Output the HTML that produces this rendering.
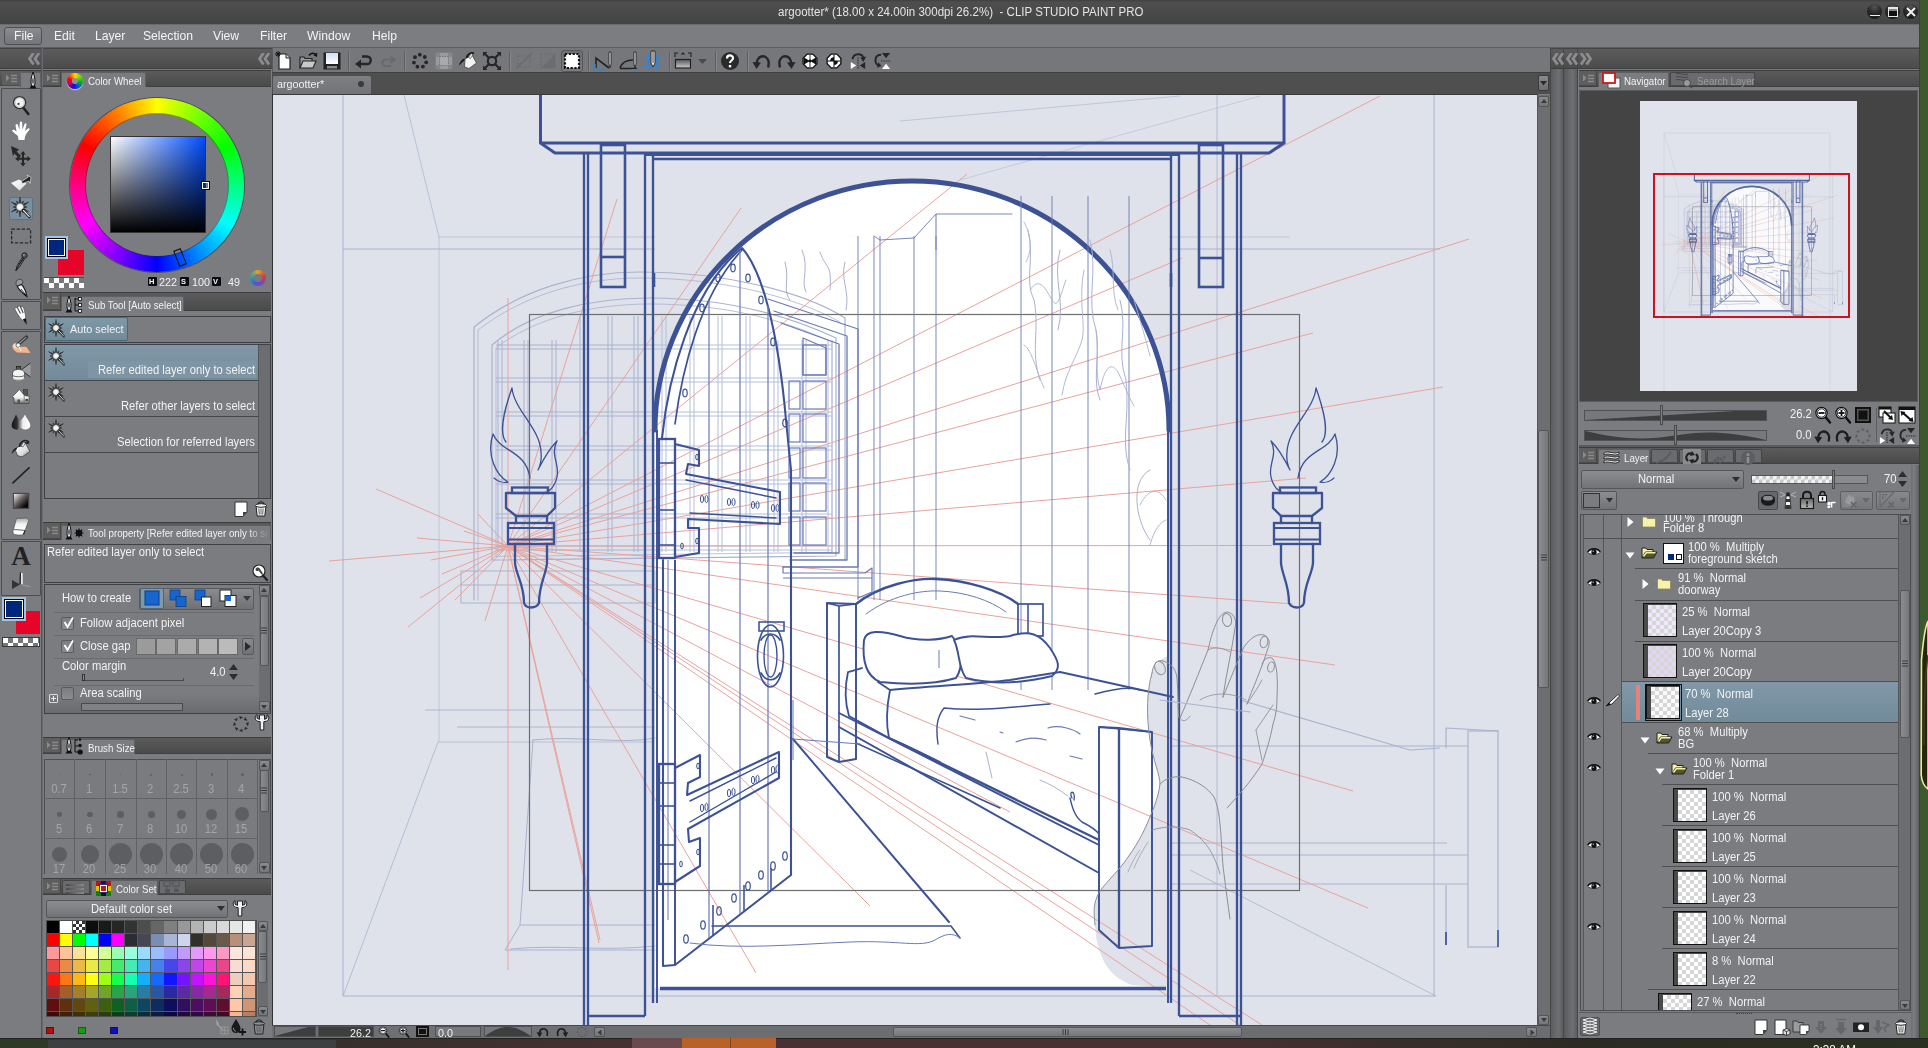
<!DOCTYPE html><html><head><meta charset="utf-8"><title>CLIP STUDIO PAINT PRO</title><style>*{box-sizing:border-box;margin:0;padding:0}
html,body{width:1928px;height:1048px;overflow:hidden;background:#7b7c80;font-family:"Liberation Sans",sans-serif;font-size:12px;color:#f2f2f2}
.a{position:absolute}
.t{position:absolute;white-space:nowrap;line-height:1;transform:scaleX(.935);transform-origin:0 50%}
.menu{position:absolute;top:29px;font-size:13px;color:#f4f4f4}
.chk{background-image:linear-gradient(45deg,#ccc 25%,transparent 25%,transparent 75%,#ccc 75%),linear-gradient(45deg,#ccc 25%,#fff 25%,#fff 75%,#ccc 75%);background-size:10px 10px;background-position:0 0,5px 5px}
.chk2{background-color:#fff;background-image:linear-gradient(45deg,#d6d6d6 25%,transparent 25%,transparent 75%,#d6d6d6 75%),linear-gradient(45deg,#d6d6d6 25%,transparent 25%,transparent 75%,#d6d6d6 75%);background-size:8px 8px;background-position:0 0,4px 4px}
.chk3{background-color:#f4f4f4;background-image:linear-gradient(45deg,#c4c4c4 25%,transparent 25%,transparent 75%,#c4c4c4 75%),linear-gradient(45deg,#c4c4c4 25%,transparent 25%,transparent 75%,#c4c4c4 75%);background-size:7px 7px;background-position:0 0,3.5px 3.5px}
.chkd{background-color:#fff;background-image:linear-gradient(45deg,#777 25%,transparent 25%,transparent 75%,#777 75%),linear-gradient(45deg,#777 25%,transparent 25%,transparent 75%,#777 75%);background-size:10px 10px;background-position:0 0,5px 5px}
</style></head><body>
<!-- frame -->
<div class="a" style="left:0px;top:0px;width:1920px;height:24px;background:linear-gradient(#3f3f3f 0,#4e4e4e 2px,#494949 60%,#434343 100%)"></div>
<div class="t" style="left:778px;top:6px;font-size:12.3px;color:#e4e4e4;letter-spacing:0.04px">argootter* (18.00 x 24.00in 300dpi 26.2%)&nbsp; - CLIP STUDIO PAINT PRO</div>
<div class="a" style="left:0px;top:24px;width:1920px;height:24px;background:#7c7d81;border-top:1px solid #6a6b6f;border-bottom:1px solid #5c5d60"></div>
<div class="a" style="left:4px;top:27px;width:38px;height:18px;border:1px solid #4e4f52;border-radius:3px;background:linear-gradient(#8b8c90,#74757a)"></div>
<div class="menu t" style="left:14px">File</div>
<div class="menu t" style="left:54px">Edit</div>
<div class="menu t" style="left:95px">Layer</div>
<div class="menu t" style="left:143px">Selection</div>
<div class="menu t" style="left:213px">View</div>
<div class="menu t" style="left:260px">Filter</div>
<div class="menu t" style="left:307px">Window</div>
<div class="menu t" style="left:372px">Help</div>
<div class="a" style="left:1920px;top:0px;width:8px;height:1048px;background:#3c5a2d"></div>
<svg class="a" style="left:1920px;top:615px;" width="8" height="180" viewBox="0 0 8 180"><path d="M8,6 C4,14 3,30 1.5,45 L1.2,160 C2,168 5,172 8,174 Z" fill="#24260f" stroke="#f3e3a0" stroke-width="1.6"/><path d="M8,40 C5,60 4,90 4,130" stroke="#3d3f1c" stroke-width="1.5" fill="none"/></svg>
<div class="a" style="left:0px;top:1038px;width:1928px;height:10px;background:linear-gradient(90deg,#2e3a26 0,#33302a 15%,#4a3033 35%,#4a2f33 62%,#352d28 76%,#2c2b21 82%,#2a3121 100%);border-top:1px solid #222"></div>
<div class="a" style="left:48px;top:1040px;width:288px;height:8px;background:#3e3f41"></div>
<div class="a" style="left:632px;top:1038px;width:50px;height:10px;background:#6a4a4e"></div>
<div class="a" style="left:682px;top:1038px;width:48px;height:10px;background:#b8622a"></div>
<div class="a" style="left:730px;top:1038px;width:46px;height:10px;background:#b8622a;border-left:1px solid #7a4522"></div>
<div class="t" style="left:1813px;top:1043.5px;font-size:12.5px;color:#ffffff;">3:38 AM</div>
<div class="a" style="left:0px;top:48px;width:272px;height:21px;background:linear-gradient(#5c5c5c,#4c4c4c);border-top:1px solid #444;border-bottom:1px solid #3e3e3e"></div>
<div class="a" style="left:41px;top:48px;width:2px;height:990px;background:#6a6b6f;border-left:1px solid #55565a"></div>
<div class="a" style="left:272px;top:48px;width:1278px;height:24px;background:#76777b;border-left:1px solid #5a5b5e"></div>
<div class="a" style="left:272px;top:72px;width:1278px;height:22px;background:#4f4f4f;border-top:1px solid #404040"></div>
<div class="a" style="left:273px;top:76px;width:98px;height:18px;background:linear-gradient(#7e7f83,#727377);border-radius:2px 2px 0 0"></div>
<div class="t" style="left:277px;top:79px;font-size:11.5px;color:#f0f0f0;">argootter*</div>
<div class="a" style="left:358px;top:81px;width:6px;height:6px;background:#3a3a3a;border-radius:50%"></div>
<div class="a" style="left:272px;top:94px;width:1266px;height:1px;background:#3a3a3a"></div>
<div class="a" style="left:272px;top:94px;width:1px;height:932px;background:#2e3034"></div>
<!-- canvas -->
<div class="a" style="left:273px;top:95px;width:1264px;height:930px;background:#dfe2ea;overflow:hidden"><svg class="a" style="left:0;top:0" width="1264" height="930" viewBox="273 95 1264 930"><path d="M655,988 L655,430 A257,249 0 0 1 1169,430 L1169,656 C1162,657 1155,664 1152,673 C1147,690 1146,715 1150,740 C1153,760 1160,775 1160,784 C1158,800 1152,812 1147,824 C1140,840 1132,852 1123,864 C1112,878 1100,888 1097,897 C1093,906 1094,915 1095,925 C1096,945 1102,975 1132,985 L1166,988 Z" fill="#ffffff" stroke="none"/>
<line x1="343" y1="95" x2="343" y2="996" stroke="#aab2cf" stroke-width="1" opacity="1"/>
<line x1="1434" y1="95" x2="1434" y2="996" stroke="#aab2cf" stroke-width="1" opacity="1"/>
<line x1="1217" y1="95" x2="1217" y2="996" stroke="#aab2cf" stroke-width="1" opacity="0.8"/>
<line x1="900" y1="121" x2="1180" y2="96" stroke="#aab2cf" stroke-width="1" opacity="0.6"/>
<line x1="960" y1="180" x2="1260" y2="96" stroke="#aab2cf" stroke-width="1" opacity="0.5"/>
<line x1="343" y1="249" x2="655" y2="249" stroke="#aab2cf" stroke-width="1" opacity="1"/>
<line x1="1169" y1="249" x2="1440" y2="249" stroke="#aab2cf" stroke-width="1" opacity="1"/>
<line x1="438" y1="237" x2="655" y2="237" stroke="#aab2cf" stroke-width="1" opacity="0.6"/>
<line x1="1169" y1="237" x2="1290" y2="237" stroke="#aab2cf" stroke-width="1" opacity="0.6"/>
<line x1="404" y1="95" x2="439" y2="237" stroke="#aab2cf" stroke-width="1" opacity="0.7"/>
<line x1="439" y1="237" x2="439" y2="742" stroke="#aab2cf" stroke-width="1" opacity="0.6"/>
<line x1="343" y1="996" x2="1436" y2="996" stroke="#aab2cf" stroke-width="1" opacity="1"/>
<line x1="343" y1="996" x2="438" y2="742" stroke="#aab2cf" stroke-width="1" opacity="0.8"/>
<line x1="1436" y1="996" x2="1190" y2="870" stroke="#aab2cf" stroke-width="1" opacity="0.8"/>
<line x1="438" y1="742" x2="655" y2="742" stroke="#aab2cf" stroke-width="1" opacity="0.7"/>
<line x1="425" y1="710" x2="655" y2="710" stroke="#aab2cf" stroke-width="1" opacity="0.9"/>
<line x1="457" y1="727" x2="655" y2="727" stroke="#aab2cf" stroke-width="1" opacity="0.9"/>
<rect x="461" y="571" width="194" height="32" stroke="#aab2cf" stroke-width="1" fill="none" opacity="1"/>
<line x1="461" y1="585" x2="655" y2="585" stroke="#aab2cf" stroke-width="1" opacity="1"/>
<path d="M533,740 L520,925 L505,950 L655,950" stroke="#aab2cf" stroke-width="1" fill="none" opacity="1" stroke-linejoin="round" stroke-linecap="round" />
<path d="M511,949 C560,944 600,952 655,946" stroke="#aab2cf" stroke-width="1" fill="none" opacity="1" stroke-linejoin="round" stroke-linecap="round" />
<line x1="520" y1="925" x2="655" y2="925" stroke="#aab2cf" stroke-width="1" opacity="1"/>
<path d="M533,740 C580,735 620,745 655,738" stroke="#aab2cf" stroke-width="1" fill="none" opacity="1" stroke-linejoin="round" stroke-linecap="round" />
<rect x="1468" y="731" width="30" height="216" stroke="#aab2cf" stroke-width="1.2" fill="none" opacity="1"/>
<path d="M1446,748 L1446,728 L1498,731" stroke="#aab2cf" stroke-width="1.2" fill="none" opacity="1" stroke-linejoin="round" stroke-linecap="round" />
<line x1="1446" y1="885" x2="1446" y2="932" stroke="#aab2cf" stroke-width="1.2" opacity="1"/>
<line x1="1446" y1="932" x2="1446" y2="945" stroke="#3c5294" stroke-width="1.95" opacity="0.9"/>
<line x1="1498" y1="930" x2="1498" y2="947" stroke="#3c5294" stroke-width="1.95" opacity="0.8"/>
<line x1="1170" y1="746" x2="1468" y2="746" stroke="#aab2cf" stroke-width="1" opacity="1"/>
<line x1="1170" y1="843" x2="1447" y2="843" stroke="#aab2cf" stroke-width="1" opacity="1"/>
<line x1="1170" y1="855" x2="1468" y2="855" stroke="#aab2cf" stroke-width="1" opacity="1"/>
<line x1="1170" y1="884" x2="1468" y2="884" stroke="#aab2cf" stroke-width="1" opacity="1"/>
<line x1="1240" y1="700" x2="1410" y2="750" stroke="#aab2cf" stroke-width="1.2" opacity="1"/>
<line x1="1410" y1="750" x2="1440" y2="748" stroke="#aab2cf" stroke-width="1" opacity="1"/>
<path d="M474,600 L474,327 C520,290 580,272 640,272 C720,272 800,290 845,318 L845,560" stroke="#aab2cf" stroke-width="1.2" fill="none" opacity="1" stroke-linejoin="round" stroke-linecap="round" />
<path d="M478,600 L478,330 C522,296 580,278 640,278 C715,278 790,294 840,322" stroke="#aab2cf" stroke-width="1" fill="none" opacity="0.8" stroke-linejoin="round" stroke-linecap="round" />
<path d="M492,560 L492,345 C530,312 590,298 650,298 C720,298 780,312 836,338 L836,556 Z" stroke="#aab2cf" stroke-width="1.2" fill="none" opacity="1" stroke-linejoin="round" stroke-linecap="round" />
<path d="M496,556 L496,348 C534,318 592,304 650,304 C715,304 776,316 832,342 L832,552 Z" stroke="#aab2cf" stroke-width="1" fill="none" opacity="0.8" stroke-linejoin="round" stroke-linecap="round" />
<line x1="498" y1="340" x2="498" y2="552" stroke="#aab2cf" stroke-width="1" opacity="1"/>
<line x1="502" y1="340" x2="502" y2="552" stroke="#aab2cf" stroke-width="1" opacity="1"/>
<line x1="524" y1="340" x2="524" y2="552" stroke="#aab2cf" stroke-width="1" opacity="1"/>
<line x1="528" y1="340" x2="528" y2="552" stroke="#aab2cf" stroke-width="1" opacity="1"/>
<line x1="552" y1="340" x2="552" y2="552" stroke="#aab2cf" stroke-width="1" opacity="1"/>
<line x1="556" y1="340" x2="556" y2="552" stroke="#aab2cf" stroke-width="1" opacity="1"/>
<line x1="580" y1="316" x2="580" y2="552" stroke="#aab2cf" stroke-width="1" opacity="1"/>
<line x1="584" y1="316" x2="584" y2="552" stroke="#aab2cf" stroke-width="1" opacity="1"/>
<line x1="608" y1="316" x2="608" y2="552" stroke="#aab2cf" stroke-width="1" opacity="1"/>
<line x1="612" y1="316" x2="612" y2="552" stroke="#aab2cf" stroke-width="1" opacity="1"/>
<line x1="634" y1="316" x2="634" y2="552" stroke="#aab2cf" stroke-width="1" opacity="1"/>
<line x1="638" y1="316" x2="638" y2="552" stroke="#aab2cf" stroke-width="1" opacity="1"/>
<line x1="662" y1="316" x2="662" y2="552" stroke="#b4bedc" stroke-width="1" opacity="1"/>
<line x1="666" y1="316" x2="666" y2="552" stroke="#b4bedc" stroke-width="1" opacity="1"/>
<line x1="690" y1="316" x2="690" y2="552" stroke="#b4bedc" stroke-width="1" opacity="1"/>
<line x1="694" y1="316" x2="694" y2="552" stroke="#b4bedc" stroke-width="1" opacity="1"/>
<line x1="718" y1="316" x2="718" y2="552" stroke="#b4bedc" stroke-width="1" opacity="1"/>
<line x1="722" y1="316" x2="722" y2="552" stroke="#b4bedc" stroke-width="1" opacity="1"/>
<line x1="746" y1="316" x2="746" y2="552" stroke="#b4bedc" stroke-width="1" opacity="1"/>
<line x1="750" y1="316" x2="750" y2="552" stroke="#b4bedc" stroke-width="1" opacity="1"/>
<line x1="774" y1="340" x2="774" y2="552" stroke="#b4bedc" stroke-width="1" opacity="1"/>
<line x1="778" y1="340" x2="778" y2="552" stroke="#b4bedc" stroke-width="1" opacity="1"/>
<line x1="802" y1="340" x2="802" y2="552" stroke="#b4bedc" stroke-width="1" opacity="1"/>
<line x1="806" y1="340" x2="806" y2="552" stroke="#b4bedc" stroke-width="1" opacity="1"/>
<line x1="828" y1="340" x2="828" y2="552" stroke="#b4bedc" stroke-width="1" opacity="1"/>
<line x1="832" y1="340" x2="832" y2="552" stroke="#b4bedc" stroke-width="1" opacity="1"/>
<line x1="496" y1="345" x2="655" y2="345" stroke="#aab2cf" stroke-width="1" opacity="1"/>
<line x1="496" y1="349" x2="655" y2="349" stroke="#aab2cf" stroke-width="1" opacity="1"/>
<line x1="655" y1="345" x2="832" y2="345" stroke="#b4bedc" stroke-width="1" opacity="1"/>
<line x1="655" y1="349" x2="832" y2="349" stroke="#b4bedc" stroke-width="1" opacity="1"/>
<line x1="496" y1="378" x2="655" y2="378" stroke="#aab2cf" stroke-width="1" opacity="1"/>
<line x1="496" y1="382" x2="655" y2="382" stroke="#aab2cf" stroke-width="1" opacity="1"/>
<line x1="655" y1="378" x2="832" y2="378" stroke="#b4bedc" stroke-width="1" opacity="1"/>
<line x1="655" y1="382" x2="832" y2="382" stroke="#b4bedc" stroke-width="1" opacity="1"/>
<line x1="496" y1="412" x2="655" y2="412" stroke="#aab2cf" stroke-width="1" opacity="1"/>
<line x1="496" y1="416" x2="655" y2="416" stroke="#aab2cf" stroke-width="1" opacity="1"/>
<line x1="655" y1="412" x2="832" y2="412" stroke="#b4bedc" stroke-width="1" opacity="1"/>
<line x1="655" y1="416" x2="832" y2="416" stroke="#b4bedc" stroke-width="1" opacity="1"/>
<line x1="496" y1="446" x2="655" y2="446" stroke="#aab2cf" stroke-width="1" opacity="1"/>
<line x1="496" y1="450" x2="655" y2="450" stroke="#aab2cf" stroke-width="1" opacity="1"/>
<line x1="655" y1="446" x2="832" y2="446" stroke="#b4bedc" stroke-width="1" opacity="1"/>
<line x1="655" y1="450" x2="832" y2="450" stroke="#b4bedc" stroke-width="1" opacity="1"/>
<line x1="496" y1="480" x2="655" y2="480" stroke="#aab2cf" stroke-width="1" opacity="1"/>
<line x1="496" y1="484" x2="655" y2="484" stroke="#aab2cf" stroke-width="1" opacity="1"/>
<line x1="655" y1="480" x2="832" y2="480" stroke="#b4bedc" stroke-width="1" opacity="1"/>
<line x1="655" y1="484" x2="832" y2="484" stroke="#b4bedc" stroke-width="1" opacity="1"/>
<line x1="496" y1="514" x2="655" y2="514" stroke="#aab2cf" stroke-width="1" opacity="1"/>
<line x1="496" y1="518" x2="655" y2="518" stroke="#aab2cf" stroke-width="1" opacity="1"/>
<line x1="655" y1="514" x2="832" y2="514" stroke="#b4bedc" stroke-width="1" opacity="1"/>
<line x1="655" y1="518" x2="832" y2="518" stroke="#b4bedc" stroke-width="1" opacity="1"/>
<line x1="496" y1="546" x2="655" y2="546" stroke="#aab2cf" stroke-width="1" opacity="1"/>
<line x1="496" y1="550" x2="655" y2="550" stroke="#aab2cf" stroke-width="1" opacity="1"/>
<line x1="655" y1="546" x2="832" y2="546" stroke="#b4bedc" stroke-width="1" opacity="1"/>
<line x1="655" y1="550" x2="832" y2="550" stroke="#b4bedc" stroke-width="1" opacity="1"/>
<line x1="508.0" y1="546.0" x2="329" y2="561" stroke="#e9a29c" stroke-width="1" opacity="1"/>
<line x1="508.0" y1="546.0" x2="376" y2="489" stroke="#e9a29c" stroke-width="1" opacity="1"/>
<line x1="508.0" y1="546.0" x2="417" y2="538" stroke="#e9a29c" stroke-width="1" opacity="1"/>
<line x1="508.0" y1="546.0" x2="431" y2="560" stroke="#e9a29c" stroke-width="1" opacity="1"/>
<line x1="508.0" y1="546.0" x2="442" y2="574" stroke="#e9a29c" stroke-width="1" opacity="1"/>
<line x1="508.0" y1="546.0" x2="408" y2="627" stroke="#e9a29c" stroke-width="1" opacity="1"/>
<line x1="508.0" y1="546.0" x2="464" y2="531" stroke="#e9a29c" stroke-width="1" opacity="1"/>
<line x1="508.0" y1="546.0" x2="478" y2="514" stroke="#e9a29c" stroke-width="1" opacity="1"/>
<line x1="508.0" y1="546.0" x2="485" y2="621" stroke="#e9a29c" stroke-width="1" opacity="1"/>
<line x1="508.0" y1="546.0" x2="599" y2="943" stroke="#e9a29c" stroke-width="1" opacity="1"/>
<line x1="508.0" y1="546.0" x2="756" y2="973" stroke="#e9a29c" stroke-width="1" opacity="1"/>
<line x1="508.0" y1="546.0" x2="870" y2="906" stroke="#e9a29c" stroke-width="1" opacity="1"/>
<line x1="508.0" y1="546.0" x2="617" y2="199" stroke="#e9a29c" stroke-width="1" opacity="1"/>
<line x1="508.0" y1="546.0" x2="741" y2="208" stroke="#e9a29c" stroke-width="1" opacity="1"/>
<line x1="508.0" y1="546.0" x2="1469" y2="239" stroke="#e9a29c" stroke-width="1" opacity="1"/>
<line x1="508.0" y1="546.0" x2="1443" y2="387" stroke="#e9a29c" stroke-width="1" opacity="1"/>
<line x1="508.0" y1="546.0" x2="1313" y2="333" stroke="#e9a29c" stroke-width="1" opacity="1"/>
<line x1="508.0" y1="546.0" x2="1380" y2="96" stroke="#e9a29c" stroke-width="1" opacity="1"/>
<line x1="508.0" y1="546.0" x2="1335" y2="665" stroke="#e9a29c" stroke-width="1" opacity="1"/>
<line x1="508.0" y1="546.0" x2="1353" y2="791" stroke="#e9a29c" stroke-width="1" opacity="1"/>
<line x1="508.0" y1="546.0" x2="1368" y2="908" stroke="#e9a29c" stroke-width="1" opacity="1"/>
<line x1="508.0" y1="546.0" x2="1240" y2="1025" stroke="#e9a29c" stroke-width="1" opacity="1"/>
<line x1="508.0" y1="546.0" x2="1262" y2="1025" stroke="#e9a29c" stroke-width="1" opacity="1"/>
<line x1="508.0" y1="546.0" x2="1210" y2="1025" stroke="#e9a29c" stroke-width="1" opacity="1"/>
<line x1="508.0" y1="546.0" x2="1010" y2="812" stroke="#e9a29c" stroke-width="1" opacity="1"/>
<line x1="508.0" y1="546.0" x2="967" y2="174" stroke="#e9a29c" stroke-width="1" opacity="1"/>
<line x1="508.0" y1="546.0" x2="1182" y2="258" stroke="#e9a29c" stroke-width="1" opacity="1"/>
<line x1="508.0" y1="546.0" x2="1306" y2="478" stroke="#e9a29c" stroke-width="1" opacity="1"/>
<line x1="508.0" y1="546.0" x2="1293" y2="604" stroke="#e9a29c" stroke-width="1" opacity="1"/>
<line x1="508.0" y1="546.0" x2="1272" y2="545.5" stroke="#e9a29c" stroke-width="1" opacity="1"/>
<line x1="508.0" y1="546.0" x2="600" y2="940" stroke="#e9a29c" stroke-width="1" opacity="1"/>
<line x1="508.0" y1="546.0" x2="420" y2="598" stroke="#e9a29c" stroke-width="1" opacity="1"/>
<line x1="508.0" y1="546.0" x2="455" y2="600" stroke="#e9a29c" stroke-width="1" opacity="1"/>
<line x1="508" y1="298" x2="508" y2="970" stroke="#e9a29c" stroke-width="1" opacity="1"/>
<rect x="529.5" y="314.5" width="770" height="576" stroke="#6e6e72" stroke-width="1.2" fill="none" opacity="1"/>
<path d="M540.5,95 L540.5,143 L1284,143 L1284,95" stroke="#3c5294" stroke-width="2.99" fill="none" opacity="1" stroke-linejoin="round" stroke-linecap="round" />
<path d="M540.5,143 L555,153 L1269,153 L1284,143" stroke="#3c5294" stroke-width="2.99" fill="none" opacity="1" stroke-linejoin="round" stroke-linecap="round" />
<line x1="584" y1="154" x2="584" y2="1027" stroke="#3c5294" stroke-width="2.34" opacity="1"/>
<line x1="588" y1="154" x2="588" y2="1027" stroke="#3c5294" stroke-width="2.34" opacity="1"/>
<line x1="645" y1="154" x2="645" y2="1016" stroke="#3c5294" stroke-width="2.34" opacity="1"/>
<line x1="653" y1="154" x2="653" y2="1003" stroke="#3c5294" stroke-width="2.34" opacity="1"/>
<line x1="1171" y1="154" x2="1171" y2="1003" stroke="#3c5294" stroke-width="2.34" opacity="1"/>
<line x1="1179" y1="154" x2="1179" y2="1016" stroke="#3c5294" stroke-width="2.34" opacity="1"/>
<line x1="1237" y1="154" x2="1237" y2="1027" stroke="#3c5294" stroke-width="2.34" opacity="1"/>
<line x1="1241" y1="154" x2="1241" y2="1027" stroke="#3c5294" stroke-width="2.34" opacity="1"/>
<line x1="588" y1="1016" x2="645" y2="1016" stroke="#3c5294" stroke-width="2.6" opacity="1"/>
<line x1="1179" y1="1016" x2="1241" y2="1016" stroke="#3c5294" stroke-width="2.6" opacity="1"/>
<line x1="653" y1="159" x2="1171" y2="159" stroke="#3c5294" stroke-width="2.34" opacity="1"/>
<line x1="645" y1="155" x2="1179" y2="155" stroke="#3c5294" stroke-width="1.95" opacity="1"/>
<rect x="601" y="145" width="24" height="142" stroke="#3c5294" stroke-width="2.6" fill="none" opacity="1"/>
<line x1="601" y1="257" x2="625" y2="257" stroke="#3c5294" stroke-width="2.6" opacity="1"/>
<rect x="1199" y="145" width="24" height="142" stroke="#3c5294" stroke-width="2.6" fill="none" opacity="1"/>
<line x1="1199" y1="258" x2="1223" y2="258" stroke="#3c5294" stroke-width="2.6" opacity="1"/>
<line x1="1171" y1="273" x2="1171" y2="287" stroke="#3c5294" stroke-width="2.6" opacity="1"/>
<line x1="654" y1="273" x2="654" y2="287" stroke="#3c5294" stroke-width="2.6" opacity="1"/>
<path d="M655,430 A257,249 0 0 1 1169,430" fill="none" stroke="#3c5294" stroke-width="5" stroke-linecap="round"/>
<line x1="657" y1="430" x2="657" y2="1003" stroke="#3c5294" stroke-width="1.95" opacity="1"/>
<line x1="1168" y1="430" x2="1168" y2="1003" stroke="#3c5294" stroke-width="1.95" opacity="1"/>
<line x1="660" y1="988.5" x2="1166" y2="988.5" stroke="#3c5294" stroke-width="3.64" opacity="1"/>
<path d="M512,388 C505,408 498,432 506,442 M512,388 C514,410 540,428 541,452 C542,462 538,470 538,470 M493,434 C486,455 496,475 508,482 C500,484 497,480 494,478 M493,434 C500,452 526,450 530,478 M557,441 C548,450 542,462 538,470 M557,441 C548,458 566,468 552,488 C550,490 547,492 547,492" stroke="#3c5294" stroke-width="1.3" fill="none" opacity="1" stroke-linejoin="round" stroke-linecap="round" />
<rect x="512" y="487.5" width="36" height="5.5" stroke="#3c5294" stroke-width="2.34" fill="none" opacity="1"/>
<path d="M506,493 L555,493 L555,508 L547,516 L516,516 L506,508 Z" stroke="#3c5294" stroke-width="2.34" fill="none" opacity="1" stroke-linejoin="round" stroke-linecap="round" />
<path d="M516,516 L516,523 M547,516 L547,523" stroke="#3c5294" stroke-width="2.34" fill="none" opacity="1" stroke-linejoin="round" stroke-linecap="round" />
<rect x="508" y="523" width="46" height="21" stroke="#3c5294" stroke-width="2.34" fill="none" opacity="1"/>
<line x1="508" y1="528" x2="554" y2="528" stroke="#3c5294" stroke-width="1.95" opacity="1"/>
<line x1="508" y1="539.5" x2="554" y2="539.5" stroke="#3c5294" stroke-width="1.95" opacity="1"/>
<path d="M515,544 L515,563 C516,575 524,584 524,603 C526,609 536,609 539,603 C539,584 546,575 547,563 L547,544" stroke="#3c5294" stroke-width="2.34" fill="none" opacity="1" stroke-linejoin="round" stroke-linecap="round" />
<path d="M1316,388 C1323,408 1330,432 1322,442 M1316,388 C1314,410 1288,428 1287,452 C1286,462 1290,470 1290,470 M1335,434 C1342,455 1332,475 1320,482 C1328,484 1331,480 1334,478 M1335,434 C1328,452 1302,450 1298,478 M1271,441 C1280,450 1286,462 1290,470 M1271,441 C1280,458 1262,468 1276,488 C1278,490 1281,492 1281,492" stroke="#3c5294" stroke-width="1.3" fill="none" opacity="1" stroke-linejoin="round" stroke-linecap="round" />
<rect x="1280" y="487.5" width="36" height="5.5" stroke="#3c5294" stroke-width="2.34" fill="none" opacity="1"/>
<path d="M1322,493 L1273,493 L1273,508 L1281,516 L1312,516 L1322,508 Z" stroke="#3c5294" stroke-width="2.34" fill="none" opacity="1" stroke-linejoin="round" stroke-linecap="round" />
<path d="M1312,516 L1312,523 M1281,516 L1281,523" stroke="#3c5294" stroke-width="2.34" fill="none" opacity="1" stroke-linejoin="round" stroke-linecap="round" />
<rect x="1274" y="523" width="46" height="21" stroke="#3c5294" stroke-width="2.34" fill="none" opacity="1"/>
<line x1="1320" y1="528" x2="1274" y2="528" stroke="#3c5294" stroke-width="1.95" opacity="1"/>
<line x1="1320" y1="539.5" x2="1274" y2="539.5" stroke="#3c5294" stroke-width="1.95" opacity="1"/>
<path d="M1313,544 L1313,563 C1312,575 1304,584 1304,603 C1302,609 1292,609 1289,603 C1289,584 1282,575 1281,563 L1281,544" stroke="#3c5294" stroke-width="2.34" fill="none" opacity="1" stroke-linejoin="round" stroke-linecap="round" />
<line x1="858" y1="236" x2="858" y2="600" stroke="#6b7ab6" stroke-width="1" opacity="0.9"/>
<line x1="874" y1="236" x2="874" y2="600" stroke="#6b7ab6" stroke-width="1" opacity="0.9"/>
<line x1="880" y1="236" x2="880" y2="600" stroke="#6b7ab6" stroke-width="1" opacity="0.9"/>
<line x1="914" y1="236" x2="914" y2="600" stroke="#6b7ab6" stroke-width="1" opacity="0.9"/>
<line x1="936" y1="236" x2="936" y2="600" stroke="#6b7ab6" stroke-width="1" opacity="0.9"/>
<line x1="1021" y1="196" x2="1021" y2="690" stroke="#6b7ab6" stroke-width="1" opacity="0.9"/>
<line x1="1052" y1="196" x2="1052" y2="690" stroke="#6b7ab6" stroke-width="1" opacity="0.9"/>
<line x1="1088" y1="196" x2="1088" y2="690" stroke="#6b7ab6" stroke-width="1" opacity="0.9"/>
<line x1="1129" y1="196" x2="1129" y2="690" stroke="#6b7ab6" stroke-width="1" opacity="0.9"/>
<path d="M874,236 L880,240 M880,240 L914,238 L936,214 L1012,214" stroke="#6b7ab6" stroke-width="1" fill="none" opacity="0.9" stroke-linejoin="round" stroke-linecap="round" />
<line x1="936" y1="214" x2="936" y2="250" stroke="#6b7ab6" stroke-width="1" opacity="1"/>
<path d="M785,262 C790,280 782,290 790,300 M802,250 C810,270 800,280 806,292 M820,252 C826,270 832,262 830,290 M845,262 C840,280 850,290 846,310" stroke="#aab2cf" stroke-width="1" fill="none" opacity="1" stroke-linejoin="round" stroke-linecap="round" />
<path d="M1028,230 C1035,260 1024,280 1034,300 C1040,330 1030,350 1040,380 M1060,250 C1052,280 1066,300 1058,330 M1090,240 C1098,270 1086,300 1096,330 C1100,360 1092,380 1100,400 M1120,300 C1128,330 1116,350 1126,380 C1130,420 1120,440 1130,470" stroke="#aab2cf" stroke-width="1" fill="none" opacity="1" stroke-linejoin="round" stroke-linecap="round" />
<path d="M1150,470 C1130,480 1135,520 1150,540" stroke="#aab2cf" stroke-width="1" fill="none" opacity="1" stroke-linejoin="round" stroke-linecap="round" />
<path d="M1024,222 C1034,240 1030,255 1026,262 M1030,290 C1040,275 1046,290 1052,300 C1058,310 1060,296 1066,280 M1024,345 C1032,350 1036,370 1044,388 M1062,395 C1066,370 1076,360 1082,340 C1086,325 1078,300 1084,270 M1096,330 C1100,350 1094,370 1100,390 C1104,370 1110,360 1118,372 C1124,384 1128,396 1134,406 M1110,250 C1116,270 1110,290 1118,310 M1134,300 C1140,320 1146,340 1150,356" stroke="#aab2cf" stroke-width="1" fill="none" opacity="0.9" stroke-linejoin="round" stroke-linecap="round" />
<path d="M1140,505 C1150,485 1160,490 1166,500 M1150,545 C1154,530 1160,522 1166,520" stroke="#aab2cf" stroke-width="1" fill="none" opacity="0.9" stroke-linejoin="round" stroke-linecap="round" />
<path d="M768,299 L858,329 L858,567 L783,567" stroke="#6b7ab6" stroke-width="1.3" fill="none" opacity="1" stroke-linejoin="round" stroke-linecap="round" />
<path d="M774,311 L847,336 L847,560 L790,560" stroke="#6b7ab6" stroke-width="1.3" fill="none" opacity="1" stroke-linejoin="round" stroke-linecap="round" />
<path d="M781,323 L839,344 L839,553 L794,553" stroke="#6b7ab6" stroke-width="1.3" fill="none" opacity="1" stroke-linejoin="round" stroke-linecap="round" />
<rect x="789" y="381" width="11" height="28" stroke="#6b7ab6" stroke-width="1.2" fill="none" opacity="1"/>
<rect x="789" y="414" width="11" height="28" stroke="#6b7ab6" stroke-width="1.2" fill="none" opacity="1"/>
<rect x="789" y="448" width="11" height="30" stroke="#6b7ab6" stroke-width="1.2" fill="none" opacity="1"/>
<rect x="789" y="483" width="11" height="28" stroke="#6b7ab6" stroke-width="1.2" fill="none" opacity="1"/>
<rect x="789" y="517" width="11" height="28" stroke="#6b7ab6" stroke-width="1.2" fill="none" opacity="1"/>
<rect x="803" y="345" width="23" height="30" stroke="#6b7ab6" stroke-width="1.2" fill="none" opacity="1"/>
<rect x="803" y="381" width="23" height="28" stroke="#6b7ab6" stroke-width="1.2" fill="none" opacity="1"/>
<rect x="803" y="414" width="23" height="28" stroke="#6b7ab6" stroke-width="1.2" fill="none" opacity="1"/>
<rect x="803" y="448" width="23" height="30" stroke="#6b7ab6" stroke-width="1.2" fill="none" opacity="1"/>
<rect x="803" y="483" width="23" height="28" stroke="#6b7ab6" stroke-width="1.2" fill="none" opacity="1"/>
<rect x="803" y="517" width="23" height="28" stroke="#6b7ab6" stroke-width="1.2" fill="none" opacity="1"/>
<path d="M803,375 L803,338 L826,348 L826,375 Z" stroke="#6b7ab6" stroke-width="1.2" fill="none" opacity="1" stroke-linejoin="round" stroke-linecap="round" />
<path d="M783,567 L783,573 L865,573 L872,568 L872,592 L858,598" stroke="#6b7ab6" stroke-width="1.2" fill="none" opacity="1" stroke-linejoin="round" stroke-linecap="round" />
<line x1="783" y1="578" x2="872" y2="578" stroke="#6b7ab6" stroke-width="1" opacity="1"/>
<path d="M662,438 C668,380 690,290 742,248 C762,270 778,330 786,420 L791,470 L791,875 L675,965 L663,966 L663,560" stroke="#3c5294" stroke-width="2.08" fill="none" opacity="1" stroke-linejoin="round" stroke-linecap="round" />
<path d="M675,424 C682,370 700,295 742,250" stroke="#3c5294" stroke-width="1.69" fill="none" opacity="1" stroke-linejoin="round" stroke-linecap="round" />
<line x1="675" y1="560" x2="675" y2="965" stroke="#3c5294" stroke-width="1.95" opacity="1"/>
<line x1="668" y1="560" x2="668" y2="920" stroke="#6b7ab6" stroke-width="1" opacity="1"/>
<line x1="709" y1="300" x2="709" y2="938" stroke="#6b7ab6" stroke-width="1.2" opacity="1"/>
<line x1="740" y1="250" x2="740" y2="914" stroke="#6b7ab6" stroke-width="1.2" opacity="1"/>
<line x1="768" y1="305" x2="768" y2="893" stroke="#6b7ab6" stroke-width="1.2" opacity="1"/>
<line x1="713" y1="905" x2="713" y2="935" stroke="#3c5294" stroke-width="1.56" opacity="1"/>
<line x1="744" y1="885" x2="744" y2="912" stroke="#3c5294" stroke-width="1.56" opacity="1"/>
<line x1="771" y1="868" x2="771" y2="890" stroke="#3c5294" stroke-width="1.56" opacity="1"/>
<ellipse cx="702" cy="308" rx="2.2" ry="3.8" stroke="#3c5294" stroke-width="1.2" fill="none"/>
<ellipse cx="718" cy="278" rx="2.2" ry="3.8" stroke="#3c5294" stroke-width="1.2" fill="none"/>
<ellipse cx="733" cy="268" rx="2.2" ry="3.8" stroke="#3c5294" stroke-width="1.2" fill="none"/>
<ellipse cx="748" cy="278" rx="2.2" ry="3.8" stroke="#3c5294" stroke-width="1.2" fill="none"/>
<ellipse cx="761" cy="300" rx="2.2" ry="3.8" stroke="#3c5294" stroke-width="1.2" fill="none"/>
<ellipse cx="773" cy="342" rx="2.2" ry="3.8" stroke="#3c5294" stroke-width="1.2" fill="none"/>
<ellipse cx="685" cy="393" rx="2.2" ry="3.8" stroke="#3c5294" stroke-width="1.2" fill="none"/>
<ellipse cx="785" cy="423" rx="2.2" ry="3.8" stroke="#3c5294" stroke-width="1.2" fill="none"/>
<ellipse cx="686" cy="939" rx="2.3" ry="4.2" stroke="#3c5294" stroke-width="1.2" fill="none"/>
<ellipse cx="703" cy="925" rx="2.3" ry="4.2" stroke="#3c5294" stroke-width="1.2" fill="none"/>
<ellipse cx="719" cy="911" rx="2.3" ry="4.2" stroke="#3c5294" stroke-width="1.2" fill="none"/>
<ellipse cx="734" cy="898" rx="2.3" ry="4.2" stroke="#3c5294" stroke-width="1.2" fill="none"/>
<ellipse cx="748" cy="886" rx="2.3" ry="4.2" stroke="#3c5294" stroke-width="1.2" fill="none"/>
<ellipse cx="761" cy="875" rx="2.3" ry="4.2" stroke="#3c5294" stroke-width="1.2" fill="none"/>
<ellipse cx="773" cy="866" rx="2.3" ry="4.2" stroke="#3c5294" stroke-width="1.2" fill="none"/>
<ellipse cx="785" cy="856" rx="2.3" ry="4.2" stroke="#3c5294" stroke-width="1.2" fill="none"/>
<rect x="659" y="439" width="16" height="119" stroke="#3c5294" stroke-width="2.34" fill="none" opacity="1"/>
<line x1="659" y1="463" x2="675" y2="463" stroke="#3c5294" stroke-width="1.56" opacity="1"/>
<line x1="659" y1="510" x2="675" y2="510" stroke="#3c5294" stroke-width="1.56" opacity="1"/>
<line x1="659" y1="545" x2="675" y2="545" stroke="#3c5294" stroke-width="1.56" opacity="1"/>
<path d="M675,444 L699,450 L699,466 L688,464 L686,474 L780,492 L780,524 L688,519 L688,528 L699,528 L699,553 L675,557" stroke="#3c5294" stroke-width="2.08" fill="none" opacity="1" stroke-linejoin="round" stroke-linecap="round" />
<path d="M686,480 L776,498 M690,513 L776,518" stroke="#3c5294" stroke-width="1.43" fill="none" opacity="1" stroke-linejoin="round" stroke-linecap="round" />
<ellipse cx="702" cy="499" rx="1.6" ry="3.6" stroke="#3c5294" stroke-width="1" fill="none"/>
<ellipse cx="706.5" cy="499" rx="1.6" ry="3.6" stroke="#3c5294" stroke-width="1" fill="none"/>
<ellipse cx="729" cy="502" rx="1.6" ry="3.6" stroke="#3c5294" stroke-width="1" fill="none"/>
<ellipse cx="733.5" cy="502" rx="1.6" ry="3.6" stroke="#3c5294" stroke-width="1" fill="none"/>
<ellipse cx="753" cy="505" rx="1.6" ry="3.6" stroke="#3c5294" stroke-width="1" fill="none"/>
<ellipse cx="757.5" cy="505" rx="1.6" ry="3.6" stroke="#3c5294" stroke-width="1" fill="none"/>
<ellipse cx="773" cy="508" rx="1.6" ry="3.6" stroke="#3c5294" stroke-width="1" fill="none"/>
<ellipse cx="777.5" cy="508" rx="1.6" ry="3.6" stroke="#3c5294" stroke-width="1" fill="none"/>
<ellipse cx="697" cy="457" rx="1.3" ry="3" stroke="#3c5294" stroke-width="1" fill="none"/>
<ellipse cx="697" cy="541" rx="1.3" ry="3" stroke="#3c5294" stroke-width="1" fill="none"/>
<ellipse cx="682" cy="546" rx="1.3" ry="3" stroke="#3c5294" stroke-width="1" fill="none"/>
<rect x="659" y="764" width="16" height="120" stroke="#3c5294" stroke-width="2.34" fill="none" opacity="1"/>
<line x1="659" y1="783" x2="675" y2="783" stroke="#3c5294" stroke-width="1.56" opacity="1"/>
<line x1="659" y1="806" x2="675" y2="806" stroke="#3c5294" stroke-width="1.56" opacity="1"/>
<line x1="659" y1="845" x2="675" y2="845" stroke="#3c5294" stroke-width="1.56" opacity="1"/>
<line x1="659" y1="864" x2="675" y2="864" stroke="#3c5294" stroke-width="1.56" opacity="1"/>
<path d="M675,768 L700,755 L700,777 L688,783 L687,795 L779,752 L779,778 L688,829 L689,842 L700,838 L700,866 L675,882" stroke="#3c5294" stroke-width="2.08" fill="none" opacity="1" stroke-linejoin="round" stroke-linecap="round" />
<path d="M690,801 L776,758 M690,822 L776,772" stroke="#3c5294" stroke-width="1.43" fill="none" opacity="1" stroke-linejoin="round" stroke-linecap="round" />
<ellipse cx="702" cy="808" rx="1.6" ry="3.8" stroke="#3c5294" stroke-width="1" fill="none"/>
<ellipse cx="706.5" cy="807" rx="1.6" ry="3.8" stroke="#3c5294" stroke-width="1" fill="none"/>
<ellipse cx="729" cy="793" rx="1.6" ry="3.8" stroke="#3c5294" stroke-width="1" fill="none"/>
<ellipse cx="733.5" cy="792" rx="1.6" ry="3.8" stroke="#3c5294" stroke-width="1" fill="none"/>
<ellipse cx="753" cy="780" rx="1.6" ry="3.8" stroke="#3c5294" stroke-width="1" fill="none"/>
<ellipse cx="757.5" cy="779" rx="1.6" ry="3.8" stroke="#3c5294" stroke-width="1" fill="none"/>
<ellipse cx="773" cy="770" rx="1.6" ry="3.8" stroke="#3c5294" stroke-width="1" fill="none"/>
<ellipse cx="777.5" cy="769" rx="1.6" ry="3.8" stroke="#3c5294" stroke-width="1" fill="none"/>
<ellipse cx="698" cy="766" rx="1.3" ry="3" stroke="#3c5294" stroke-width="1" fill="none"/>
<ellipse cx="698" cy="852" rx="1.3" ry="3" stroke="#3c5294" stroke-width="1" fill="none"/>
<ellipse cx="681" cy="864" rx="1.3" ry="3" stroke="#3c5294" stroke-width="1" fill="none"/>
<rect x="759" y="622" width="25" height="9" stroke="#3c5294" stroke-width="1.56" fill="none" opacity="1"/>
<ellipse cx="770.5" cy="656" rx="13" ry="31" stroke="#3c5294" stroke-width="1.6" fill="none"/>
<ellipse cx="770.5" cy="656" rx="6.5" ry="21" stroke="#3c5294" stroke-width="1.4" fill="none"/>
<path d="M761,640 C766,632 775,632 780,640 M761,673 C766,682 775,682 780,673" stroke="#3c5294" stroke-width="1.69" fill="none" opacity="1" stroke-linejoin="round" stroke-linecap="round" />
<path d="M827,603 L827,757 L839,762 L856,759 L856,604 Z" stroke="#3c5294" stroke-width="1.95" fill="none" opacity="1" stroke-linejoin="round" stroke-linecap="round" />
<line x1="839" y1="606" x2="839" y2="762" stroke="#3c5294" stroke-width="1.69" opacity="1"/>
<path d="M827,603 L839,606 L856,604" stroke="#3c5294" stroke-width="1.56" fill="none" opacity="1" stroke-linejoin="round" stroke-linecap="round" />
<rect x="1018" y="604" width="25" height="32" stroke="#3c5294" stroke-width="1.69" fill="none" opacity="1"/>
<line x1="1028" y1="604" x2="1028" y2="636" stroke="#3c5294" stroke-width="1.56" opacity="1"/>
<line x1="1031" y1="636" x2="1031" y2="664" stroke="#6b7ab6" stroke-width="1" opacity="1"/>
<path d="M856,604 C880,585 915,578 936,579 C965,580 1000,590 1018,604" stroke="#3c5294" stroke-width="2.34" fill="none" opacity="1" stroke-linejoin="round" stroke-linecap="round" />
<path d="M866,614 C890,596 920,590 940,591 C965,592 990,600 1006,612" stroke="#6b7ab6" stroke-width="1" fill="none" opacity="1" stroke-linejoin="round" stroke-linecap="round" />
<path d="M864,640 C866,630 880,630 900,636 C920,642 940,640 952,636 C962,648 964,666 956,678 C930,686 900,684 880,682 C866,676 862,660 864,640 Z" stroke="#3c5294" stroke-width="1.95" fill="#fff" opacity="1" stroke-linejoin="round" stroke-linecap="round" />
<path d="M954,640 C970,632 990,640 1010,636 C1030,630 1040,634 1050,648 C1058,660 1062,668 1052,676 C1020,684 990,684 966,678 C958,668 960,652 954,640 Z" stroke="#3c5294" stroke-width="1.95" fill="#fff" opacity="1" stroke-linejoin="round" stroke-linecap="round" />
<line x1="939" y1="650" x2="939" y2="668" stroke="#6b7ab6" stroke-width="1" opacity="1"/>
<path d="M862,668 L848,672 C844,690 846,706 849,716 L889,738" stroke="#3c5294" stroke-width="1.82" fill="none" opacity="1" stroke-linejoin="round" stroke-linecap="round" />
<path d="M878,682 L890,690 C886,710 886,724 889,738" stroke="#3c5294" stroke-width="1.82" fill="none" opacity="1" stroke-linejoin="round" stroke-linecap="round" />
<path d="M890,690 C930,686 980,684 1010,680 L1060,672 L1173,697" stroke="#3c5294" stroke-width="1.82" fill="none" opacity="1" stroke-linejoin="round" stroke-linecap="round" />
<path d="M889,738 L1099,840" stroke="#3c5294" stroke-width="2.34" fill="none" opacity="1" stroke-linejoin="round" stroke-linecap="round" />
<path d="M889,738 C900,742 920,752 940,762" stroke="#3c5294" stroke-width="1.56" fill="none" opacity="1" stroke-linejoin="round" stroke-linecap="round" />
<path d="M944,708 C936,718 936,730 938,744 M944,708 C980,712 1020,706 1050,704 M1095,694 C1110,690 1130,686 1140,690" stroke="#3c5294" stroke-width="1.43" fill="none" opacity="1" stroke-linejoin="round" stroke-linecap="round" />
<path d="M960,716 L975,720 M1000,732 L1003,733 M1048,728 C1060,724 1075,730 1080,734 M1070,756 L1082,759 M1016,742 C1030,736 1040,738 1046,740" stroke="#6b7ab6" stroke-width="1.2" fill="none" opacity="1" stroke-linejoin="round" stroke-linecap="round" />
<path d="M1070,798 C1072,806 1074,816 1082,822 C1090,826 1096,830 1099,834" stroke="#3c5294" stroke-width="1.43" fill="none" opacity="1" stroke-linejoin="round" stroke-linecap="round" />
<path d="M1072,798 C1068,790 1076,790 1074,800" stroke="#3c5294" stroke-width="1.3" fill="none" opacity="1" stroke-linejoin="round" stroke-linecap="round" />
<path d="M986,752 L992,778 M1040,780 C1050,784 1060,790 1068,796" stroke="#aab2cf" stroke-width="1" fill="none" opacity="1" stroke-linejoin="round" stroke-linecap="round" />
<path d="M839,713 L1099,845 M839,727 L1099,873" stroke="#3c5294" stroke-width="1.95" fill="none" opacity="1" stroke-linejoin="round" stroke-linecap="round" />
<path d="M856,743 L1000,808" stroke="#3c5294" stroke-width="1.56" fill="none" opacity="1" stroke-linejoin="round" stroke-linecap="round" />
<path d="M1099,727 L1099,930 L1119,948 L1152,946 L1152,732 L1119,728 Z" stroke="#3c5294" stroke-width="1.95" fill="none" opacity="1" stroke-linejoin="round" stroke-linecap="round" />
<line x1="1119" y1="728" x2="1119" y2="948" stroke="#3c5294" stroke-width="2.34" opacity="1"/>
<line x1="1099" y1="727" x2="1152" y2="732" stroke="#3c5294" stroke-width="1.56" opacity="1"/>
<path d="M793,739 L949,922" stroke="#3c5294" stroke-width="1.95" fill="none" opacity="1" stroke-linejoin="round" stroke-linecap="round" />
<path d="M712,926 L951,926 L960,938" stroke="#3c5294" stroke-width="1.56" fill="none" opacity="1" stroke-linejoin="round" stroke-linecap="round" />
<path d="M690,943 C740,950 800,944 850,942 C900,940 920,948 935,940 C945,934 952,932 960,938" stroke="#6b7ab6" stroke-width="1" fill="none" opacity="1" stroke-linejoin="round" stroke-linecap="round" />
<path d="M793,739 L860,744" stroke="#6b7ab6" stroke-width="1" fill="none" opacity="1" stroke-linejoin="round" stroke-linecap="round" />
<line x1="793" y1="700" x2="793" y2="760" stroke="#6b7ab6" stroke-width="1" opacity="1"/>
<path d="M1152,673 C1153,664 1158,659 1163,661 C1170,663 1176,668 1177,678 C1178,692 1178,706 1178.5,717" stroke="#8d8e96" stroke-width="1" fill="none" opacity="1" stroke-linejoin="round" stroke-linecap="round" />
<path d="M1152,673 C1147,690 1146,715 1150,740 C1153,760 1160,775 1160,784" stroke="#8d8e96" stroke-width="1" fill="none" opacity="1" stroke-linejoin="round" stroke-linecap="round" />
<ellipse cx="1160" cy="668" rx="5" ry="7" stroke="#8d8e96" stroke-width="1" fill="none" transform="rotate(-25 1160 668)"/>
<path d="M1180,718 C1188,700 1200,670 1208,650 C1212,632 1218,613 1227,612 C1234,613 1237,620 1235,628 C1232,650 1226,675 1223,697" stroke="#8d8e96" stroke-width="1" fill="none" opacity="1" stroke-linejoin="round" stroke-linecap="round" />
<ellipse cx="1227" cy="620" rx="4.5" ry="6.5" stroke="#8d8e96" stroke-width="1" fill="none" transform="rotate(-10 1227 620)"/>
<path d="M1208,650 C1214,646 1224,648 1230,652" stroke="#8d8e96" stroke-width="1" fill="none" opacity="0.8" stroke-linejoin="round" stroke-linecap="round" />
<path d="M1223,697 C1230,680 1238,660 1244,647 C1250,638 1258,633 1264,635 C1270,638 1270,644 1268,648 C1262,668 1252,690 1247,704" stroke="#8d8e96" stroke-width="1" fill="none" opacity="1" stroke-linejoin="round" stroke-linecap="round" />
<ellipse cx="1264" cy="642" rx="3.8" ry="5.8" stroke="#8d8e96" stroke-width="1" fill="none" transform="rotate(10 1264 642)"/>
<path d="M1262,664 C1264,658 1270,656 1273,659 C1277,664 1278,680 1277,697 C1277,710 1275,718 1273,724 C1270,740 1266,752 1262,764 C1252,780 1238,796 1227,808" stroke="#8d8e96" stroke-width="1" fill="none" opacity="1" stroke-linejoin="round" stroke-linecap="round" />
<ellipse cx="1271" cy="667" rx="3.2" ry="5.2" stroke="#8d8e96" stroke-width="1" fill="none" transform="rotate(15 1271 667)"/>
<path d="M1247,704 C1252,696 1258,688 1262,680 M1256,730 L1273,705 M1256,730 L1262,760" stroke="#8d8e96" stroke-width="1" fill="none" opacity="0.85" stroke-linejoin="round" stroke-linecap="round" />
<path d="M1200,700 C1212,692 1232,692 1246,700 M1180,718 C1182,722 1186,722 1190,716" stroke="#8d8e96" stroke-width="1" fill="none" opacity="0.8" stroke-linejoin="round" stroke-linecap="round" />
<path d="M1160,784 C1166,778 1174,776 1182,777 C1196,780 1208,788 1214,797 C1218,806 1219,815 1220,824 C1222,845 1222,860 1224,874 C1226,890 1228,905 1230,919" stroke="#8d8e96" stroke-width="1" fill="none" opacity="1" stroke-linejoin="round" stroke-linecap="round" />
<path d="M1160,784 C1158,800 1152,812 1147,824 C1140,840 1132,852 1123,864 C1112,878 1100,888 1097,897 C1093,906 1094,915 1095,925" stroke="#8d8e96" stroke-width="1" fill="none" opacity="1" stroke-linejoin="round" stroke-linecap="round" />
<path d="M1152,830 C1165,826 1180,826 1190,830 C1202,838 1210,848 1214,858 C1217,864 1219,869 1220,874" stroke="#8d8e96" stroke-width="1" fill="none" opacity="0.85" stroke-linejoin="round" stroke-linecap="round" />
<path d="M1134,868 C1138,858 1143,850 1148,842 M1128,872 C1132,862 1136,855 1140,850" stroke="#8d8e96" stroke-width="1" fill="none" opacity="0.6" stroke-linejoin="round" stroke-linecap="round" />
<path d="M1160,700 L1250,712" stroke="#aab2cf" stroke-width="1.2" fill="none" opacity="1" stroke-linejoin="round" stroke-linecap="round" /></svg></div>
<!-- left -->
<div class="a" style="left:0px;top:70px;width:41px;height:16px;background:linear-gradient(#5b5b5b,#4a4a4a);border-top:1px solid #3d3d3d"></div>
<div class="a" style="left:2px;top:71px;width:18px;height:14px;background:#5e5e5e"></div>
<svg class="a" style="left:6px;top:74px;" width="11" height="9" viewBox="0 0 11 9"><path d="M0,0.5 L3.5,4 L0,7.5Z" fill="#8a8a8a"/><path d="M5,1.5H11M5,4.5H11M5,7.5H11" stroke="#8a8a8a" stroke-width="1.3"/></svg>
<div class="a" style="left:20px;top:72px;width:21px;height:15px;background:#7b7c80;border:1px solid #5f6063;border-bottom:none"></div>
<div class="a" style="left:1px;top:88px;width:40px;height:212px;border:1px solid #4c4d51;border-radius:1px"></div>
<div class="a" style="left:1px;top:301px;width:40px;height:29px;border:1px solid #4c4d51;border-radius:1px"></div>
<div class="a" style="left:1px;top:331px;width:40px;height:209px;border:1px solid #4c4d51;border-radius:1px"></div>
<div class="a" style="left:1px;top:541px;width:40px;height:55px;border:1px solid #4c4d51;border-radius:1px"></div>
<div class="a" style="left:9px;top:197px;width:24px;height:23px;background:#7990a0;border:1px solid #5b7384;border-radius:2px"></div>
<div class="a" style="left:16px;top:611px;width:24px;height:23px;background:#e60528"></div>
<div class="a" style="left:2px;top:597px;width:24px;height:24px;background:#00267d;border:2.5px solid #9fc4e6;box-shadow:inset 0 0 0 1px #000,inset 0 0 0 2px #fff"></div>
<div class="a chkd" style="left:2px;top:636.5px;width:38px;height:10px;border:1px solid #3a3a3a"></div>
<div class="a" style="left:43px;top:70px;width:228px;height:17px;background:linear-gradient(#5b5b5b,#4a4a4a);border-top:1px solid #3d3d3d;border-bottom:1px solid #404040"></div>
<div class="a" style="left:43px;top:71px;width:18px;height:14px;background:#5e5e5e;border-right:1px solid #474747"></div>
<svg class="a" style="left:47px;top:74px;" width="11" height="9" viewBox="0 0 11 9"><path d="M0,0.5 L3.5,4 L0,7.5Z" fill="#8a8a8a"/><path d="M5,1.5H11M5,4.5H11M5,7.5H11" stroke="#8a8a8a" stroke-width="1.3"/></svg>
<div class="a" style="left:61px;top:72px;width:85px;height:15px;background:#7b7c80;border:1px solid #5f6063;border-bottom:none;border-radius:2px 2px 0 0"></div>
<div class="t" style="left:88px;top:77.3px;font-size:10.4px;color:#f2f2f2;">Color Wheel</div>
<div class="a" style="left:69.5px;top:97.5px;width:174px;height:174px;border-radius:50%;background:conic-gradient(from 0deg,#ffff00,#80ff00 8%,#00ff00 17%,#00ff80 25%,#00ffff 33%,#0080ff 42%,#0000ff 50%,#8000ff 58%,#ff00ff 67%,#ff0080 75%,#ff0000 83%,#ff8000 92%,#ffff00);box-shadow:0 0 0 1px rgba(40,40,40,.55)"></div>
<div class="a" style="left:85.5px;top:113.5px;width:142px;height:142px;border-radius:50%;background:#7b7c80;box-shadow:0 0 0 1px rgba(40,40,40,.45)"></div>
<div class="a" style="left:109.5px;top:136px;width:96.5px;height:96.5px;background:linear-gradient(to top,#000,rgba(0,0,0,0)),linear-gradient(to right,#fff,#004dff);border:1px solid #333"></div>
<div class="a" style="left:202px;top:181.5px;width:7px;height:7px;border:1.5px solid #fff;outline:1px solid #000;background:transparent"></div>
<div class="a" style="left:176px;top:249px;width:8px;height:17px;border:1.2px solid #111;transform:rotate(-22deg)"></div>
<div class="a" style="left:58px;top:249.5px;width:26px;height:25px;background:#e60528"></div>
<div class="a" style="left:44.5px;top:235.5px;width:23px;height:23px;background:#00267d;border:2.5px solid #9fc4e6;box-shadow:inset 0 0 0 1px #000,inset 0 0 0 2px #fff"></div>
<div class="a chkd" style="left:44px;top:277px;width:40px;height:10.5px;border-top:1px solid #4a4a4a"></div>
<div class="a" style="left:148px;top:277px;width:9px;height:9px;background:#0a0a14;border-radius:1px"></div>
<div class="t" style="left:149.2px;top:277.8px;font-size:8px;color:#fff;font-weight:bold">H</div>
<div class="a" style="left:180px;top:277px;width:9px;height:9px;background:#0a0a14;border-radius:1px"></div>
<div class="t" style="left:181.2px;top:277.8px;font-size:8px;color:#fff;font-weight:bold">S</div>
<div class="a" style="left:212px;top:277px;width:9px;height:9px;background:#0a0a14;border-radius:1px"></div>
<div class="t" style="left:213.2px;top:277.8px;font-size:8px;color:#fff;font-weight:bold">V</div>
<div class="t" style="left:159px;top:277px;font-size:11.5px;color:#f2f2f2;">222</div>
<div class="t" style="left:192px;top:277px;font-size:11.5px;color:#f2f2f2;">100</div>
<div class="t" style="left:228px;top:277px;font-size:11.5px;color:#f2f2f2;">49</div>
<div class="a" style="left:250px;top:270px;width:16px;height:16px;border-radius:50%;background:conic-gradient(#e8a020,#d04040,#8040c0,#4060d0,#40a0a0,#e8a020)"></div>
<div class="a" style="left:254px;top:274px;width:8px;height:8px;border-radius:50%;background:#77787c"></div>
<div class="a" style="left:43px;top:292px;width:228px;height:19px;background:linear-gradient(#5b5b5b,#4a4a4a);border-top:1px solid #3d3d3d;border-bottom:1px solid #404040"></div>
<div class="a" style="left:43px;top:293px;width:18px;height:16px;background:#5e5e5e;border-right:1px solid #474747"></div>
<svg class="a" style="left:47px;top:296px;" width="11" height="9" viewBox="0 0 11 9"><path d="M0,0.5 L3.5,4 L0,7.5Z" fill="#8a8a8a"/><path d="M5,1.5H11M5,4.5H11M5,7.5H11" stroke="#8a8a8a" stroke-width="1.3"/></svg>
<div class="a" style="left:61px;top:296px;width:123px;height:15px;background:#7b7c80;border:1px solid #5f6063;border-bottom:none;border-radius:2px 2px 0 0"></div>
<div class="t" style="left:88px;top:301.3px;font-size:10.4px;color:#f2f2f2;">Sub Tool [Auto select]</div>
<div class="a" style="left:43.5px;top:315.5px;width:227px;height:27px;border:1px solid #3f4044"></div>
<div class="a" style="left:44.5px;top:317px;width:83px;height:24px;background:linear-gradient(#7f98a8,#728b9b);border:1px solid #4f6676;border-radius:2px"></div>
<div class="t" style="left:70px;top:323px;font-size:11.6px;color:#f2f2f2;">Auto select</div>
<div class="a" style="left:43.5px;top:343.5px;width:227px;height:155px;border:1px solid #3f4044;background:#7b7c80"></div>
<div class="a" style="left:44.5px;top:344.5px;width:213px;height:35px;background:linear-gradient(#8098a7,#728b9b)"></div>
<div class="a" style="left:88px;top:361px;width:168px;height:17px;background:#7d95a5"></div>
<div class="a" style="left:44.5px;top:379.5px;width:213px;height:1px;background:#45464a"></div>
<div class="a" style="left:44.5px;top:415.5px;width:213px;height:1px;background:#45464a"></div>
<div class="a" style="left:44.5px;top:451.5px;width:213px;height:1px;background:#45464a"></div>
<div class="a" style="left:257.5px;top:344.5px;width:1px;height:153px;background:#55565a"></div>
<div class="a" style="left:258.5px;top:344.5px;width:11px;height:153px;background:#6c6d71"></div>
<div class="t" style="left:98px;top:364px;font-size:12px;color:#f2f2f2;">Refer edited layer only to select</div>
<div class="t" style="left:121px;top:400px;font-size:12px;color:#f2f2f2;">Refer other layers to select</div>
<div class="t" style="left:117px;top:436px;font-size:12px;color:#f2f2f2;">Selection for referred layers</div>
<div class="a" style="left:43px;top:522px;width:228px;height:18px;background:linear-gradient(#5b5b5b,#4a4a4a);border-top:1px solid #3d3d3d;border-bottom:1px solid #404040"></div>
<div class="a" style="left:43px;top:523px;width:18px;height:15px;background:#5e5e5e;border-right:1px solid #474747"></div>
<svg class="a" style="left:47px;top:526px;" width="11" height="9" viewBox="0 0 11 9"><path d="M0,0.5 L3.5,4 L0,7.5Z" fill="#8a8a8a"/><path d="M5,1.5H11M5,4.5H11M5,7.5H11" stroke="#8a8a8a" stroke-width="1.3"/></svg>
<div class="a" style="left:61px;top:525px;width:210px;height:15px;background:#7b7c80;border:1px solid #5f6063;border-bottom:none;border-radius:2px 2px 0 0"></div>
<div class="t" style="left:88px;top:529.3px;font-size:10.4px;width:194px;overflow:hidden;-webkit-mask-image:linear-gradient(90deg,#000 88%,transparent)">Tool property [Refer edited layer only to select]</div>
<div class="a" style="left:43.5px;top:543.5px;width:227px;height:39px;border:1px solid #3f4044"></div>
<div class="t" style="left:47px;top:546px;font-size:12px;color:#f2f2f2;">Refer edited layer only to select</div>
<div class="a" style="left:43.5px;top:583.5px;width:227px;height:130px;border:1px solid #3f4044;background:linear-gradient(#7b7c80 85%,#6a6b6f)"></div>
<div class="a" style="left:258.5px;top:584.5px;width:11px;height:128px;background:#6c6d71"></div>
<div class="a" style="left:259.5px;top:596px;width:9px;height:70px;background:linear-gradient(90deg,#8a8b8f,#77787c);border:1px solid #55565a;border-radius:2px"></div>
<div class="a" style="left:54px;top:612px;width:200px;height:1px;background:#6a6b6f"></div>
<div class="a" style="left:54px;top:635px;width:200px;height:1px;background:#6a6b6f"></div>
<div class="a" style="left:54px;top:658px;width:200px;height:1px;background:#6a6b6f"></div>
<div class="a" style="left:54px;top:685px;width:200px;height:1px;background:#6a6b6f"></div>
<div class="t" style="left:62px;top:592px;font-size:12px;color:#f2f2f2;">How to create</div>
<div class="a" style="left:139px;top:587.5px;width:115px;height:22px;background:linear-gradient(#8a8b8f,#707175);border:1px solid #5a5b5f;border-radius:2px"></div>
<div class="a" style="left:139.5px;top:588px;width:24px;height:21px;background:#8098a7;border:1px solid #4f6676;border-radius:2px"></div>
<div class="t" style="left:80px;top:617px;font-size:12px;color:#f2f2f2;">Follow adjacent pixel</div>
<div class="t" style="left:80px;top:640px;font-size:12px;color:#f2f2f2;">Close gap</div>
<div class="a" style="left:61px;top:617px;width:13px;height:13px;background:linear-gradient(#7c7d81,#8c8d91);border:1px solid #5a5b5f;border-radius:2px"></div>
<div class="a" style="left:61px;top:640px;width:13px;height:13px;background:linear-gradient(#7c7d81,#8c8d91);border:1px solid #5a5b5f;border-radius:2px"></div>
<div class="a" style="left:61px;top:687px;width:13px;height:13px;background:linear-gradient(#7c7d81,#8c8d91);border:1px solid #5a5b5f;border-radius:2px"></div>
<svg class="a" style="left:62px;top:616px;" width="13" height="14" viewBox="0 0 13 14"><path d="M2.5,6 L5.5,11 L11,1.5" fill="none" stroke="#fff" stroke-width="1.8"/></svg>
<svg class="a" style="left:62px;top:639px;" width="13" height="14" viewBox="0 0 13 14"><path d="M2.5,6 L5.5,11 L11,1.5" fill="none" stroke="#fff" stroke-width="1.8"/></svg>
<div class="a" style="left:135.5px;top:638px;width:20px;height:17px;background:#9b9b9b;border:1px solid #6a6a6a"></div>
<div class="a" style="left:156.2px;top:638px;width:20px;height:17px;background:#a3a3a3;border:1px solid #6a6a6a"></div>
<div class="a" style="left:176.9px;top:638px;width:20px;height:17px;background:#ababab;border:1px solid #6a6a6a"></div>
<div class="a" style="left:197.6px;top:638px;width:20px;height:17px;background:#b3b3b3;border:1px solid #6a6a6a"></div>
<div class="a" style="left:218.3px;top:638px;width:20px;height:17px;background:#bbbbbb;border:1px solid #6a6a6a"></div>
<div class="a" style="left:241.5px;top:638px;width:12.5px;height:17px;background:linear-gradient(#8a8b8f,#707175);border:1px solid #5a5b5f;border-radius:2px"></div>
<svg class="a" style="left:245px;top:642px;" width="6" height="9" viewBox="0 0 6 9"><path d="M0,0 L6,4.5 L0,9Z" fill="#2a2a2a"/></svg>
<div class="t" style="left:62px;top:660px;font-size:12px;color:#f2f2f2;">Color margin</div>
<div class="t" style="left:210px;top:666px;font-size:12px;color:#f2f2f2;">4.0</div>
<svg class="a" style="left:229px;top:664px;" width="9" height="16" viewBox="0 0 9 16"><path d="M0,6 L4.5,0 L9,6Z M0,10 L4.5,16 L9,10Z" fill="#2e2e2e"/></svg>
<div class="a" style="left:81.5px;top:679.5px;width:102px;height:1.5px;background:#4a4a4a"></div>
<div class="a" style="left:81.5px;top:673.5px;width:3px;height:7px;border:1px solid #333;background:#8a8b8f"></div>
<div class="a" style="left:183px;top:678px;width:1px;height:3px;background:#4a4a4a"></div>
<div class="t" style="left:80px;top:687px;font-size:12px;color:#f2f2f2;">Area scaling</div>
<div class="a" style="left:49px;top:694px;width:9px;height:9px;border:1px solid #ddd;border-radius:1px"></div>
<div class="a" style="left:51px;top:698px;width:5px;height:1px;background:#eee"></div>
<div class="a" style="left:53px;top:696px;width:1px;height:5px;background:#eee"></div>
<div class="a" style="left:81px;top:702.5px;width:102px;height:8px;border:1px solid #4a4a4a;background:#808185"></div>
<div class="a" style="left:43px;top:737px;width:228px;height:17px;background:linear-gradient(#5b5b5b,#4a4a4a);border-top:1px solid #3d3d3d;border-bottom:1px solid #404040"></div>
<div class="a" style="left:43px;top:738px;width:18px;height:14px;background:#5e5e5e;border-right:1px solid #474747"></div>
<svg class="a" style="left:47px;top:741px;" width="11" height="9" viewBox="0 0 11 9"><path d="M0,0.5 L3.5,4 L0,7.5Z" fill="#8a8a8a"/><path d="M5,1.5H11M5,4.5H11M5,7.5H11" stroke="#8a8a8a" stroke-width="1.3"/></svg>
<div class="a" style="left:61px;top:739px;width:74px;height:15px;background:#7b7c80;border:1px solid #5f6063;border-bottom:none;border-radius:2px 2px 0 0"></div>
<div class="t" style="left:88px;top:744.3px;font-size:10.4px;color:#f2f2f2;">Brush Size</div>
<div class="a" style="left:43.5px;top:758.5px;width:227px;height:116px;border:1px solid #4d4e52;background:#7a7b7f;overflow:hidden"></div>
<div class="a" style="left:74.3px;top:759px;width:1px;height:115px;background:#606165"></div>
<div class="a" style="left:104.6px;top:759px;width:1px;height:115px;background:#606165"></div>
<div class="a" style="left:135.6px;top:759px;width:1px;height:115px;background:#606165"></div>
<div class="a" style="left:166px;top:759px;width:1px;height:115px;background:#606165"></div>
<div class="a" style="left:196px;top:759px;width:1px;height:115px;background:#606165"></div>
<div class="a" style="left:226.6px;top:759px;width:1px;height:115px;background:#606165"></div>
<div class="a" style="left:257px;top:759px;width:1px;height:115px;background:#606165"></div>
<div class="a" style="left:44px;top:798px;width:213px;height:1px;background:#606165"></div>
<div class="a" style="left:44px;top:838px;width:213px;height:1px;background:#606165"></div>
<div class="a" style="left:59.0px;top:773.9px;width:1.3px;height:1.3px;background:#5d5e62;border-radius:50%"></div>
<div class="t" style="left:44.65px;top:783px;width:30px;text-align:center;font-size:12px;color:#a4a5a9">0.7</div>
<div class="a" style="left:89.2px;top:773.9px;width:1.5px;height:1.5px;background:#5d5e62;border-radius:50%"></div>
<div class="t" style="left:74.94999999999999px;top:783px;width:30px;text-align:center;font-size:12px;color:#a4a5a9">1</div>
<div class="a" style="left:119.8px;top:773.8px;width:1.7px;height:1.7px;background:#5d5e62;border-radius:50%"></div>
<div class="t" style="left:105.6px;top:783px;width:30px;text-align:center;font-size:12px;color:#a4a5a9">1.5</div>
<div class="a" style="left:150.4px;top:773.7px;width:1.9px;height:1.9px;background:#5d5e62;border-radius:50%"></div>
<div class="t" style="left:136.3px;top:783px;width:30px;text-align:center;font-size:12px;color:#a4a5a9">2</div>
<div class="a" style="left:180.5px;top:773.6px;width:2.0px;height:2.0px;background:#5d5e62;border-radius:50%"></div>
<div class="t" style="left:166.5px;top:783px;width:30px;text-align:center;font-size:12px;color:#a4a5a9">2.5</div>
<div class="a" style="left:210.6px;top:773.4px;width:2.4px;height:2.4px;background:#5d5e62;border-radius:50%"></div>
<div class="t" style="left:196.8px;top:783px;width:30px;text-align:center;font-size:12px;color:#a4a5a9">3</div>
<div class="a" style="left:240.6px;top:772.9px;width:3.3px;height:3.3px;background:#5d5e62;border-radius:50%"></div>
<div class="t" style="left:227.3px;top:783px;width:30px;text-align:center;font-size:12px;color:#a4a5a9">4</div>
<div class="a" style="left:57.3px;top:812.0px;width:4.7px;height:4.7px;background:#5d5e62;border-radius:50%"></div>
<div class="t" style="left:44.65px;top:823px;width:30px;text-align:center;font-size:12px;color:#a4a5a9">5</div>
<div class="a" style="left:87.2px;top:811.5px;width:5.6px;height:5.6px;background:#5d5e62;border-radius:50%"></div>
<div class="t" style="left:74.94999999999999px;top:823px;width:30px;text-align:center;font-size:12px;color:#a4a5a9">6</div>
<div class="a" style="left:117.3px;top:811.0px;width:6.5px;height:6.5px;background:#5d5e62;border-radius:50%"></div>
<div class="t" style="left:105.6px;top:823px;width:30px;text-align:center;font-size:12px;color:#a4a5a9">7</div>
<div class="a" style="left:147.6px;top:810.6px;width:7.4px;height:7.4px;background:#5d5e62;border-radius:50%"></div>
<div class="t" style="left:136.3px;top:823px;width:30px;text-align:center;font-size:12px;color:#a4a5a9">8</div>
<div class="a" style="left:176.8px;top:809.6px;width:9.3px;height:9.3px;background:#5d5e62;border-radius:50%"></div>
<div class="t" style="left:166.5px;top:823px;width:30px;text-align:center;font-size:12px;color:#a4a5a9">10</div>
<div class="a" style="left:206.2px;top:808.7px;width:11.2px;height:11.2px;background:#5d5e62;border-radius:50%"></div>
<div class="t" style="left:196.8px;top:823px;width:30px;text-align:center;font-size:12px;color:#a4a5a9">12</div>
<div class="a" style="left:235.3px;top:807.3px;width:14.0px;height:14.0px;background:#5d5e62;border-radius:50%"></div>
<div class="t" style="left:227.3px;top:823px;width:30px;text-align:center;font-size:12px;color:#a4a5a9">15</div>
<div class="a" style="left:51.7px;top:846.5px;width:15.8px;height:15.8px;background:#5d5e62;border-radius:50%"></div>
<div class="t" style="left:44.65px;top:863px;width:30px;text-align:center;font-size:12px;color:#a4a5a9">17</div>
<div class="a" style="left:80.6px;top:845.1px;width:18.6px;height:18.6px;background:#5d5e62;border-radius:50%"></div>
<div class="t" style="left:74.94999999999999px;top:863px;width:30px;text-align:center;font-size:12px;color:#a4a5a9">20</div>
<div class="a" style="left:109.0px;top:842.8px;width:23.2px;height:23.2px;background:#5d5e62;border-radius:50%"></div>
<div class="t" style="left:105.6px;top:863px;width:30px;text-align:center;font-size:12px;color:#a4a5a9">25</div>
<div class="a" style="left:139.7px;top:842.8px;width:23.2px;height:23.2px;background:#5d5e62;border-radius:50%"></div>
<div class="t" style="left:136.3px;top:863px;width:30px;text-align:center;font-size:12px;color:#a4a5a9">30</div>
<div class="a" style="left:169.9px;top:842.8px;width:23.2px;height:23.2px;background:#5d5e62;border-radius:50%"></div>
<div class="t" style="left:166.5px;top:863px;width:30px;text-align:center;font-size:12px;color:#a4a5a9">40</div>
<div class="a" style="left:200.2px;top:842.8px;width:23.2px;height:23.2px;background:#5d5e62;border-radius:50%"></div>
<div class="t" style="left:196.8px;top:863px;width:30px;text-align:center;font-size:12px;color:#a4a5a9">50</div>
<div class="a" style="left:230.7px;top:842.8px;width:23.2px;height:23.2px;background:#5d5e62;border-radius:50%"></div>
<div class="t" style="left:227.3px;top:863px;width:30px;text-align:center;font-size:12px;color:#a4a5a9">60</div>
<div class="a" style="left:43.5px;top:874px;width:228px;height:3px;background:#7b7c80"></div>
<div class="a" style="left:258.5px;top:759.5px;width:11px;height:114px;background:#6c6d71"></div>
<div class="a" style="left:259.5px;top:770px;width:9px;height:42px;background:linear-gradient(90deg,#8a8b8f,#77787c);border:1px solid #55565a;border-radius:2px"></div>
<div class="a" style="left:43px;top:878px;width:228px;height:17px;background:linear-gradient(#5b5b5b,#4a4a4a);border-top:1px solid #3d3d3d;border-bottom:1px solid #404040"></div>
<div class="a" style="left:43px;top:879px;width:18px;height:14px;background:#5e5e5e;border-right:1px solid #474747"></div>
<svg class="a" style="left:47px;top:882px;" width="11" height="9" viewBox="0 0 11 9"><path d="M0,0.5 L3.5,4 L0,7.5Z" fill="#8a8a8a"/><path d="M5,1.5H11M5,4.5H11M5,7.5H11" stroke="#8a8a8a" stroke-width="1.3"/></svg>
<div class="a" style="left:62px;top:880px;width:28px;height:13px;background:#6a6b6f;border:1px solid #454545;border-bottom:none;border-radius:2px 2px 0 0"></div>
<div class="a" style="left:91px;top:880px;width:67px;height:15px;background:#7b7c80;border:1px solid #5f6063;border-bottom:none;border-radius:2px 2px 0 0"></div>
<div class="t" style="left:116px;top:885.3px;font-size:10.4px;color:#f2f2f2;">Color Set</div>
<div class="a" style="left:159px;top:880px;width:27px;height:13px;background:#6a6b6f;border:1px solid #454545;border-bottom:none;border-radius:2px 2px 0 0"></div>
<div class="a" style="left:45.5px;top:900px;width:182px;height:18px;background:linear-gradient(#8c8d91,#727377);border:1px solid #55565a;border-radius:2px"></div>
<div class="t" style="left:91px;top:903px;font-size:12px;color:#f2f2f2;">Default color set</div>
<svg class="a" style="left:217px;top:906px;" width="8" height="6" viewBox="0 0 8 6"><path d="M0,0 L8,0 L4,5Z" fill="#2e2e2e"/></svg>
<div class="a" style="left:45.5px;top:920px;width:211px;height:97px;overflow:hidden;background:#55565a;border:1px solid #4d4e52">
<div class="a" style="left:0.0px;top:0.0px;width:12.3px;height:12.2px;background:#000000"></div>
<div class="a" style="left:13.1px;top:0.0px;width:12.3px;height:12.2px;background:#ffffff"></div>
<div class="a" style="left:26.2px;top:0.0px;width:12.3px;height:12.2px;background:#fff;background-image:linear-gradient(45deg,#333 25%,transparent 25%,transparent 75%,#333 75%),linear-gradient(45deg,#333 25%,#fff 25%,#fff 75%,#333 75%);background-size:6px 6px;background-position:0 0,3px 3px"></div>
<div class="a" style="left:39.3px;top:0.0px;width:12.3px;height:12.2px;background:#0d0d0d"></div>
<div class="a" style="left:52.4px;top:0.0px;width:12.3px;height:12.2px;background:#1a1a1a"></div>
<div class="a" style="left:65.5px;top:0.0px;width:12.3px;height:12.2px;background:#262626"></div>
<div class="a" style="left:78.6px;top:0.0px;width:12.3px;height:12.2px;background:#333333"></div>
<div class="a" style="left:91.7px;top:0.0px;width:12.3px;height:12.2px;background:#4d4d4d"></div>
<div class="a" style="left:104.8px;top:0.0px;width:12.3px;height:12.2px;background:#666666"></div>
<div class="a" style="left:117.9px;top:0.0px;width:12.3px;height:12.2px;background:#808080"></div>
<div class="a" style="left:131.0px;top:0.0px;width:12.3px;height:12.2px;background:#999999"></div>
<div class="a" style="left:144.1px;top:0.0px;width:12.3px;height:12.2px;background:#b3b3b3"></div>
<div class="a" style="left:157.2px;top:0.0px;width:12.3px;height:12.2px;background:#cccccc"></div>
<div class="a" style="left:170.3px;top:0.0px;width:12.3px;height:12.2px;background:#d9d9d9"></div>
<div class="a" style="left:183.4px;top:0.0px;width:12.3px;height:12.2px;background:#e6e6e6"></div>
<div class="a" style="left:196.5px;top:0.0px;width:12.3px;height:12.2px;background:#f2f2f2"></div>
<div class="a" style="left:0.0px;top:13.05px;width:12.3px;height:12.2px;background:#ff0000"></div>
<div class="a" style="left:13.1px;top:13.05px;width:12.3px;height:12.2px;background:#ffff00"></div>
<div class="a" style="left:26.2px;top:13.05px;width:12.3px;height:12.2px;background:#00ff00"></div>
<div class="a" style="left:39.3px;top:13.05px;width:12.3px;height:12.2px;background:#00ffff"></div>
<div class="a" style="left:52.4px;top:13.05px;width:12.3px;height:12.2px;background:#0000ff"></div>
<div class="a" style="left:65.5px;top:13.05px;width:12.3px;height:12.2px;background:#ff00ff"></div>
<div class="a" style="left:78.6px;top:13.05px;width:12.3px;height:12.2px;background:#2b2d33"></div>
<div class="a" style="left:91.7px;top:13.05px;width:12.3px;height:12.2px;background:#454854"></div>
<div class="a" style="left:104.8px;top:13.05px;width:12.3px;height:12.2px;background:#7a8eb5"></div>
<div class="a" style="left:117.9px;top:13.05px;width:12.3px;height:12.2px;background:#a9b4d6"></div>
<div class="a" style="left:131.0px;top:13.05px;width:12.3px;height:12.2px;background:#ced6ef"></div>
<div class="a" style="left:144.1px;top:13.05px;width:12.3px;height:12.2px;background:#33302b"></div>
<div class="a" style="left:157.2px;top:13.05px;width:12.3px;height:12.2px;background:#54483b"></div>
<div class="a" style="left:170.3px;top:13.05px;width:12.3px;height:12.2px;background:#6b5a4a"></div>
<div class="a" style="left:183.4px;top:13.05px;width:12.3px;height:12.2px;background:#b8907a"></div>
<div class="a" style="left:196.5px;top:13.05px;width:12.3px;height:12.2px;background:#c9a592"></div>
<div class="a" style="left:0.0px;top:26.1px;width:12.3px;height:12.2px;background:#ff9999"></div>
<div class="a" style="left:13.1px;top:26.1px;width:12.3px;height:12.2px;background:#ffc399"></div>
<div class="a" style="left:26.2px;top:26.1px;width:12.3px;height:12.2px;background:#ffe099"></div>
<div class="a" style="left:39.3px;top:26.1px;width:12.3px;height:12.2px;background:#ffff99"></div>
<div class="a" style="left:52.4px;top:26.1px;width:12.3px;height:12.2px;background:#d4ff99"></div>
<div class="a" style="left:65.5px;top:26.1px;width:12.3px;height:12.2px;background:#99ffb2"></div>
<div class="a" style="left:78.6px;top:26.1px;width:12.3px;height:12.2px;background:#99ffdc"></div>
<div class="a" style="left:91.7px;top:26.1px;width:12.3px;height:12.2px;background:#99dcff"></div>
<div class="a" style="left:104.8px;top:26.1px;width:12.3px;height:12.2px;background:#99beff"></div>
<div class="a" style="left:117.9px;top:26.1px;width:12.3px;height:12.2px;background:#9999ff"></div>
<div class="a" style="left:131.0px;top:26.1px;width:12.3px;height:12.2px;background:#c399ff"></div>
<div class="a" style="left:144.1px;top:26.1px;width:12.3px;height:12.2px;background:#e599ff"></div>
<div class="a" style="left:157.2px;top:26.1px;width:12.3px;height:12.2px;background:#ff99ed"></div>
<div class="a" style="left:170.3px;top:26.1px;width:12.3px;height:12.2px;background:#ff99c3"></div>
<div class="a" style="left:183.4px;top:26.1px;width:12.3px;height:12.2px;background:#fbe5dc"></div>
<div class="a" style="left:196.5px;top:26.1px;width:12.3px;height:12.2px;background:#fde3d3"></div>
<div class="a" style="left:0.0px;top:39.150000000000006px;width:12.3px;height:12.2px;background:#ea4646"></div>
<div class="a" style="left:13.1px;top:39.150000000000006px;width:12.3px;height:12.2px;background:#ea8a46"></div>
<div class="a" style="left:26.2px;top:39.150000000000006px;width:12.3px;height:12.2px;background:#eab946"></div>
<div class="a" style="left:39.3px;top:39.150000000000006px;width:12.3px;height:12.2px;background:#eaea46"></div>
<div class="a" style="left:52.4px;top:39.150000000000006px;width:12.3px;height:12.2px;background:#a6ea46"></div>
<div class="a" style="left:65.5px;top:39.150000000000006px;width:12.3px;height:12.2px;background:#46ea6f"></div>
<div class="a" style="left:78.6px;top:39.150000000000006px;width:12.3px;height:12.2px;background:#46eab3"></div>
<div class="a" style="left:91.7px;top:39.150000000000006px;width:12.3px;height:12.2px;background:#46b3ea"></div>
<div class="a" style="left:104.8px;top:39.150000000000006px;width:12.3px;height:12.2px;background:#4682ea"></div>
<div class="a" style="left:117.9px;top:39.150000000000006px;width:12.3px;height:12.2px;background:#4646ea"></div>
<div class="a" style="left:131.0px;top:39.150000000000006px;width:12.3px;height:12.2px;background:#8a46ea"></div>
<div class="a" style="left:144.1px;top:39.150000000000006px;width:12.3px;height:12.2px;background:#c146ea"></div>
<div class="a" style="left:157.2px;top:39.150000000000006px;width:12.3px;height:12.2px;background:#ea46cf"></div>
<div class="a" style="left:170.3px;top:39.150000000000006px;width:12.3px;height:12.2px;background:#ea468a"></div>
<div class="a" style="left:183.4px;top:39.150000000000006px;width:12.3px;height:12.2px;background:#f8dcd0"></div>
<div class="a" style="left:196.5px;top:39.150000000000006px;width:12.3px;height:12.2px;background:#fcd9c4"></div>
<div class="a" style="left:0.0px;top:52.2px;width:12.3px;height:12.2px;background:#ff1414"></div>
<div class="a" style="left:13.1px;top:52.2px;width:12.3px;height:12.2px;background:#ff7614"></div>
<div class="a" style="left:26.2px;top:52.2px;width:12.3px;height:12.2px;background:#ffb814"></div>
<div class="a" style="left:39.3px;top:52.2px;width:12.3px;height:12.2px;background:#ffff14"></div>
<div class="a" style="left:52.4px;top:52.2px;width:12.3px;height:12.2px;background:#9dff14"></div>
<div class="a" style="left:65.5px;top:52.2px;width:12.3px;height:12.2px;background:#14ff4f"></div>
<div class="a" style="left:78.6px;top:52.2px;width:12.3px;height:12.2px;background:#14ffb0"></div>
<div class="a" style="left:91.7px;top:52.2px;width:12.3px;height:12.2px;background:#14b0ff"></div>
<div class="a" style="left:104.8px;top:52.2px;width:12.3px;height:12.2px;background:#146aff"></div>
<div class="a" style="left:117.9px;top:52.2px;width:12.3px;height:12.2px;background:#1414ff"></div>
<div class="a" style="left:131.0px;top:52.2px;width:12.3px;height:12.2px;background:#7614ff"></div>
<div class="a" style="left:144.1px;top:52.2px;width:12.3px;height:12.2px;background:#c414ff"></div>
<div class="a" style="left:157.2px;top:52.2px;width:12.3px;height:12.2px;background:#ff14d7"></div>
<div class="a" style="left:170.3px;top:52.2px;width:12.3px;height:12.2px;background:#ff1476"></div>
<div class="a" style="left:183.4px;top:52.2px;width:12.3px;height:12.2px;background:#edcdc0"></div>
<div class="a" style="left:196.5px;top:52.2px;width:12.3px;height:12.2px;background:#f2c9b0"></div>
<div class="a" style="left:0.0px;top:65.25px;width:12.3px;height:12.2px;background:#a52929"></div>
<div class="a" style="left:13.1px;top:65.25px;width:12.3px;height:12.2px;background:#a55d29"></div>
<div class="a" style="left:26.2px;top:65.25px;width:12.3px;height:12.2px;background:#a58029"></div>
<div class="a" style="left:39.3px;top:65.25px;width:12.3px;height:12.2px;background:#a5a529"></div>
<div class="a" style="left:52.4px;top:65.25px;width:12.3px;height:12.2px;background:#71a529"></div>
<div class="a" style="left:65.5px;top:65.25px;width:12.3px;height:12.2px;background:#29a548"></div>
<div class="a" style="left:78.6px;top:65.25px;width:12.3px;height:12.2px;background:#29a57c"></div>
<div class="a" style="left:91.7px;top:65.25px;width:12.3px;height:12.2px;background:#297ca5"></div>
<div class="a" style="left:104.8px;top:65.25px;width:12.3px;height:12.2px;background:#2957a5"></div>
<div class="a" style="left:117.9px;top:65.25px;width:12.3px;height:12.2px;background:#2929a5"></div>
<div class="a" style="left:131.0px;top:65.25px;width:12.3px;height:12.2px;background:#5d29a5"></div>
<div class="a" style="left:144.1px;top:65.25px;width:12.3px;height:12.2px;background:#8629a5"></div>
<div class="a" style="left:157.2px;top:65.25px;width:12.3px;height:12.2px;background:#a52991"></div>
<div class="a" style="left:170.3px;top:65.25px;width:12.3px;height:12.2px;background:#a5295d"></div>
<div class="a" style="left:183.4px;top:65.25px;width:12.3px;height:12.2px;background:#ffd2b8"></div>
<div class="a" style="left:196.5px;top:65.25px;width:12.3px;height:12.2px;background:#e3ac8c"></div>
<div class="a" style="left:0.0px;top:78.30000000000001px;width:12.3px;height:12.2px;background:#600e0e"></div>
<div class="a" style="left:13.1px;top:78.30000000000001px;width:12.3px;height:12.2px;background:#60300e"></div>
<div class="a" style="left:26.2px;top:78.30000000000001px;width:12.3px;height:12.2px;background:#60480e"></div>
<div class="a" style="left:39.3px;top:78.30000000000001px;width:12.3px;height:12.2px;background:#60600e"></div>
<div class="a" style="left:52.4px;top:78.30000000000001px;width:12.3px;height:12.2px;background:#3e600e"></div>
<div class="a" style="left:65.5px;top:78.30000000000001px;width:12.3px;height:12.2px;background:#0e6023"></div>
<div class="a" style="left:78.6px;top:78.30000000000001px;width:12.3px;height:12.2px;background:#0e6045"></div>
<div class="a" style="left:91.7px;top:78.30000000000001px;width:12.3px;height:12.2px;background:#0e4560"></div>
<div class="a" style="left:104.8px;top:78.30000000000001px;width:12.3px;height:12.2px;background:#0e2c60"></div>
<div class="a" style="left:117.9px;top:78.30000000000001px;width:12.3px;height:12.2px;background:#0e0e60"></div>
<div class="a" style="left:131.0px;top:78.30000000000001px;width:12.3px;height:12.2px;background:#300e60"></div>
<div class="a" style="left:144.1px;top:78.30000000000001px;width:12.3px;height:12.2px;background:#4c0e60"></div>
<div class="a" style="left:157.2px;top:78.30000000000001px;width:12.3px;height:12.2px;background:#600e53"></div>
<div class="a" style="left:170.3px;top:78.30000000000001px;width:12.3px;height:12.2px;background:#600e30"></div>
<div class="a" style="left:183.4px;top:78.30000000000001px;width:12.3px;height:12.2px;background:#ffc8a6"></div>
<div class="a" style="left:196.5px;top:78.30000000000001px;width:12.3px;height:12.2px;background:#cf9676"></div>
<div class="a" style="left:0.0px;top:91.35000000000001px;width:12.3px;height:12.2px;background:#3f0909"></div>
<div class="a" style="left:13.1px;top:91.35000000000001px;width:12.3px;height:12.2px;background:#3f2009"></div>
<div class="a" style="left:26.2px;top:91.35000000000001px;width:12.3px;height:12.2px;background:#3f2f09"></div>
<div class="a" style="left:39.3px;top:91.35000000000001px;width:12.3px;height:12.2px;background:#3f3f09"></div>
<div class="a" style="left:52.4px;top:91.35000000000001px;width:12.3px;height:12.2px;background:#293f09"></div>
<div class="a" style="left:65.5px;top:91.35000000000001px;width:12.3px;height:12.2px;background:#093f17"></div>
<div class="a" style="left:78.6px;top:91.35000000000001px;width:12.3px;height:12.2px;background:#093f2d"></div>
<div class="a" style="left:91.7px;top:91.35000000000001px;width:12.3px;height:12.2px;background:#092d3f"></div>
<div class="a" style="left:104.8px;top:91.35000000000001px;width:12.3px;height:12.2px;background:#091d3f"></div>
<div class="a" style="left:117.9px;top:91.35000000000001px;width:12.3px;height:12.2px;background:#09093f"></div>
<div class="a" style="left:131.0px;top:91.35000000000001px;width:12.3px;height:12.2px;background:#20093f"></div>
<div class="a" style="left:144.1px;top:91.35000000000001px;width:12.3px;height:12.2px;background:#32093f"></div>
<div class="a" style="left:157.2px;top:91.35000000000001px;width:12.3px;height:12.2px;background:#3f0936"></div>
<div class="a" style="left:170.3px;top:91.35000000000001px;width:12.3px;height:12.2px;background:#3f0920"></div>
<div class="a" style="left:183.4px;top:91.35000000000001px;width:12.3px;height:12.2px;background:#f5b890"></div>
<div class="a" style="left:196.5px;top:91.35000000000001px;width:12.3px;height:12.2px;background:#b88060"></div>
</div>
<div class="a" style="left:257.5px;top:921px;width:10px;height:96px;background:#6c6d71"></div>
<div class="a" style="left:258px;top:931px;width:9px;height:52px;background:linear-gradient(90deg,#8a8b8f,#77787c);border:1px solid #55565a;border-radius:2px"></div>
<div class="a" style="left:46px;top:1027px;width:8px;height:7px;background:#b01010;border:1px solid #601010"></div>
<div class="a" style="left:78px;top:1027px;width:8px;height:7px;background:#10a010;border:1px solid #106010"></div>
<div class="a" style="left:110px;top:1027px;width:8px;height:7px;background:#1010c0;border:1px solid #101060"></div>
<!-- right -->
<div class="a" style="left:1550px;top:48px;width:370px;height:21px;background:linear-gradient(#5c5c5c,#4c4c4c);border-top:1px solid #444;border-bottom:1px solid #3e3e3e"></div>
<div class="a" style="left:1550px;top:69px;width:14px;height:969px;background:linear-gradient(90deg,#5a5a5c,#6e6f72 60%,#58595b)"></div>
<div class="a" style="left:1564px;top:69px;width:14px;height:969px;background:linear-gradient(90deg,#5a5a5c,#6e6f72 60%,#58595b)"></div>
<div class="a" style="left:1563px;top:48px;width:1px;height:990px;background:#464646"></div>
<div class="a" style="left:1577px;top:48px;width:1px;height:990px;background:#464646"></div>
<div class="a" style="left:1550px;top:48px;width:1px;height:990px;background:#464646"></div>
<div class="a" style="left:1537px;top:95px;width:13px;height:931px;background:#6d6e72;border-left:1px solid #55565a"></div>
<div class="a" style="left:1538px;top:96px;width:11px;height:11px;background:linear-gradient(#8a8b8f,#747579);border:1px solid #55565a;border-radius:2px"></div>
<div class="a" style="left:1538px;top:1014.5px;width:11px;height:10.5px;background:linear-gradient(#8a8b8f,#747579);border:1px solid #55565a;border-radius:2px"></div>
<div class="a" style="left:1538px;top:430px;width:11px;height:258px;background:linear-gradient(90deg,#8c8d91,#76777b);border:1px solid #55565a;border-radius:2px"></div>
<div class="a" style="left:1538px;top:75px;width:11px;height:16px;background:linear-gradient(#8a8b8f,#6d6e72);border:1px solid #3c3c3c;border-radius:2px"></div>
<div class="a" style="left:1579px;top:70px;width:340px;height:17px;background:linear-gradient(#5b5b5b,#4a4a4a);border-top:1px solid #3d3d3d;border-bottom:1px solid #404040"></div>
<div class="a" style="left:1579px;top:71px;width:18px;height:14px;background:#5e5e5e;border-right:1px solid #474747"></div>
<svg class="a" style="left:1583px;top:74px;" width="11" height="9" viewBox="0 0 11 9"><path d="M0,0.5 L3.5,4 L0,7.5Z" fill="#8a8a8a"/><path d="M5,1.5H11M5,4.5H11M5,7.5H11" stroke="#8a8a8a" stroke-width="1.3"/></svg>
<div class="a" style="left:1598px;top:72px;width:71px;height:15px;background:#7b7c80;border:1px solid #5f6063;border-bottom:none;border-radius:2px 2px 0 0"></div>
<div class="t" style="left:1624px;top:77.3px;font-size:10.4px;color:#f2f2f2;">Navigator</div>
<div class="a" style="left:1670px;top:72px;width:85px;height:13px;background:#6a6b6f;border:1px solid #454545;border-bottom:none;border-radius:2px 2px 0 0"></div>
<div class="t" style="left:1697px;top:77.3px;font-size:10.4px;color:#9a9a9a;">Search Layer</div>
<div class="a" style="left:1579px;top:90px;width:339px;height:312px;background:#444444;border:1px solid #5a5b5f"></div>
<div class="a" style="left:1640px;top:101px;width:217px;height:289.5px;background:#e0e3eb"></div>
<svg class="a" style="left:1640px;top:101px;" width="217" height="290" viewBox="0 0 217 290"><path d="M24,32 L24,290 M24,32 L190,32 L190,290 M24,32 L36,72" stroke="#c9cede" stroke-width="0.6" fill="none"/><path d="M160,205 L179,216" stroke="#ecb8b4" stroke-width="0.6"/></svg>
<svg class="a" style="left:1653px;top:173px;opacity:.85" width="195.5" height="143.5" viewBox="273 95 1264 930" preserveAspectRatio="none"><path d="M655,988 L655,430 A257,249 0 0 1 1169,430 L1169,656 C1162,657 1155,664 1152,673 C1147,690 1146,715 1150,740 C1153,760 1160,775 1160,784 C1158,800 1152,812 1147,824 C1140,840 1132,852 1123,864 C1112,878 1100,888 1097,897 C1093,906 1094,915 1095,925 C1096,945 1102,975 1132,985 L1166,988 Z" fill="#ffffff" stroke="none"/>
<line x1="343" y1="95" x2="343" y2="996" stroke="#aab2cf" stroke-width="2.3" opacity="1"/>
<line x1="1434" y1="95" x2="1434" y2="996" stroke="#aab2cf" stroke-width="2.3" opacity="1"/>
<line x1="1217" y1="95" x2="1217" y2="996" stroke="#aab2cf" stroke-width="2.3" opacity="0.8"/>
<line x1="900" y1="121" x2="1180" y2="96" stroke="#aab2cf" stroke-width="2.3" opacity="0.6"/>
<line x1="960" y1="180" x2="1260" y2="96" stroke="#aab2cf" stroke-width="2.3" opacity="0.5"/>
<line x1="343" y1="249" x2="655" y2="249" stroke="#aab2cf" stroke-width="2.3" opacity="1"/>
<line x1="1169" y1="249" x2="1440" y2="249" stroke="#aab2cf" stroke-width="2.3" opacity="1"/>
<line x1="438" y1="237" x2="655" y2="237" stroke="#aab2cf" stroke-width="2.3" opacity="0.6"/>
<line x1="1169" y1="237" x2="1290" y2="237" stroke="#aab2cf" stroke-width="2.3" opacity="0.6"/>
<line x1="404" y1="95" x2="439" y2="237" stroke="#aab2cf" stroke-width="2.3" opacity="0.7"/>
<line x1="439" y1="237" x2="439" y2="742" stroke="#aab2cf" stroke-width="2.3" opacity="0.6"/>
<line x1="343" y1="996" x2="1436" y2="996" stroke="#aab2cf" stroke-width="2.3" opacity="1"/>
<line x1="343" y1="996" x2="438" y2="742" stroke="#aab2cf" stroke-width="2.3" opacity="0.8"/>
<line x1="1436" y1="996" x2="1190" y2="870" stroke="#aab2cf" stroke-width="2.3" opacity="0.8"/>
<line x1="438" y1="742" x2="655" y2="742" stroke="#aab2cf" stroke-width="2.3" opacity="0.7"/>
<line x1="425" y1="710" x2="655" y2="710" stroke="#aab2cf" stroke-width="2.3" opacity="0.9"/>
<line x1="457" y1="727" x2="655" y2="727" stroke="#aab2cf" stroke-width="2.3" opacity="0.9"/>
<rect x="461" y="571" width="194" height="32" stroke="#aab2cf" stroke-width="2.3" fill="none" opacity="1"/>
<line x1="461" y1="585" x2="655" y2="585" stroke="#aab2cf" stroke-width="2.3" opacity="1"/>
<path d="M533,740 L520,925 L505,950 L655,950" stroke="#aab2cf" stroke-width="2.3" fill="none" opacity="1" stroke-linejoin="round" stroke-linecap="round" />
<path d="M511,949 C560,944 600,952 655,946" stroke="#aab2cf" stroke-width="2.3" fill="none" opacity="1" stroke-linejoin="round" stroke-linecap="round" />
<line x1="520" y1="925" x2="655" y2="925" stroke="#aab2cf" stroke-width="2.3" opacity="1"/>
<path d="M533,740 C580,735 620,745 655,738" stroke="#aab2cf" stroke-width="2.3" fill="none" opacity="1" stroke-linejoin="round" stroke-linecap="round" />
<rect x="1468" y="731" width="30" height="216" stroke="#aab2cf" stroke-width="2.8" fill="none" opacity="1"/>
<path d="M1446,748 L1446,728 L1498,731" stroke="#aab2cf" stroke-width="2.8" fill="none" opacity="1" stroke-linejoin="round" stroke-linecap="round" />
<line x1="1446" y1="885" x2="1446" y2="932" stroke="#aab2cf" stroke-width="2.8" opacity="1"/>
<line x1="1446" y1="932" x2="1446" y2="945" stroke="#3c5294" stroke-width="4.5" opacity="0.9"/>
<line x1="1498" y1="930" x2="1498" y2="947" stroke="#3c5294" stroke-width="4.5" opacity="0.8"/>
<line x1="1170" y1="746" x2="1468" y2="746" stroke="#aab2cf" stroke-width="2.3" opacity="1"/>
<line x1="1170" y1="843" x2="1447" y2="843" stroke="#aab2cf" stroke-width="2.3" opacity="1"/>
<line x1="1170" y1="855" x2="1468" y2="855" stroke="#aab2cf" stroke-width="2.3" opacity="1"/>
<line x1="1170" y1="884" x2="1468" y2="884" stroke="#aab2cf" stroke-width="2.3" opacity="1"/>
<line x1="1240" y1="700" x2="1410" y2="750" stroke="#aab2cf" stroke-width="2.8" opacity="1"/>
<line x1="1410" y1="750" x2="1440" y2="748" stroke="#aab2cf" stroke-width="2.3" opacity="1"/>
<path d="M474,600 L474,327 C520,290 580,272 640,272 C720,272 800,290 845,318 L845,560" stroke="#aab2cf" stroke-width="2.8" fill="none" opacity="1" stroke-linejoin="round" stroke-linecap="round" />
<path d="M478,600 L478,330 C522,296 580,278 640,278 C715,278 790,294 840,322" stroke="#aab2cf" stroke-width="2.3" fill="none" opacity="0.8" stroke-linejoin="round" stroke-linecap="round" />
<path d="M492,560 L492,345 C530,312 590,298 650,298 C720,298 780,312 836,338 L836,556 Z" stroke="#aab2cf" stroke-width="2.8" fill="none" opacity="1" stroke-linejoin="round" stroke-linecap="round" />
<path d="M496,556 L496,348 C534,318 592,304 650,304 C715,304 776,316 832,342 L832,552 Z" stroke="#aab2cf" stroke-width="2.3" fill="none" opacity="0.8" stroke-linejoin="round" stroke-linecap="round" />
<line x1="498" y1="340" x2="498" y2="552" stroke="#aab2cf" stroke-width="2.3" opacity="1"/>
<line x1="502" y1="340" x2="502" y2="552" stroke="#aab2cf" stroke-width="2.3" opacity="1"/>
<line x1="524" y1="340" x2="524" y2="552" stroke="#aab2cf" stroke-width="2.3" opacity="1"/>
<line x1="528" y1="340" x2="528" y2="552" stroke="#aab2cf" stroke-width="2.3" opacity="1"/>
<line x1="552" y1="340" x2="552" y2="552" stroke="#aab2cf" stroke-width="2.3" opacity="1"/>
<line x1="556" y1="340" x2="556" y2="552" stroke="#aab2cf" stroke-width="2.3" opacity="1"/>
<line x1="580" y1="316" x2="580" y2="552" stroke="#aab2cf" stroke-width="2.3" opacity="1"/>
<line x1="584" y1="316" x2="584" y2="552" stroke="#aab2cf" stroke-width="2.3" opacity="1"/>
<line x1="608" y1="316" x2="608" y2="552" stroke="#aab2cf" stroke-width="2.3" opacity="1"/>
<line x1="612" y1="316" x2="612" y2="552" stroke="#aab2cf" stroke-width="2.3" opacity="1"/>
<line x1="634" y1="316" x2="634" y2="552" stroke="#aab2cf" stroke-width="2.3" opacity="1"/>
<line x1="638" y1="316" x2="638" y2="552" stroke="#aab2cf" stroke-width="2.3" opacity="1"/>
<line x1="662" y1="316" x2="662" y2="552" stroke="#b4bedc" stroke-width="2.3" opacity="1"/>
<line x1="666" y1="316" x2="666" y2="552" stroke="#b4bedc" stroke-width="2.3" opacity="1"/>
<line x1="690" y1="316" x2="690" y2="552" stroke="#b4bedc" stroke-width="2.3" opacity="1"/>
<line x1="694" y1="316" x2="694" y2="552" stroke="#b4bedc" stroke-width="2.3" opacity="1"/>
<line x1="718" y1="316" x2="718" y2="552" stroke="#b4bedc" stroke-width="2.3" opacity="1"/>
<line x1="722" y1="316" x2="722" y2="552" stroke="#b4bedc" stroke-width="2.3" opacity="1"/>
<line x1="746" y1="316" x2="746" y2="552" stroke="#b4bedc" stroke-width="2.3" opacity="1"/>
<line x1="750" y1="316" x2="750" y2="552" stroke="#b4bedc" stroke-width="2.3" opacity="1"/>
<line x1="774" y1="340" x2="774" y2="552" stroke="#b4bedc" stroke-width="2.3" opacity="1"/>
<line x1="778" y1="340" x2="778" y2="552" stroke="#b4bedc" stroke-width="2.3" opacity="1"/>
<line x1="802" y1="340" x2="802" y2="552" stroke="#b4bedc" stroke-width="2.3" opacity="1"/>
<line x1="806" y1="340" x2="806" y2="552" stroke="#b4bedc" stroke-width="2.3" opacity="1"/>
<line x1="828" y1="340" x2="828" y2="552" stroke="#b4bedc" stroke-width="2.3" opacity="1"/>
<line x1="832" y1="340" x2="832" y2="552" stroke="#b4bedc" stroke-width="2.3" opacity="1"/>
<line x1="496" y1="345" x2="655" y2="345" stroke="#aab2cf" stroke-width="2.3" opacity="1"/>
<line x1="496" y1="349" x2="655" y2="349" stroke="#aab2cf" stroke-width="2.3" opacity="1"/>
<line x1="655" y1="345" x2="832" y2="345" stroke="#b4bedc" stroke-width="2.3" opacity="1"/>
<line x1="655" y1="349" x2="832" y2="349" stroke="#b4bedc" stroke-width="2.3" opacity="1"/>
<line x1="496" y1="378" x2="655" y2="378" stroke="#aab2cf" stroke-width="2.3" opacity="1"/>
<line x1="496" y1="382" x2="655" y2="382" stroke="#aab2cf" stroke-width="2.3" opacity="1"/>
<line x1="655" y1="378" x2="832" y2="378" stroke="#b4bedc" stroke-width="2.3" opacity="1"/>
<line x1="655" y1="382" x2="832" y2="382" stroke="#b4bedc" stroke-width="2.3" opacity="1"/>
<line x1="496" y1="412" x2="655" y2="412" stroke="#aab2cf" stroke-width="2.3" opacity="1"/>
<line x1="496" y1="416" x2="655" y2="416" stroke="#aab2cf" stroke-width="2.3" opacity="1"/>
<line x1="655" y1="412" x2="832" y2="412" stroke="#b4bedc" stroke-width="2.3" opacity="1"/>
<line x1="655" y1="416" x2="832" y2="416" stroke="#b4bedc" stroke-width="2.3" opacity="1"/>
<line x1="496" y1="446" x2="655" y2="446" stroke="#aab2cf" stroke-width="2.3" opacity="1"/>
<line x1="496" y1="450" x2="655" y2="450" stroke="#aab2cf" stroke-width="2.3" opacity="1"/>
<line x1="655" y1="446" x2="832" y2="446" stroke="#b4bedc" stroke-width="2.3" opacity="1"/>
<line x1="655" y1="450" x2="832" y2="450" stroke="#b4bedc" stroke-width="2.3" opacity="1"/>
<line x1="496" y1="480" x2="655" y2="480" stroke="#aab2cf" stroke-width="2.3" opacity="1"/>
<line x1="496" y1="484" x2="655" y2="484" stroke="#aab2cf" stroke-width="2.3" opacity="1"/>
<line x1="655" y1="480" x2="832" y2="480" stroke="#b4bedc" stroke-width="2.3" opacity="1"/>
<line x1="655" y1="484" x2="832" y2="484" stroke="#b4bedc" stroke-width="2.3" opacity="1"/>
<line x1="496" y1="514" x2="655" y2="514" stroke="#aab2cf" stroke-width="2.3" opacity="1"/>
<line x1="496" y1="518" x2="655" y2="518" stroke="#aab2cf" stroke-width="2.3" opacity="1"/>
<line x1="655" y1="514" x2="832" y2="514" stroke="#b4bedc" stroke-width="2.3" opacity="1"/>
<line x1="655" y1="518" x2="832" y2="518" stroke="#b4bedc" stroke-width="2.3" opacity="1"/>
<line x1="496" y1="546" x2="655" y2="546" stroke="#aab2cf" stroke-width="2.3" opacity="1"/>
<line x1="496" y1="550" x2="655" y2="550" stroke="#aab2cf" stroke-width="2.3" opacity="1"/>
<line x1="655" y1="546" x2="832" y2="546" stroke="#b4bedc" stroke-width="2.3" opacity="1"/>
<line x1="655" y1="550" x2="832" y2="550" stroke="#b4bedc" stroke-width="2.3" opacity="1"/>
<line x1="508.0" y1="546.0" x2="329" y2="561" stroke="#e9a29c" stroke-width="2.3" opacity="1"/>
<line x1="508.0" y1="546.0" x2="376" y2="489" stroke="#e9a29c" stroke-width="2.3" opacity="1"/>
<line x1="508.0" y1="546.0" x2="417" y2="538" stroke="#e9a29c" stroke-width="2.3" opacity="1"/>
<line x1="508.0" y1="546.0" x2="431" y2="560" stroke="#e9a29c" stroke-width="2.3" opacity="1"/>
<line x1="508.0" y1="546.0" x2="442" y2="574" stroke="#e9a29c" stroke-width="2.3" opacity="1"/>
<line x1="508.0" y1="546.0" x2="408" y2="627" stroke="#e9a29c" stroke-width="2.3" opacity="1"/>
<line x1="508.0" y1="546.0" x2="464" y2="531" stroke="#e9a29c" stroke-width="2.3" opacity="1"/>
<line x1="508.0" y1="546.0" x2="478" y2="514" stroke="#e9a29c" stroke-width="2.3" opacity="1"/>
<line x1="508.0" y1="546.0" x2="485" y2="621" stroke="#e9a29c" stroke-width="2.3" opacity="1"/>
<line x1="508.0" y1="546.0" x2="599" y2="943" stroke="#e9a29c" stroke-width="2.3" opacity="1"/>
<line x1="508.0" y1="546.0" x2="756" y2="973" stroke="#e9a29c" stroke-width="2.3" opacity="1"/>
<line x1="508.0" y1="546.0" x2="870" y2="906" stroke="#e9a29c" stroke-width="2.3" opacity="1"/>
<line x1="508.0" y1="546.0" x2="617" y2="199" stroke="#e9a29c" stroke-width="2.3" opacity="1"/>
<line x1="508.0" y1="546.0" x2="741" y2="208" stroke="#e9a29c" stroke-width="2.3" opacity="1"/>
<line x1="508.0" y1="546.0" x2="1469" y2="239" stroke="#e9a29c" stroke-width="2.3" opacity="1"/>
<line x1="508.0" y1="546.0" x2="1443" y2="387" stroke="#e9a29c" stroke-width="2.3" opacity="1"/>
<line x1="508.0" y1="546.0" x2="1313" y2="333" stroke="#e9a29c" stroke-width="2.3" opacity="1"/>
<line x1="508.0" y1="546.0" x2="1380" y2="96" stroke="#e9a29c" stroke-width="2.3" opacity="1"/>
<line x1="508.0" y1="546.0" x2="1335" y2="665" stroke="#e9a29c" stroke-width="2.3" opacity="1"/>
<line x1="508.0" y1="546.0" x2="1353" y2="791" stroke="#e9a29c" stroke-width="2.3" opacity="1"/>
<line x1="508.0" y1="546.0" x2="1368" y2="908" stroke="#e9a29c" stroke-width="2.3" opacity="1"/>
<line x1="508.0" y1="546.0" x2="1240" y2="1025" stroke="#e9a29c" stroke-width="2.3" opacity="1"/>
<line x1="508.0" y1="546.0" x2="1262" y2="1025" stroke="#e9a29c" stroke-width="2.3" opacity="1"/>
<line x1="508.0" y1="546.0" x2="1210" y2="1025" stroke="#e9a29c" stroke-width="2.3" opacity="1"/>
<line x1="508.0" y1="546.0" x2="1010" y2="812" stroke="#e9a29c" stroke-width="2.3" opacity="1"/>
<line x1="508.0" y1="546.0" x2="967" y2="174" stroke="#e9a29c" stroke-width="2.3" opacity="1"/>
<line x1="508.0" y1="546.0" x2="1182" y2="258" stroke="#e9a29c" stroke-width="2.3" opacity="1"/>
<line x1="508.0" y1="546.0" x2="1306" y2="478" stroke="#e9a29c" stroke-width="2.3" opacity="1"/>
<line x1="508.0" y1="546.0" x2="1293" y2="604" stroke="#e9a29c" stroke-width="2.3" opacity="1"/>
<line x1="508.0" y1="546.0" x2="1272" y2="545.5" stroke="#e9a29c" stroke-width="2.3" opacity="1"/>
<line x1="508.0" y1="546.0" x2="600" y2="940" stroke="#e9a29c" stroke-width="2.3" opacity="1"/>
<line x1="508.0" y1="546.0" x2="420" y2="598" stroke="#e9a29c" stroke-width="2.3" opacity="1"/>
<line x1="508.0" y1="546.0" x2="455" y2="600" stroke="#e9a29c" stroke-width="2.3" opacity="1"/>
<line x1="508" y1="298" x2="508" y2="970" stroke="#e9a29c" stroke-width="2.3" opacity="1"/>
<rect x="529.5" y="314.5" width="770" height="576" stroke="#6e6e72" stroke-width="2.8" fill="none" opacity="1"/>
<path d="M540.5,95 L540.5,143 L1284,143 L1284,95" stroke="#3c5294" stroke-width="6.9" fill="none" opacity="1" stroke-linejoin="round" stroke-linecap="round" />
<path d="M540.5,143 L555,153 L1269,153 L1284,143" stroke="#3c5294" stroke-width="6.9" fill="none" opacity="1" stroke-linejoin="round" stroke-linecap="round" />
<line x1="584" y1="154" x2="584" y2="1027" stroke="#3c5294" stroke-width="5.4" opacity="1"/>
<line x1="588" y1="154" x2="588" y2="1027" stroke="#3c5294" stroke-width="5.4" opacity="1"/>
<line x1="645" y1="154" x2="645" y2="1016" stroke="#3c5294" stroke-width="5.4" opacity="1"/>
<line x1="653" y1="154" x2="653" y2="1003" stroke="#3c5294" stroke-width="5.4" opacity="1"/>
<line x1="1171" y1="154" x2="1171" y2="1003" stroke="#3c5294" stroke-width="5.4" opacity="1"/>
<line x1="1179" y1="154" x2="1179" y2="1016" stroke="#3c5294" stroke-width="5.4" opacity="1"/>
<line x1="1237" y1="154" x2="1237" y2="1027" stroke="#3c5294" stroke-width="5.4" opacity="1"/>
<line x1="1241" y1="154" x2="1241" y2="1027" stroke="#3c5294" stroke-width="5.4" opacity="1"/>
<line x1="588" y1="1016" x2="645" y2="1016" stroke="#3c5294" stroke-width="6.0" opacity="1"/>
<line x1="1179" y1="1016" x2="1241" y2="1016" stroke="#3c5294" stroke-width="6.0" opacity="1"/>
<line x1="653" y1="159" x2="1171" y2="159" stroke="#3c5294" stroke-width="5.4" opacity="1"/>
<line x1="645" y1="155" x2="1179" y2="155" stroke="#3c5294" stroke-width="4.5" opacity="1"/>
<rect x="601" y="145" width="24" height="142" stroke="#3c5294" stroke-width="6.0" fill="none" opacity="1"/>
<line x1="601" y1="257" x2="625" y2="257" stroke="#3c5294" stroke-width="6.0" opacity="1"/>
<rect x="1199" y="145" width="24" height="142" stroke="#3c5294" stroke-width="6.0" fill="none" opacity="1"/>
<line x1="1199" y1="258" x2="1223" y2="258" stroke="#3c5294" stroke-width="6.0" opacity="1"/>
<line x1="1171" y1="273" x2="1171" y2="287" stroke="#3c5294" stroke-width="6.0" opacity="1"/>
<line x1="654" y1="273" x2="654" y2="287" stroke="#3c5294" stroke-width="6.0" opacity="1"/>
<path d="M655,430 A257,249 0 0 1 1169,430" fill="none" stroke="#3c5294" stroke-width="11.5" stroke-linecap="round"/>
<line x1="657" y1="430" x2="657" y2="1003" stroke="#3c5294" stroke-width="4.5" opacity="1"/>
<line x1="1168" y1="430" x2="1168" y2="1003" stroke="#3c5294" stroke-width="4.5" opacity="1"/>
<line x1="660" y1="988.5" x2="1166" y2="988.5" stroke="#3c5294" stroke-width="8.4" opacity="1"/>
<path d="M512,388 C505,408 498,432 506,442 M512,388 C514,410 540,428 541,452 C542,462 538,470 538,470 M493,434 C486,455 496,475 508,482 C500,484 497,480 494,478 M493,434 C500,452 526,450 530,478 M557,441 C548,450 542,462 538,470 M557,441 C548,458 566,468 552,488 C550,490 547,492 547,492" stroke="#3c5294" stroke-width="3.0" fill="none" opacity="1" stroke-linejoin="round" stroke-linecap="round" />
<rect x="512" y="487.5" width="36" height="5.5" stroke="#3c5294" stroke-width="5.4" fill="none" opacity="1"/>
<path d="M506,493 L555,493 L555,508 L547,516 L516,516 L506,508 Z" stroke="#3c5294" stroke-width="5.4" fill="none" opacity="1" stroke-linejoin="round" stroke-linecap="round" />
<path d="M516,516 L516,523 M547,516 L547,523" stroke="#3c5294" stroke-width="5.4" fill="none" opacity="1" stroke-linejoin="round" stroke-linecap="round" />
<rect x="508" y="523" width="46" height="21" stroke="#3c5294" stroke-width="5.4" fill="none" opacity="1"/>
<line x1="508" y1="528" x2="554" y2="528" stroke="#3c5294" stroke-width="4.5" opacity="1"/>
<line x1="508" y1="539.5" x2="554" y2="539.5" stroke="#3c5294" stroke-width="4.5" opacity="1"/>
<path d="M515,544 L515,563 C516,575 524,584 524,603 C526,609 536,609 539,603 C539,584 546,575 547,563 L547,544" stroke="#3c5294" stroke-width="5.4" fill="none" opacity="1" stroke-linejoin="round" stroke-linecap="round" />
<path d="M1316,388 C1323,408 1330,432 1322,442 M1316,388 C1314,410 1288,428 1287,452 C1286,462 1290,470 1290,470 M1335,434 C1342,455 1332,475 1320,482 C1328,484 1331,480 1334,478 M1335,434 C1328,452 1302,450 1298,478 M1271,441 C1280,450 1286,462 1290,470 M1271,441 C1280,458 1262,468 1276,488 C1278,490 1281,492 1281,492" stroke="#3c5294" stroke-width="3.0" fill="none" opacity="1" stroke-linejoin="round" stroke-linecap="round" />
<rect x="1280" y="487.5" width="36" height="5.5" stroke="#3c5294" stroke-width="5.4" fill="none" opacity="1"/>
<path d="M1322,493 L1273,493 L1273,508 L1281,516 L1312,516 L1322,508 Z" stroke="#3c5294" stroke-width="5.4" fill="none" opacity="1" stroke-linejoin="round" stroke-linecap="round" />
<path d="M1312,516 L1312,523 M1281,516 L1281,523" stroke="#3c5294" stroke-width="5.4" fill="none" opacity="1" stroke-linejoin="round" stroke-linecap="round" />
<rect x="1274" y="523" width="46" height="21" stroke="#3c5294" stroke-width="5.4" fill="none" opacity="1"/>
<line x1="1320" y1="528" x2="1274" y2="528" stroke="#3c5294" stroke-width="4.5" opacity="1"/>
<line x1="1320" y1="539.5" x2="1274" y2="539.5" stroke="#3c5294" stroke-width="4.5" opacity="1"/>
<path d="M1313,544 L1313,563 C1312,575 1304,584 1304,603 C1302,609 1292,609 1289,603 C1289,584 1282,575 1281,563 L1281,544" stroke="#3c5294" stroke-width="5.4" fill="none" opacity="1" stroke-linejoin="round" stroke-linecap="round" />
<line x1="858" y1="236" x2="858" y2="600" stroke="#6b7ab6" stroke-width="2.3" opacity="0.9"/>
<line x1="874" y1="236" x2="874" y2="600" stroke="#6b7ab6" stroke-width="2.3" opacity="0.9"/>
<line x1="880" y1="236" x2="880" y2="600" stroke="#6b7ab6" stroke-width="2.3" opacity="0.9"/>
<line x1="914" y1="236" x2="914" y2="600" stroke="#6b7ab6" stroke-width="2.3" opacity="0.9"/>
<line x1="936" y1="236" x2="936" y2="600" stroke="#6b7ab6" stroke-width="2.3" opacity="0.9"/>
<line x1="1021" y1="196" x2="1021" y2="690" stroke="#6b7ab6" stroke-width="2.3" opacity="0.9"/>
<line x1="1052" y1="196" x2="1052" y2="690" stroke="#6b7ab6" stroke-width="2.3" opacity="0.9"/>
<line x1="1088" y1="196" x2="1088" y2="690" stroke="#6b7ab6" stroke-width="2.3" opacity="0.9"/>
<line x1="1129" y1="196" x2="1129" y2="690" stroke="#6b7ab6" stroke-width="2.3" opacity="0.9"/>
<path d="M874,236 L880,240 M880,240 L914,238 L936,214 L1012,214" stroke="#6b7ab6" stroke-width="2.3" fill="none" opacity="0.9" stroke-linejoin="round" stroke-linecap="round" />
<line x1="936" y1="214" x2="936" y2="250" stroke="#6b7ab6" stroke-width="2.3" opacity="1"/>
<path d="M785,262 C790,280 782,290 790,300 M802,250 C810,270 800,280 806,292 M820,252 C826,270 832,262 830,290 M845,262 C840,280 850,290 846,310" stroke="#aab2cf" stroke-width="2.3" fill="none" opacity="1" stroke-linejoin="round" stroke-linecap="round" />
<path d="M1028,230 C1035,260 1024,280 1034,300 C1040,330 1030,350 1040,380 M1060,250 C1052,280 1066,300 1058,330 M1090,240 C1098,270 1086,300 1096,330 C1100,360 1092,380 1100,400 M1120,300 C1128,330 1116,350 1126,380 C1130,420 1120,440 1130,470" stroke="#aab2cf" stroke-width="2.3" fill="none" opacity="1" stroke-linejoin="round" stroke-linecap="round" />
<path d="M1150,470 C1130,480 1135,520 1150,540" stroke="#aab2cf" stroke-width="2.3" fill="none" opacity="1" stroke-linejoin="round" stroke-linecap="round" />
<path d="M1024,222 C1034,240 1030,255 1026,262 M1030,290 C1040,275 1046,290 1052,300 C1058,310 1060,296 1066,280 M1024,345 C1032,350 1036,370 1044,388 M1062,395 C1066,370 1076,360 1082,340 C1086,325 1078,300 1084,270 M1096,330 C1100,350 1094,370 1100,390 C1104,370 1110,360 1118,372 C1124,384 1128,396 1134,406 M1110,250 C1116,270 1110,290 1118,310 M1134,300 C1140,320 1146,340 1150,356" stroke="#aab2cf" stroke-width="2.3" fill="none" opacity="0.9" stroke-linejoin="round" stroke-linecap="round" />
<path d="M1140,505 C1150,485 1160,490 1166,500 M1150,545 C1154,530 1160,522 1166,520" stroke="#aab2cf" stroke-width="2.3" fill="none" opacity="0.9" stroke-linejoin="round" stroke-linecap="round" />
<path d="M768,299 L858,329 L858,567 L783,567" stroke="#6b7ab6" stroke-width="3.0" fill="none" opacity="1" stroke-linejoin="round" stroke-linecap="round" />
<path d="M774,311 L847,336 L847,560 L790,560" stroke="#6b7ab6" stroke-width="3.0" fill="none" opacity="1" stroke-linejoin="round" stroke-linecap="round" />
<path d="M781,323 L839,344 L839,553 L794,553" stroke="#6b7ab6" stroke-width="3.0" fill="none" opacity="1" stroke-linejoin="round" stroke-linecap="round" />
<rect x="789" y="381" width="11" height="28" stroke="#6b7ab6" stroke-width="2.8" fill="none" opacity="1"/>
<rect x="789" y="414" width="11" height="28" stroke="#6b7ab6" stroke-width="2.8" fill="none" opacity="1"/>
<rect x="789" y="448" width="11" height="30" stroke="#6b7ab6" stroke-width="2.8" fill="none" opacity="1"/>
<rect x="789" y="483" width="11" height="28" stroke="#6b7ab6" stroke-width="2.8" fill="none" opacity="1"/>
<rect x="789" y="517" width="11" height="28" stroke="#6b7ab6" stroke-width="2.8" fill="none" opacity="1"/>
<rect x="803" y="345" width="23" height="30" stroke="#6b7ab6" stroke-width="2.8" fill="none" opacity="1"/>
<rect x="803" y="381" width="23" height="28" stroke="#6b7ab6" stroke-width="2.8" fill="none" opacity="1"/>
<rect x="803" y="414" width="23" height="28" stroke="#6b7ab6" stroke-width="2.8" fill="none" opacity="1"/>
<rect x="803" y="448" width="23" height="30" stroke="#6b7ab6" stroke-width="2.8" fill="none" opacity="1"/>
<rect x="803" y="483" width="23" height="28" stroke="#6b7ab6" stroke-width="2.8" fill="none" opacity="1"/>
<rect x="803" y="517" width="23" height="28" stroke="#6b7ab6" stroke-width="2.8" fill="none" opacity="1"/>
<path d="M803,375 L803,338 L826,348 L826,375 Z" stroke="#6b7ab6" stroke-width="2.8" fill="none" opacity="1" stroke-linejoin="round" stroke-linecap="round" />
<path d="M783,567 L783,573 L865,573 L872,568 L872,592 L858,598" stroke="#6b7ab6" stroke-width="2.8" fill="none" opacity="1" stroke-linejoin="round" stroke-linecap="round" />
<line x1="783" y1="578" x2="872" y2="578" stroke="#6b7ab6" stroke-width="2.3" opacity="1"/>
<path d="M662,438 C668,380 690,290 742,248 C762,270 778,330 786,420 L791,470 L791,875 L675,965 L663,966 L663,560" stroke="#3c5294" stroke-width="4.8" fill="none" opacity="1" stroke-linejoin="round" stroke-linecap="round" />
<path d="M675,424 C682,370 700,295 742,250" stroke="#3c5294" stroke-width="3.9" fill="none" opacity="1" stroke-linejoin="round" stroke-linecap="round" />
<line x1="675" y1="560" x2="675" y2="965" stroke="#3c5294" stroke-width="4.5" opacity="1"/>
<line x1="668" y1="560" x2="668" y2="920" stroke="#6b7ab6" stroke-width="2.3" opacity="1"/>
<line x1="709" y1="300" x2="709" y2="938" stroke="#6b7ab6" stroke-width="2.8" opacity="1"/>
<line x1="740" y1="250" x2="740" y2="914" stroke="#6b7ab6" stroke-width="2.8" opacity="1"/>
<line x1="768" y1="305" x2="768" y2="893" stroke="#6b7ab6" stroke-width="2.8" opacity="1"/>
<line x1="713" y1="905" x2="713" y2="935" stroke="#3c5294" stroke-width="3.6" opacity="1"/>
<line x1="744" y1="885" x2="744" y2="912" stroke="#3c5294" stroke-width="3.6" opacity="1"/>
<line x1="771" y1="868" x2="771" y2="890" stroke="#3c5294" stroke-width="3.6" opacity="1"/>
<ellipse cx="702" cy="308" rx="2.2" ry="3.8" stroke="#3c5294" stroke-width="2.8" fill="none"/>
<ellipse cx="718" cy="278" rx="2.2" ry="3.8" stroke="#3c5294" stroke-width="2.8" fill="none"/>
<ellipse cx="733" cy="268" rx="2.2" ry="3.8" stroke="#3c5294" stroke-width="2.8" fill="none"/>
<ellipse cx="748" cy="278" rx="2.2" ry="3.8" stroke="#3c5294" stroke-width="2.8" fill="none"/>
<ellipse cx="761" cy="300" rx="2.2" ry="3.8" stroke="#3c5294" stroke-width="2.8" fill="none"/>
<ellipse cx="773" cy="342" rx="2.2" ry="3.8" stroke="#3c5294" stroke-width="2.8" fill="none"/>
<ellipse cx="685" cy="393" rx="2.2" ry="3.8" stroke="#3c5294" stroke-width="2.8" fill="none"/>
<ellipse cx="785" cy="423" rx="2.2" ry="3.8" stroke="#3c5294" stroke-width="2.8" fill="none"/>
<ellipse cx="686" cy="939" rx="2.3" ry="4.2" stroke="#3c5294" stroke-width="2.8" fill="none"/>
<ellipse cx="703" cy="925" rx="2.3" ry="4.2" stroke="#3c5294" stroke-width="2.8" fill="none"/>
<ellipse cx="719" cy="911" rx="2.3" ry="4.2" stroke="#3c5294" stroke-width="2.8" fill="none"/>
<ellipse cx="734" cy="898" rx="2.3" ry="4.2" stroke="#3c5294" stroke-width="2.8" fill="none"/>
<ellipse cx="748" cy="886" rx="2.3" ry="4.2" stroke="#3c5294" stroke-width="2.8" fill="none"/>
<ellipse cx="761" cy="875" rx="2.3" ry="4.2" stroke="#3c5294" stroke-width="2.8" fill="none"/>
<ellipse cx="773" cy="866" rx="2.3" ry="4.2" stroke="#3c5294" stroke-width="2.8" fill="none"/>
<ellipse cx="785" cy="856" rx="2.3" ry="4.2" stroke="#3c5294" stroke-width="2.8" fill="none"/>
<rect x="659" y="439" width="16" height="119" stroke="#3c5294" stroke-width="5.4" fill="none" opacity="1"/>
<line x1="659" y1="463" x2="675" y2="463" stroke="#3c5294" stroke-width="3.6" opacity="1"/>
<line x1="659" y1="510" x2="675" y2="510" stroke="#3c5294" stroke-width="3.6" opacity="1"/>
<line x1="659" y1="545" x2="675" y2="545" stroke="#3c5294" stroke-width="3.6" opacity="1"/>
<path d="M675,444 L699,450 L699,466 L688,464 L686,474 L780,492 L780,524 L688,519 L688,528 L699,528 L699,553 L675,557" stroke="#3c5294" stroke-width="4.8" fill="none" opacity="1" stroke-linejoin="round" stroke-linecap="round" />
<path d="M686,480 L776,498 M690,513 L776,518" stroke="#3c5294" stroke-width="3.3" fill="none" opacity="1" stroke-linejoin="round" stroke-linecap="round" />
<ellipse cx="702" cy="499" rx="1.6" ry="3.6" stroke="#3c5294" stroke-width="2.3" fill="none"/>
<ellipse cx="706.5" cy="499" rx="1.6" ry="3.6" stroke="#3c5294" stroke-width="2.3" fill="none"/>
<ellipse cx="729" cy="502" rx="1.6" ry="3.6" stroke="#3c5294" stroke-width="2.3" fill="none"/>
<ellipse cx="733.5" cy="502" rx="1.6" ry="3.6" stroke="#3c5294" stroke-width="2.3" fill="none"/>
<ellipse cx="753" cy="505" rx="1.6" ry="3.6" stroke="#3c5294" stroke-width="2.3" fill="none"/>
<ellipse cx="757.5" cy="505" rx="1.6" ry="3.6" stroke="#3c5294" stroke-width="2.3" fill="none"/>
<ellipse cx="773" cy="508" rx="1.6" ry="3.6" stroke="#3c5294" stroke-width="2.3" fill="none"/>
<ellipse cx="777.5" cy="508" rx="1.6" ry="3.6" stroke="#3c5294" stroke-width="2.3" fill="none"/>
<ellipse cx="697" cy="457" rx="1.3" ry="3" stroke="#3c5294" stroke-width="2.3" fill="none"/>
<ellipse cx="697" cy="541" rx="1.3" ry="3" stroke="#3c5294" stroke-width="2.3" fill="none"/>
<ellipse cx="682" cy="546" rx="1.3" ry="3" stroke="#3c5294" stroke-width="2.3" fill="none"/>
<rect x="659" y="764" width="16" height="120" stroke="#3c5294" stroke-width="5.4" fill="none" opacity="1"/>
<line x1="659" y1="783" x2="675" y2="783" stroke="#3c5294" stroke-width="3.6" opacity="1"/>
<line x1="659" y1="806" x2="675" y2="806" stroke="#3c5294" stroke-width="3.6" opacity="1"/>
<line x1="659" y1="845" x2="675" y2="845" stroke="#3c5294" stroke-width="3.6" opacity="1"/>
<line x1="659" y1="864" x2="675" y2="864" stroke="#3c5294" stroke-width="3.6" opacity="1"/>
<path d="M675,768 L700,755 L700,777 L688,783 L687,795 L779,752 L779,778 L688,829 L689,842 L700,838 L700,866 L675,882" stroke="#3c5294" stroke-width="4.8" fill="none" opacity="1" stroke-linejoin="round" stroke-linecap="round" />
<path d="M690,801 L776,758 M690,822 L776,772" stroke="#3c5294" stroke-width="3.3" fill="none" opacity="1" stroke-linejoin="round" stroke-linecap="round" />
<ellipse cx="702" cy="808" rx="1.6" ry="3.8" stroke="#3c5294" stroke-width="2.3" fill="none"/>
<ellipse cx="706.5" cy="807" rx="1.6" ry="3.8" stroke="#3c5294" stroke-width="2.3" fill="none"/>
<ellipse cx="729" cy="793" rx="1.6" ry="3.8" stroke="#3c5294" stroke-width="2.3" fill="none"/>
<ellipse cx="733.5" cy="792" rx="1.6" ry="3.8" stroke="#3c5294" stroke-width="2.3" fill="none"/>
<ellipse cx="753" cy="780" rx="1.6" ry="3.8" stroke="#3c5294" stroke-width="2.3" fill="none"/>
<ellipse cx="757.5" cy="779" rx="1.6" ry="3.8" stroke="#3c5294" stroke-width="2.3" fill="none"/>
<ellipse cx="773" cy="770" rx="1.6" ry="3.8" stroke="#3c5294" stroke-width="2.3" fill="none"/>
<ellipse cx="777.5" cy="769" rx="1.6" ry="3.8" stroke="#3c5294" stroke-width="2.3" fill="none"/>
<ellipse cx="698" cy="766" rx="1.3" ry="3" stroke="#3c5294" stroke-width="2.3" fill="none"/>
<ellipse cx="698" cy="852" rx="1.3" ry="3" stroke="#3c5294" stroke-width="2.3" fill="none"/>
<ellipse cx="681" cy="864" rx="1.3" ry="3" stroke="#3c5294" stroke-width="2.3" fill="none"/>
<rect x="759" y="622" width="25" height="9" stroke="#3c5294" stroke-width="3.6" fill="none" opacity="1"/>
<ellipse cx="770.5" cy="656" rx="13" ry="31" stroke="#3c5294" stroke-width="3.7" fill="none"/>
<ellipse cx="770.5" cy="656" rx="6.5" ry="21" stroke="#3c5294" stroke-width="3.2" fill="none"/>
<path d="M761,640 C766,632 775,632 780,640 M761,673 C766,682 775,682 780,673" stroke="#3c5294" stroke-width="3.9" fill="none" opacity="1" stroke-linejoin="round" stroke-linecap="round" />
<path d="M827,603 L827,757 L839,762 L856,759 L856,604 Z" stroke="#3c5294" stroke-width="4.5" fill="none" opacity="1" stroke-linejoin="round" stroke-linecap="round" />
<line x1="839" y1="606" x2="839" y2="762" stroke="#3c5294" stroke-width="3.9" opacity="1"/>
<path d="M827,603 L839,606 L856,604" stroke="#3c5294" stroke-width="3.6" fill="none" opacity="1" stroke-linejoin="round" stroke-linecap="round" />
<rect x="1018" y="604" width="25" height="32" stroke="#3c5294" stroke-width="3.9" fill="none" opacity="1"/>
<line x1="1028" y1="604" x2="1028" y2="636" stroke="#3c5294" stroke-width="3.6" opacity="1"/>
<line x1="1031" y1="636" x2="1031" y2="664" stroke="#6b7ab6" stroke-width="2.3" opacity="1"/>
<path d="M856,604 C880,585 915,578 936,579 C965,580 1000,590 1018,604" stroke="#3c5294" stroke-width="5.4" fill="none" opacity="1" stroke-linejoin="round" stroke-linecap="round" />
<path d="M866,614 C890,596 920,590 940,591 C965,592 990,600 1006,612" stroke="#6b7ab6" stroke-width="2.3" fill="none" opacity="1" stroke-linejoin="round" stroke-linecap="round" />
<path d="M864,640 C866,630 880,630 900,636 C920,642 940,640 952,636 C962,648 964,666 956,678 C930,686 900,684 880,682 C866,676 862,660 864,640 Z" stroke="#3c5294" stroke-width="4.5" fill="#fff" opacity="1" stroke-linejoin="round" stroke-linecap="round" />
<path d="M954,640 C970,632 990,640 1010,636 C1030,630 1040,634 1050,648 C1058,660 1062,668 1052,676 C1020,684 990,684 966,678 C958,668 960,652 954,640 Z" stroke="#3c5294" stroke-width="4.5" fill="#fff" opacity="1" stroke-linejoin="round" stroke-linecap="round" />
<line x1="939" y1="650" x2="939" y2="668" stroke="#6b7ab6" stroke-width="2.3" opacity="1"/>
<path d="M862,668 L848,672 C844,690 846,706 849,716 L889,738" stroke="#3c5294" stroke-width="4.2" fill="none" opacity="1" stroke-linejoin="round" stroke-linecap="round" />
<path d="M878,682 L890,690 C886,710 886,724 889,738" stroke="#3c5294" stroke-width="4.2" fill="none" opacity="1" stroke-linejoin="round" stroke-linecap="round" />
<path d="M890,690 C930,686 980,684 1010,680 L1060,672 L1173,697" stroke="#3c5294" stroke-width="4.2" fill="none" opacity="1" stroke-linejoin="round" stroke-linecap="round" />
<path d="M889,738 L1099,840" stroke="#3c5294" stroke-width="5.4" fill="none" opacity="1" stroke-linejoin="round" stroke-linecap="round" />
<path d="M889,738 C900,742 920,752 940,762" stroke="#3c5294" stroke-width="3.6" fill="none" opacity="1" stroke-linejoin="round" stroke-linecap="round" />
<path d="M944,708 C936,718 936,730 938,744 M944,708 C980,712 1020,706 1050,704 M1095,694 C1110,690 1130,686 1140,690" stroke="#3c5294" stroke-width="3.3" fill="none" opacity="1" stroke-linejoin="round" stroke-linecap="round" />
<path d="M960,716 L975,720 M1000,732 L1003,733 M1048,728 C1060,724 1075,730 1080,734 M1070,756 L1082,759 M1016,742 C1030,736 1040,738 1046,740" stroke="#6b7ab6" stroke-width="2.8" fill="none" opacity="1" stroke-linejoin="round" stroke-linecap="round" />
<path d="M1070,798 C1072,806 1074,816 1082,822 C1090,826 1096,830 1099,834" stroke="#3c5294" stroke-width="3.3" fill="none" opacity="1" stroke-linejoin="round" stroke-linecap="round" />
<path d="M1072,798 C1068,790 1076,790 1074,800" stroke="#3c5294" stroke-width="3.0" fill="none" opacity="1" stroke-linejoin="round" stroke-linecap="round" />
<path d="M986,752 L992,778 M1040,780 C1050,784 1060,790 1068,796" stroke="#aab2cf" stroke-width="2.3" fill="none" opacity="1" stroke-linejoin="round" stroke-linecap="round" />
<path d="M839,713 L1099,845 M839,727 L1099,873" stroke="#3c5294" stroke-width="4.5" fill="none" opacity="1" stroke-linejoin="round" stroke-linecap="round" />
<path d="M856,743 L1000,808" stroke="#3c5294" stroke-width="3.6" fill="none" opacity="1" stroke-linejoin="round" stroke-linecap="round" />
<path d="M1099,727 L1099,930 L1119,948 L1152,946 L1152,732 L1119,728 Z" stroke="#3c5294" stroke-width="4.5" fill="none" opacity="1" stroke-linejoin="round" stroke-linecap="round" />
<line x1="1119" y1="728" x2="1119" y2="948" stroke="#3c5294" stroke-width="5.4" opacity="1"/>
<line x1="1099" y1="727" x2="1152" y2="732" stroke="#3c5294" stroke-width="3.6" opacity="1"/>
<path d="M793,739 L949,922" stroke="#3c5294" stroke-width="4.5" fill="none" opacity="1" stroke-linejoin="round" stroke-linecap="round" />
<path d="M712,926 L951,926 L960,938" stroke="#3c5294" stroke-width="3.6" fill="none" opacity="1" stroke-linejoin="round" stroke-linecap="round" />
<path d="M690,943 C740,950 800,944 850,942 C900,940 920,948 935,940 C945,934 952,932 960,938" stroke="#6b7ab6" stroke-width="2.3" fill="none" opacity="1" stroke-linejoin="round" stroke-linecap="round" />
<path d="M793,739 L860,744" stroke="#6b7ab6" stroke-width="2.3" fill="none" opacity="1" stroke-linejoin="round" stroke-linecap="round" />
<line x1="793" y1="700" x2="793" y2="760" stroke="#6b7ab6" stroke-width="2.3" opacity="1"/>
<path d="M1152,673 C1153,664 1158,659 1163,661 C1170,663 1176,668 1177,678 C1178,692 1178,706 1178.5,717" stroke="#8d8e96" stroke-width="2.3" fill="none" opacity="1" stroke-linejoin="round" stroke-linecap="round" />
<path d="M1152,673 C1147,690 1146,715 1150,740 C1153,760 1160,775 1160,784" stroke="#8d8e96" stroke-width="2.3" fill="none" opacity="1" stroke-linejoin="round" stroke-linecap="round" />
<ellipse cx="1160" cy="668" rx="5" ry="7" stroke="#8d8e96" stroke-width="2.3" fill="none" transform="rotate(-25 1160 668)"/>
<path d="M1180,718 C1188,700 1200,670 1208,650 C1212,632 1218,613 1227,612 C1234,613 1237,620 1235,628 C1232,650 1226,675 1223,697" stroke="#8d8e96" stroke-width="2.3" fill="none" opacity="1" stroke-linejoin="round" stroke-linecap="round" />
<ellipse cx="1227" cy="620" rx="4.5" ry="6.5" stroke="#8d8e96" stroke-width="2.3" fill="none" transform="rotate(-10 1227 620)"/>
<path d="M1208,650 C1214,646 1224,648 1230,652" stroke="#8d8e96" stroke-width="2.3" fill="none" opacity="0.8" stroke-linejoin="round" stroke-linecap="round" />
<path d="M1223,697 C1230,680 1238,660 1244,647 C1250,638 1258,633 1264,635 C1270,638 1270,644 1268,648 C1262,668 1252,690 1247,704" stroke="#8d8e96" stroke-width="2.3" fill="none" opacity="1" stroke-linejoin="round" stroke-linecap="round" />
<ellipse cx="1264" cy="642" rx="3.8" ry="5.8" stroke="#8d8e96" stroke-width="2.3" fill="none" transform="rotate(10 1264 642)"/>
<path d="M1262,664 C1264,658 1270,656 1273,659 C1277,664 1278,680 1277,697 C1277,710 1275,718 1273,724 C1270,740 1266,752 1262,764 C1252,780 1238,796 1227,808" stroke="#8d8e96" stroke-width="2.3" fill="none" opacity="1" stroke-linejoin="round" stroke-linecap="round" />
<ellipse cx="1271" cy="667" rx="3.2" ry="5.2" stroke="#8d8e96" stroke-width="2.3" fill="none" transform="rotate(15 1271 667)"/>
<path d="M1247,704 C1252,696 1258,688 1262,680 M1256,730 L1273,705 M1256,730 L1262,760" stroke="#8d8e96" stroke-width="2.3" fill="none" opacity="0.85" stroke-linejoin="round" stroke-linecap="round" />
<path d="M1200,700 C1212,692 1232,692 1246,700 M1180,718 C1182,722 1186,722 1190,716" stroke="#8d8e96" stroke-width="2.3" fill="none" opacity="0.8" stroke-linejoin="round" stroke-linecap="round" />
<path d="M1160,784 C1166,778 1174,776 1182,777 C1196,780 1208,788 1214,797 C1218,806 1219,815 1220,824 C1222,845 1222,860 1224,874 C1226,890 1228,905 1230,919" stroke="#8d8e96" stroke-width="2.3" fill="none" opacity="1" stroke-linejoin="round" stroke-linecap="round" />
<path d="M1160,784 C1158,800 1152,812 1147,824 C1140,840 1132,852 1123,864 C1112,878 1100,888 1097,897 C1093,906 1094,915 1095,925" stroke="#8d8e96" stroke-width="2.3" fill="none" opacity="1" stroke-linejoin="round" stroke-linecap="round" />
<path d="M1152,830 C1165,826 1180,826 1190,830 C1202,838 1210,848 1214,858 C1217,864 1219,869 1220,874" stroke="#8d8e96" stroke-width="2.3" fill="none" opacity="0.85" stroke-linejoin="round" stroke-linecap="round" />
<path d="M1134,868 C1138,858 1143,850 1148,842 M1128,872 C1132,862 1136,855 1140,850" stroke="#8d8e96" stroke-width="2.3" fill="none" opacity="0.6" stroke-linejoin="round" stroke-linecap="round" />
<path d="M1160,700 L1250,712" stroke="#aab2cf" stroke-width="2.8" fill="none" opacity="1" stroke-linejoin="round" stroke-linecap="round" /></svg>
<div class="a" style="left:1652.5px;top:172.5px;width:197px;height:145px;border:2px solid #d0101c"></div>
<div class="a" style="left:1584px;top:409.5px;width:183px;height:11px;background:linear-gradient(#77787c,#77787c);border:1px solid #505155"></div>
<svg class="a" style="left:1585px;top:410.5px;" width="181" height="9" viewBox="0 0 181 9"><path d="M0,9 L181,9 L181,0 L150,0 Z" fill="#3e3e3e"/></svg>
<div class="a" style="left:1660px;top:405px;width:3px;height:20px;background:#7e7f83;border:1px solid #4a4a4a"></div>
<div class="a" style="left:1584px;top:429.5px;width:183px;height:11px;background:#77787c;border:1px solid #505155"></div>
<svg class="a" style="left:1585px;top:430.5px;" width="181" height="9" viewBox="0 0 181 9"><path d="M0,0 C40,9 60,9 90,4.5 C120,0 140,0 181,9 L181,9 L0,9 Z" fill="#3e3e3e"/></svg>
<div class="a" style="left:1674px;top:425px;width:3px;height:20px;background:#7e7f83;border:1px solid #4a4a4a"></div>
<div class="t" style="left:1790px;top:408px;font-size:12px;color:#f2f2f2;">26.2</div>
<div class="t" style="left:1796px;top:429px;font-size:12px;color:#f2f2f2;">0.0</div>
<div class="a" style="left:1579px;top:445px;width:340px;height:2px;background:#5a5b5f"></div>
<div class="a" style="left:1579px;top:447px;width:340px;height:17px;background:linear-gradient(#5b5b5b,#4a4a4a);border-top:1px solid #3d3d3d;border-bottom:1px solid #404040"></div>
<div class="a" style="left:1579px;top:448px;width:18px;height:14px;background:#5e5e5e;border-right:1px solid #474747"></div>
<svg class="a" style="left:1583px;top:451px;" width="11" height="9" viewBox="0 0 11 9"><path d="M0,0.5 L3.5,4 L0,7.5Z" fill="#8a8a8a"/><path d="M5,1.5H11M5,4.5H11M5,7.5H11" stroke="#8a8a8a" stroke-width="1.3"/></svg>
<div class="a" style="left:1598px;top:449px;width:52px;height:15px;background:#7b7c80;border:1px solid #5f6063;border-bottom:none;border-radius:2px 2px 0 0"></div>
<div class="t" style="left:1624px;top:454.3px;font-size:10.4px;color:#f2f2f2;">Layer</div>
<div class="a" style="left:1651px;top:449px;width:27px;height:13px;background:#6a6b6f;border:1px solid #454545;border-bottom:none;border-radius:2px 2px 0 0"></div>
<div class="a" style="left:1679px;top:449px;width:27px;height:13px;background:#6a6b6f;border:1px solid #454545;border-bottom:none;border-radius:2px 2px 0 0"></div>
<div class="a" style="left:1707px;top:449px;width:27px;height:13px;background:#6a6b6f;border:1px solid #454545;border-bottom:none;border-radius:2px 2px 0 0"></div>
<div class="a" style="left:1735px;top:449px;width:27px;height:13px;background:#6a6b6f;border:1px solid #454545;border-bottom:none;border-radius:2px 2px 0 0"></div>
<div class="a" style="left:1581px;top:470px;width:163px;height:19px;background:linear-gradient(#8c8d91,#727377);border:1px solid #55565a;border-radius:2px"></div>
<div class="t" style="left:1638px;top:473px;font-size:12px;color:#f2f2f2;">Normal</div>
<svg class="a" style="left:1732px;top:477px;" width="8" height="6" viewBox="0 0 8 6"><path d="M0,0 L8,0 L4,5Z" fill="#2e2e2e"/></svg>
<div class="a" style="left:1751px;top:474.5px;width:117px;height:9px;background:#8a8b8f;border:1px solid #55565a"></div>
<div class="a chk3" style="left:1752px;top:475.5px;width:80px;height:7px;"></div>
<div class="a" style="left:1831.5px;top:469.5px;width:3px;height:19px;background:#7e7f83;border:1px solid #4a4a4a"></div>
<div class="t" style="left:1884px;top:473px;font-size:12px;color:#f2f2f2;">70</div>
<svg class="a" style="left:1898px;top:471px;" width="9" height="16" viewBox="0 0 9 16"><path d="M0,6 L4.5,0 L9,6Z M0,10 L4.5,16 L9,10Z" fill="#2e2e2e"/></svg>
<div class="a" style="left:1581px;top:491px;width:36px;height:19px;background:linear-gradient(#8c8d91,#727377);border:1px solid #55565a;border-radius:2px"></div>
<div class="a" style="left:1583px;top:493px;width:17px;height:15px;background:#7b7c80;border:1px solid #333"></div>
<svg class="a" style="left:1606px;top:498px;" width="7" height="5" viewBox="0 0 7 5"><path d="M0,0 L7,0 L3.5,4.5Z" fill="#2e2e2e"/></svg>
<div class="a" style="left:1758px;top:491px;width:20px;height:19px;background:#66676b;border:1px solid #48494d;border-radius:2px"></div>
<div class="a" style="left:1840px;top:491px;width:33px;height:19px;background:linear-gradient(#88898d,#75767a);border:1px solid #5c5d61;border-radius:2px"></div>
<div class="a" style="left:1876px;top:491px;width:34px;height:19px;background:linear-gradient(#88898d,#75767a);border:1px solid #5c5d61;border-radius:2px"></div>
<div class="a" style="left:1580px;top:514px;width:331px;height:497px;overflow:hidden;background:#7b7c80;border:1px solid #4d4e52">
<div class="a" style="left:-1px;top:-1px;width:4px;height:497px;background:#77787c;border-right:1px solid #55565a"></div>
<div class="a" style="left:22px;top:-1px;width:1px;height:497px;background:#55565a"></div>
<div class="a" style="left:40px;top:-1px;width:1px;height:497px;background:#55565a"></div>
<div class="a" style="left:41px;top:167px;width:276px;height:40px;background:linear-gradient(#8098a7,#728b9b)"></div>
<div class="a" style="left:55px;top:170px;width:4px;height:35px;background:#e88080"></div>
<div class="a" style="left:3px;top:22.5px;width:314px;height:1px;background:#4e4f53"></div>
<div class="a" style="left:54px;top:53px;width:263px;height:1px;background:#4e4f53"></div>
<div class="a" style="left:54px;top:84.5px;width:263px;height:1px;background:#4e4f53"></div>
<div class="a" style="left:54px;top:125.5px;width:263px;height:1px;background:#4e4f53"></div>
<div class="a" style="left:41px;top:166px;width:276px;height:1px;background:#4e4f53"></div>
<div class="a" style="left:41px;top:207px;width:276px;height:1px;background:#4e4f53"></div>
<div class="a" style="left:67px;top:238px;width:250px;height:1px;background:#4e4f53"></div>
<div class="a" style="left:81px;top:269px;width:236px;height:1px;background:#4e4f53"></div>
<div class="a" style="left:81px;top:310px;width:236px;height:1px;background:#4e4f53"></div>
<div class="a" style="left:81px;top:351px;width:236px;height:1px;background:#4e4f53"></div>
<div class="a" style="left:81px;top:392px;width:236px;height:1px;background:#4e4f53"></div>
<div class="a" style="left:81px;top:433px;width:236px;height:1px;background:#4e4f53"></div>
<div class="a" style="left:67px;top:474px;width:250px;height:1px;background:#4e4f53"></div>
<div class="t" style="left:82px;top:-3px;font-size:12px;color:#f2f2f2;">100 %&nbsp; Through</div>
<div class="t" style="left:82px;top:7px;font-size:12px;color:#f2f2f2;">Folder 8</div>
<div class="t" style="left:107px;top:26px;font-size:12px;color:#f2f2f2;">100 %&nbsp; Multiply</div>
<div class="t" style="left:107px;top:38px;font-size:12px;color:#f2f2f2;">foreground sketch</div>
<div class="t" style="left:97px;top:57px;font-size:12px;color:#f2f2f2;">91 %&nbsp; Normal</div>
<div class="t" style="left:97px;top:69px;font-size:12px;color:#f2f2f2;">doorway</div>
<div class="t" style="left:97px;top:211px;font-size:12px;color:#f2f2f2;">68 %&nbsp; Multiply</div>
<div class="t" style="left:97px;top:223px;font-size:12px;color:#f2f2f2;">BG</div>
<div class="t" style="left:112px;top:242px;font-size:12px;color:#f2f2f2;">100 %&nbsp; Normal</div>
<div class="t" style="left:112px;top:254px;font-size:12px;color:#f2f2f2;">Folder 1</div>
<div class="a" style="left:62px;top:88px;width:34px;height:34px;background:#4a4a4a;border:1.5px solid #111"></div>
<div class="a chk2" style="left:67px;top:89.5px;width:27.5px;height:31px;background-color:#efe8fa;"></div>
<div class="t" style="left:101px;top:91px;font-size:12px;color:#f2f2f2;">25 %&nbsp; Normal</div>
<div class="t" style="left:101px;top:110px;font-size:12px;color:#f2f2f2;">Layer 20Copy 3</div>
<div class="a" style="left:62px;top:129px;width:34px;height:34px;background:#4a4a4a;border:1.5px solid #111"></div>
<div class="a chk2" style="left:67px;top:130.5px;width:27.5px;height:31px;background-color:#e2d6f3;"></div>
<div class="t" style="left:101px;top:132px;font-size:12px;color:#f2f2f2;">100 %&nbsp; Normal</div>
<div class="t" style="left:101px;top:151px;font-size:12px;color:#f2f2f2;">Layer 20Copy</div>
<div class="a" style="left:65px;top:170px;width:34px;height:34px;background:#4a4a4a;border:1.5px solid #111"></div>
<div class="a chk2" style="left:70px;top:171.5px;width:27.5px;height:31px;background-color:#fbfbfb;"></div>
<div class="a" style="left:63.5px;top:168.5px;width:37px;height:37px;border:1px solid #111"></div>
<div class="t" style="left:104px;top:173px;font-size:12px;color:#f2f2f2;">70 %&nbsp; Normal</div>
<div class="t" style="left:104px;top:192px;font-size:12px;color:#f2f2f2;">Layer 28</div>
<div class="a" style="left:92px;top:273px;width:34px;height:34px;background:#4a4a4a;border:1.5px solid #111"></div>
<div class="a chk2" style="left:97px;top:274.5px;width:27.5px;height:31px;"></div>
<div class="t" style="left:131px;top:276px;font-size:12px;color:#f2f2f2;">100 %&nbsp; Normal</div>
<div class="t" style="left:131px;top:295px;font-size:12px;color:#f2f2f2;">Layer 26</div>
<div class="a" style="left:92px;top:314px;width:34px;height:34px;background:#4a4a4a;border:1.5px solid #111"></div>
<div class="a chk2" style="left:97px;top:315.5px;width:27.5px;height:31px;"></div>
<div class="t" style="left:131px;top:317px;font-size:12px;color:#f2f2f2;">100 %&nbsp; Normal</div>
<div class="t" style="left:131px;top:336px;font-size:12px;color:#f2f2f2;">Layer 25</div>
<div class="a" style="left:92px;top:355px;width:34px;height:34px;background:#4a4a4a;border:1.5px solid #111"></div>
<div class="a chk2" style="left:97px;top:356.5px;width:27.5px;height:31px;"></div>
<div class="t" style="left:131px;top:358px;font-size:12px;color:#f2f2f2;">100 %&nbsp; Normal</div>
<div class="t" style="left:131px;top:377px;font-size:12px;color:#f2f2f2;">Layer 23</div>
<div class="a" style="left:92px;top:396px;width:34px;height:34px;background:#4a4a4a;border:1.5px solid #111"></div>
<div class="a chk2" style="left:97px;top:397.5px;width:27.5px;height:31px;"></div>
<div class="t" style="left:131px;top:399px;font-size:12px;color:#f2f2f2;">100 %&nbsp; Normal</div>
<div class="t" style="left:131px;top:418px;font-size:12px;color:#f2f2f2;">Layer 24</div>
<div class="a" style="left:92px;top:437px;width:34px;height:34px;background:#4a4a4a;border:1.5px solid #111"></div>
<div class="a chk2" style="left:97px;top:438.5px;width:27.5px;height:31px;"></div>
<div class="t" style="left:131px;top:440px;font-size:12px;color:#f2f2f2;">8 %&nbsp; Normal</div>
<div class="t" style="left:131px;top:459px;font-size:12px;color:#f2f2f2;">Layer 22</div>
<div class="a" style="left:77px;top:478px;width:34px;height:34px;background:#4a4a4a;border:1.5px solid #111"></div>
<div class="a chk2" style="left:82px;top:479.5px;width:27.5px;height:31px;"></div>
<div class="t" style="left:116px;top:481px;font-size:12px;color:#f2f2f2;">27 %&nbsp; Normal</div>
<div class="a" style="left:82px;top:28px;width:21px;height:21px;background:#fff;border:1.5px solid #111"></div>
<div class="a" style="left:87px;top:39px;width:6px;height:6px;background:#00267d"></div>
<div class="a" style="left:95px;top:39px;width:6px;height:6px;background:#fff;border:1px solid #111"></div>
<div class="a" style="left:317px;top:-1px;width:1px;height:497px;background:#55565a"></div>
<div class="a" style="left:318px;top:-1px;width:12px;height:497px;background:#6c6d71"></div>
<div class="a" style="left:319px;top:0px;width:10px;height:10px;background:linear-gradient(#8a8b8f,#747579);border:1px solid #55565a;border-radius:2px"></div>
<div class="a" style="left:319px;top:485px;width:10px;height:10px;background:linear-gradient(#8a8b8f,#747579);border:1px solid #55565a;border-radius:2px"></div>
<div class="a" style="left:319px;top:75px;width:10px;height:148px;background:linear-gradient(90deg,#8c8d91,#76777b);border:1px solid #55565a;border-radius:2px"></div>
</div>
<div class="a" style="left:1579px;top:1012px;width:340px;height:26px;background:#7b7c80;border-top:1px solid #5a5b5f"></div>
<div class="a" style="left:1580px;top:1017px;width:20px;height:19px;background:#66676b;border:1px solid #505155;border-radius:2px"></div>
<div class="a" style="left:1911px;top:465px;width:8px;height:573px;background:linear-gradient(90deg,#6e6f73,#7b7c80 40%,#5e5f63)"></div>
<div class="a" style="left:1919px;top:0px;width:1px;height:1038px;background:#3e3f42"></div>
<div class="a" style="left:272px;top:1025px;width:1278px;height:13px;background:#6f7074;border-top:1px solid #4a4a4a"></div>
<div class="a" style="left:274px;top:1026px;width:42px;height:11px;background:#77787c;border:1px solid #505155"></div>
<svg class="a" style="left:275px;top:1027px;" width="40" height="9" viewBox="0 0 40 9"><path d="M0,9 L40,9 L40,0 L33,0 Z" fill="#3e3e3e"/></svg>
<div class="a" style="left:318px;top:1026px;width:56px;height:11px;background:#3e3e3e;border:1px solid #505155"></div>
<div class="t" style="left:350px;top:1027.5px;font-size:11.5px;color:#f2f2f2;">26.2</div>
<div class="a" style="left:435px;top:1026px;width:46px;height:11px;background:#77787c;border:1px solid #505155"></div>
<div class="t" style="left:438px;top:1027.5px;font-size:11.5px;color:#f2f2f2;">0.0</div>
<div class="a" style="left:484px;top:1026px;width:48px;height:11px;background:#77787c;border:1px solid #505155"></div>
<svg class="a" style="left:485px;top:1027px;" width="46" height="9" viewBox="0 0 46 9"><path d="M0,9 C10,2 16,0 23,0 C32,0 38,4 46,9 Z" fill="#3e3e3e"/></svg>
<div class="a" style="left:593px;top:1026px;width:957px;height:12px;background:#6c6d71"></div>
<div class="a" style="left:594px;top:1027px;width:11px;height:10px;background:linear-gradient(#8a8b8f,#747579);border:1px solid #55565a;border-radius:2px"></div>
<div class="a" style="left:1526px;top:1027px;width:11px;height:10px;background:linear-gradient(#8a8b8f,#747579);border:1px solid #55565a;border-radius:2px"></div>
<div class="a" style="left:893px;top:1027px;width:349px;height:10px;background:linear-gradient(#8c8d91,#76777b);border:1px solid #55565a;border-radius:2px"></div>
<!-- icons -->
<svg class="a" style="left:21.0px;top:69.0px" width="24" height="24" viewBox="-12.0 -12.0 24 24"><path d="M0,-9 C-2,-4 -2.5,1 -1.5,5 L1.5,5 C2.5,1 2,-4 0,-9Z" fill="#ddd" stroke="#111" stroke-width="1"/><path d="M-3.5,7.5 L3.5,7.5 L2,5 L-2,5Z" fill="#111"/><ellipse cx="0" cy="0" rx="0.9" ry="3" fill="#555"/></svg>
<svg class="a" style="left:9.0px;top:93.0px" width="24" height="24" viewBox="-12.0 -12.0 24 24"><path d="M2.6,3 L7.3,9" stroke="#222" stroke-width="2.6" stroke-linecap="round"/><circle cx="-1.4" cy="-2.4" r="6" fill="#f4f4f4" stroke="#333" stroke-width="1.4"/><circle cx="-1.4" cy="-2.4" r="4.6" fill="none" stroke="#bbb" stroke-width="0.8"/><path d="M-4.2,-1 L-1.5,-2.5 L-1.7,0.3Z" fill="#222"/></svg>
<svg class="a" style="left:9.0px;top:119.0px" width="24" height="24" viewBox="-12.0 -12.0 24 24"><path d="M-2.5,9 L-3,5 C-5,3.5 -7.5,1.5 -9,-0.5 C-8.5,-2 -6.5,-1.5 -4.5,0.5 L-5.5,-6 C-5,-7.5 -3.5,-7.3 -3,-6 L-1.6,-1 L-1.2,-8.5 C-0.8,-10 1,-10 1.2,-8.5 L1.4,-1.2 L3.6,-7 C4.2,-8.3 5.8,-7.7 5.5,-6.2 L4,0 L7,-2.6 C8.2,-3.4 9.2,-2.2 8.4,-1.2 C6.5,1 5,3 4,5.5 L3.5,9Z" fill="#fff"/></svg>
<svg class="a" style="left:9.0px;top:145.0px" width="24" height="24" viewBox="-12.0 -12.0 24 24"><path d="M-10,-11 L-2,-7.5 L-4.5,-5.5 L0,-1 L-2,1 L-6.5,-3.5 L-8,-1Z" fill="#262626"/><path d="M2,-6 L4.7,-2.5 L3,-2.5 L3,0.8 L6.3,0.8 L6.3,-0.9 L9.8,1.8 L6.3,4.5 L6.3,2.8 L3,2.8 L3,6 L4.7,6 L2,9.5 L-0.7,6 L1,6 L1,2.8 L-2.3,2.8 L-2.3,4.5 L-5.8,1.8 L-2.3,-0.9 L-2.3,0.8 L1,0.8 L1,-2.5 L-0.7,-2.5Z" fill="#262626"/></svg>
<svg class="a" style="left:9.0px;top:171.0px" width="24" height="24" viewBox="-12.0 -12.0 24 24"><defs><linearGradient id="g4" x1="0" y1="0" x2="1" y2="1"><stop offset="0" stop-color="#fff"/><stop offset="1" stop-color="#ddd"/></linearGradient></defs><path d="M-10,0 L-2,-3.5 L5.5,0.5 L-1.5,7.5Z" fill="url(#g4)"/><path d="M0.5,-1.5 L7.5,-6 L6,-8 L10,-5.5 L9,0.5 L8,-2 L1.5,0.5Z" fill="#222" stroke="#eee" stroke-width="0.6"/></svg>
<svg class="a" style="left:9.0px;top:196.0px" width="24" height="24" viewBox="-12.0 -12.0 24 24"><polygon points="-1.0,-11.0 -0.1,-4.3 2.5,-7.1 1.4,-3.4 7.7,-6.0 2.3,-1.9 6.0,-1.0 2.3,-0.1 7.7,4.0 1.4,1.4 2.5,5.1 -0.1,2.3 -1.0,9.0 -1.9,2.3 -4.5,5.1 -3.4,1.4 -9.7,4.0 -4.3,-0.1 -8.0,-1.0 -4.3,-1.9 -9.7,-6.0 -3.4,-3.4 -4.5,-7.1 -1.9,-4.3" fill="#262626" stroke="#262626" stroke-width="0.5"/><defs><radialGradient id="sg"><stop offset="0" stop-color="#fff"/><stop offset=".6" stop-color="#e8e8e8"/><stop offset="1" stop-color="#999" stop-opacity="0.1"/></radialGradient></defs><circle cx="-1" cy="-1" r="4.6" fill="url(#sg)"/><path d="M2,2 L8.5,9" stroke="#222" stroke-width="2.6" stroke-linecap="round"/><path d="M2.5,2.5 L8.3,8.7" stroke="#e8e8e8" stroke-width="1.1" stroke-linecap="round"/></svg>
<svg class="a" style="left:9.0px;top:223.5px" width="24" height="24" viewBox="-12.0 -12.0 24 24"><rect x="-9.4" y="-6.8" width="19" height="13.6" fill="none" stroke="#2a2a2a" stroke-width="1.3" stroke-dasharray="3.4 1.6"/></svg>
<svg class="a" style="left:9.0px;top:250.0px" width="24" height="24" viewBox="-12.0 -12.0 24 24"><path d="M-5,8.5 L-3.8,3.5 L1.2,-4.5 L3.4,-3 L-1.5,5Z" fill="#e8e8e8" stroke="#222" stroke-width="1"/><path d="M-5,8.5 L-2.6,3.8 L2.4,-3.8" stroke="#222" stroke-width="1.6" fill="none"/><circle cx="3.5" cy="-6.5" r="2.7" fill="#555" stroke="#222" stroke-width="1"/><circle cx="2.9" cy="-7.2" r="0.9" fill="#aaa"/></svg>
<svg class="a" style="left:9.0px;top:276.0px" width="24" height="24" viewBox="-12.0 -12.0 24 24"><path d="M-3.5,-8 C-1,-9.5 1.5,-8.5 2,-6 L0.5,-3.5 L-3.8,-1.8 C-5.5,-3 -5.5,-6.5 -3.5,-8Z" fill="#999" stroke="#333" stroke-width="0.8"/><path d="M-3.8,-1.8 L0.5,-3.5 C3,-1 5,3 5.8,8.5 C2,5.5 -2,2 -3.8,-1.8Z" fill="#f2f2f2" stroke="#222" stroke-width="1.2"/><path d="M0,1 L5.8,8.5" stroke="#222" stroke-width="0.9"/><path d="M4,5.5 L5.8,8.5 L3,6.8Z" fill="#111"/></svg>
<svg class="a" style="left:9.0px;top:304.0px" width="24" height="24" viewBox="-12.0 -12.0 24 24"><path d="M-6.5,-7.5 L-2,-10 L2.5,-9 C4,-4 5,1 5.8,8.5 C1,5 -3.5,-1 -6.5,-7.5Z" fill="#fafafa" stroke="#555" stroke-width="0.8"/><path d="M-4,-9 L-0.5,-2.5 M-0.8,-9.8 L2.2,-3" stroke="#555" stroke-width="1.2"/><path d="M1.5,3.5 C3,3 4,2.5 4.8,2 L5.8,8.5Z" fill="#111"/></svg>
<svg class="a" style="left:9.0px;top:333.0px" width="24" height="24" viewBox="-12.0 -12.0 24 24"><path d="M-8.5,0.5 C-9,3 -7,5.5 -4,7.5 L9.5,8 L5.5,2 L-4,1.5Z" fill="#f7b48a"/><path d="M-8.3,1 C-8,-1.5 -5,-2.5 -3,-1 L-2,3 C-4,4 -7,4 -8.3,1Z" fill="#fbd9c4"/><path d="M-3,-0.5 L5.5,-8" stroke="#333" stroke-width="3.4" stroke-linecap="round"/><path d="M-2.5,-1 L5,-7.6" stroke="#999" stroke-width="1.2" stroke-linecap="round"/><circle cx="-2.8" cy="0.2" r="2.2" fill="#f4f4f4" stroke="#444" stroke-width="0.7"/><path d="M-2,2 L0,6" stroke="#fff" stroke-width="0.9"/></svg>
<svg class="a" style="left:9.0px;top:359.0px" width="24" height="24" viewBox="-12.0 -12.0 24 24"><path d="M0,-1 L9.5,-8 L9.5,6Z" fill="#9a9b9f"/><path d="M0,-1 L9.5,-8 M0,-1 L9.5,6" stroke="#333" stroke-width="1"/><rect x="-4.5" y="-4.5" width="4" height="5" fill="#555" stroke="#222" stroke-width="0.8"/><path d="M-8.5,3 C-8.5,-0.5 -6,-1.5 -2.5,-1.5 C1,-1.5 3.6,-0.5 3.6,3 L3.6,7.5 C3.6,10 -8.5,10 -8.5,7.5Z" fill="#f4f4f4" stroke="#444" stroke-width="0.8"/><path d="M-8.5,4.5 C-6,6.2 1,6.2 3.6,4.5" stroke="#666" stroke-width="1" fill="none"/><path d="M-8.3,6.5 C-6,9 1,9 3.4,6.5 L3.4,8 C1,10 -6,10 -8.3,8Z" fill="#bbb"/></svg>
<svg class="a" style="left:9.0px;top:385.0px" width="24" height="24" viewBox="-12.0 -12.0 24 24"><defs><linearGradient id="g12" x1="0" y1="0" x2="0" y2="1"><stop offset="0" stop-color="#fff"/><stop offset=".6" stop-color="#eee"/><stop offset="1" stop-color="#666"/></linearGradient></defs><rect x="2.5" y="-7.5" width="4" height="6" fill="#555" stroke="#333" stroke-width="0.6"/><path d="M-9,0 L-1.5,-7.5 L3.5,-1.5 L9,-0.5 L8,0.5 L8,6.5 L-7,6.5 L-7,0.8Z" fill="url(#g12)" stroke="#444" stroke-width="0.7"/><path d="M3.2,-1.6 L3.2,6.5" stroke="#666" stroke-width="0.7"/><rect x="-3.5" y="2.5" width="2.5" height="4" fill="#555"/><rect x="4.5" y="2" width="2.5" height="2" fill="#444"/></svg>
<svg class="a" style="left:9.0px;top:411.0px" width="24" height="24" viewBox="-12.0 -12.0 24 24"><defs><linearGradient id="g13" x1="0" y1="0" x2="1" y2="0"><stop offset="0" stop-color="#111"/><stop offset=".3" stop-color="#333"/><stop offset=".6" stop-color="#eee"/><stop offset="1" stop-color="#fff"/></linearGradient></defs><path d="M-5,-8.5 C-3,-4.5 -1,-2.5 -0.5,-2 C0,-3 2.5,-5.5 4,-8.5 C6,-4 9.5,-0.5 9.3,2.8 C9,5.5 6.5,6.8 4,6.6 C2,6.5 0.5,5.5 -0.2,4.5 C-1,5.8 -3,6.8 -5,6.6 C-8,6.3 -9.6,4.5 -9.3,2 C-9,-1.5 -6.5,-4.5 -5,-8.5Z" fill="url(#g13)"/></svg>
<svg class="a" style="left:9.0px;top:437.0px" width="24" height="24" viewBox="-12.0 -12.0 24 24"><defs><linearGradient id="g14" x1="0" y1="0" x2="1" y2="1"><stop offset="0" stop-color="#fff"/><stop offset=".6" stop-color="#ddd"/><stop offset="1" stop-color="#777"/></linearGradient></defs><path d="M-4,-1.5 L4.5,-5.5 L9,2.5 L1,8 L-3.5,6.5 L-5.5,1.5Z" fill="url(#g14)" stroke="#444" stroke-width="0.8"/><path d="M-4,-1.5 C-7,-1 -9,2 -9.3,5 C-7.5,3.5 -6.5,1.5 -4.8,0.8Z" fill="#222"/><path d="M-1.5,-2 C-1.5,-7 3,-9.5 6.5,-8 C8.5,-7 7.5,-5.5 6,-6 C3.5,-7 0.8,-5 1,-2.5" fill="none" stroke="#222" stroke-width="1.6"/><path d="M0,-3 L2.6,-7 L4.5,-6 L2,-2Z" fill="#eee" stroke="#333" stroke-width="0.6"/></svg>
<svg class="a" style="left:9.0px;top:463.0px" width="24" height="24" viewBox="-12.0 -12.0 24 24"><path d="M-8.6,8.4 L8.5,-7.7" stroke="#222" stroke-width="1.6"/></svg>
<svg class="a" style="left:9.0px;top:489.0px" width="24" height="24" viewBox="-12.0 -12.0 24 24"><defs><linearGradient id="g16" x1="0" y1="0" x2="1" y2="1"><stop offset="0" stop-color="#fff"/><stop offset=".45" stop-color="#6a6060"/><stop offset=".8" stop-color="#0a0808"/><stop offset="1" stop-color="#000"/></linearGradient></defs><rect x="-7.6" y="-7.6" width="15.3" height="15" fill="url(#g16)" stroke="#4a4a4a" stroke-width="1.2"/></svg>
<svg class="a" style="left:9.0px;top:515.0px" width="24" height="24" viewBox="-12.0 -12.0 24 24"><defs><linearGradient id="g17" x1="0" y1="0" x2="0" y2="1"><stop offset="0" stop-color="#aaa"/><stop offset=".5" stop-color="#f4f4f4"/><stop offset="1" stop-color="#fff"/></linearGradient></defs><path d="M-4.5,-8.5 L5,-9 C7,-8.5 7.8,-7 7.3,-5.5 L4,3.5 L-7.5,2.5Z" fill="url(#g17)" stroke="#555" stroke-width="0.7"/><path d="M-7.5,2.5 L4,3.5 L2.5,7.5 C0,8.5 -5,8.2 -7.5,7 C-8.3,5.5 -8,4 -7.5,2.5Z" fill="#fff" stroke="#555" stroke-width="0.7"/><path d="M4,3.5 L2.5,7.5" stroke="#222" stroke-width="1.2"/></svg>
<div class="a" style="left:8px;top:541px;width:26px;text-align:center;font-family:'Liberation Serif',serif;font-size:27px;line-height:30px;color:#222;font-weight:bold">A</div>
<svg class="a" style="left:9.0px;top:570.0px" width="24" height="24" viewBox="-12.0 -12.0 24 24"><path d="M-9,-2 L-1,2.5 L-9,7Z" fill="#333"/><path d="M-1,2.5 L9,4.5" stroke="#9a9a9a" stroke-width="1.2"/><path d="M-1,2.5 L-0.5,-9.5" stroke="#222" stroke-width="1.3"/><path d="M0.8,-9 L1,2" stroke="#f4f4f4" stroke-width="1.6"/></svg>
<svg class="a" style="left:272.0px;top:49.0px" width="24" height="24" viewBox="-12.0 -12.0 24 24"><path d="M-5,-7 L2,-7 L6,-3 L6,8 L-5,8Z" fill="#fff" stroke="#222" stroke-width="1.2"/><path d="M2,-7 L2,-3 L6,-3" fill="#ddd" stroke="#222" stroke-width="1"/><path d="M-6,-10 L-6,-4 M-9,-7 L-3,-7 M-8,-9 L-4,-5 M-8,-5 L-4,-9" stroke="#111" stroke-width="1"/></svg>
<svg class="a" style="left:296.0px;top:49.0px" width="24" height="24" viewBox="-12.0 -12.0 24 24"><path d="M-8,7 L-8,-4 L-4,-4 L-3,-2.5 L4,-2.5 L4,0" fill="#999" stroke="#222" stroke-width="1.1"/><path d="M-8,7 L-5,0 L8,0 L5,7Z" fill="#c8c8c8" stroke="#222" stroke-width="1.1"/><path d="M1,-5.5 C3,-8.5 6,-8.5 8,-6" fill="none" stroke="#111" stroke-width="1.5"/><path d="M9.3,-8.5 L9,-4 L5.5,-5.8Z" fill="#111"/></svg>
<svg class="a" style="left:320.0px;top:49.0px" width="24" height="24" viewBox="-12.0 -12.0 24 24"><defs><linearGradient id="sv" x1="0" y1="0" x2="0" y2="1"><stop offset="0" stop-color="#cfe0f0"/><stop offset="1" stop-color="#fff"/></linearGradient></defs><rect x="-8.5" y="-8.5" width="17" height="17" fill="#222"/><rect x="-6" y="-8" width="12" height="11" fill="url(#sv)"/><rect x="-5" y="5" width="10" height="2.5" fill="#888"/></svg>
<div class="a" style="left:348px;top:51px;width:1px;height:20px;background:#5e5f63;box-shadow:1px 0 0 #85868a"></div>
<svg class="a" style="left:352.0px;top:49.0px" width="24" height="24" viewBox="-12.0 -12.0 24 24"><path d="M-3,3 L3,3 C8,3 8,-4.5 3,-4.5 L-2,-4.5" fill="none" stroke="#262626" stroke-width="2.4"/><path d="M-9,3 L-3,-1.5 L-3,7.5Z" fill="#262626"/></svg>
<svg class="a" style="left:376.0px;top:49.0px" width="24" height="24" viewBox="-12.0 -12.0 24 24"><path d="M3,-1.5 L-2,-1.5 C-7,-1.5 -7,5 -2,5 L3,5" fill="none" stroke="#696a6e" stroke-width="2.2" stroke-dasharray="7 0"/><path d="M8.5,-1.5 L2.5,-6 L2.5,3Z" fill="#696a6e"/></svg>
<div class="a" style="left:404px;top:51px;width:1px;height:20px;background:#5e5f63;box-shadow:1px 0 0 #85868a"></div>
<svg class="a" style="left:408.0px;top:49.0px" width="24" height="24" viewBox="-12.0 -12.0 24 24"><circle cx="6.2" cy="1.3" r="1.9" fill="#262626"/><circle cx="2.9" cy="5.6" r="1.9" fill="#262626"/><circle cx="-2.6" cy="5.7" r="1.9" fill="#262626"/><circle cx="-6.1" cy="1.6" r="1.9" fill="#262626"/><circle cx="-5.0" cy="-3.8" r="1.9" fill="#262626"/><circle cx="-0.2" cy="-6.3" r="1.9" fill="#262626"/><circle cx="4.8" cy="-4.0" r="1.9" fill="#262626"/></svg>
<svg class="a" style="left:432.0px;top:49.0px" width="24" height="24" viewBox="-12.0 -12.0 24 24"><rect x="-8.5" y="-8.5" width="17" height="17" rx="2" fill="#85868a"/><path d="M-4,-8 L4,-8 L4,-4 L8,-4 L8,4 L4,4 L4,8 L-4,8 L-4,4 L-8,4 L-8,-4 L-4,-4Z" fill="#9a9b9f"/><rect x="-4.5" y="-4.5" width="9" height="9" fill="#a8a9ad" stroke="#6a6b6f" stroke-width="0.8" stroke-dasharray="1.5 1"/></svg>
<svg class="a" style="left:456.0px;top:49.0px" width="24" height="24" viewBox="-12.0 -12.0 24 24"><path d="M-3,-2 L4,-6 L8.5,2 L1,7.5 L-3.5,6Z" fill="#f2f2f2" stroke="#444" stroke-width="0.8"/><path d="M-3,-2.5 C-6,-2 -8.5,1 -9,4.5 C-7,3 -6,1 -4,0Z" fill="#1a1a1a"/><path d="M-1.5,-3 C-1,-7 3,-9 6,-7.5" fill="none" stroke="#1a1a1a" stroke-width="1.8"/><path d="M0.5,-3.5 L3,-7.5 L5,-6.5 L2.5,-2.5Z" fill="#eee" stroke="#333" stroke-width="0.6"/></svg>
<svg class="a" style="left:480.0px;top:49.0px" width="24" height="24" viewBox="-12.0 -12.0 24 24"><circle cx="0" cy="0" r="4.2" fill="none" stroke="#262626" stroke-width="2.2"/><path d="M-3,-3 L-8,-8 M3,-3 L8,-8 M-3,3 L-8,8 M3,3 L8,8" stroke="#262626" stroke-width="2.2"/><path d="M-9,-9 L-4.5,-9 L-9,-4.5Z M9,-9 L4.5,-9 L9,-4.5Z M-9,9 L-4.5,9 L-9,4.5Z M9,9 L4.5,9 L9,4.5Z" fill="#262626"/></svg>
<div class="a" style="left:509px;top:51px;width:1px;height:20px;background:#5e5f63;box-shadow:1px 0 0 #85868a"></div>
<svg class="a" style="left:512.0px;top:49.0px" width="24" height="24" viewBox="-12.0 -12.0 24 24"><rect x="-6" y="-5" width="12" height="11" fill="none" stroke="#696a6e" stroke-width="1.2" stroke-dasharray="2 1.4"/><path d="M-8,8 L8,-8" stroke="#696a6e" stroke-width="1.4"/></svg>
<svg class="a" style="left:536.0px;top:49.0px" width="24" height="24" viewBox="-12.0 -12.0 24 24"><rect x="-7" y="-7" width="14" height="14" fill="none" stroke="#696a6e" stroke-width="1.1" stroke-dasharray="2 1.4"/><path d="M-7,7 L7,-7 L7,7Z" fill="#696a6e" opacity=".8"/></svg>
<div class="a" style="left:561px;top:50px;width:22px;height:22px;background:linear-gradient(#6e6f73,#7c7d81);border:1px solid #56575b;border-radius:3px"></div>
<svg class="a" style="left:560.0px;top:49.0px" width="24" height="24" viewBox="-12.0 -12.0 24 24"><rect x="-7" y="-7" width="14" height="14" fill="#fff" stroke="#111" stroke-width="2.2" stroke-dasharray="2.2 1.6"/></svg>
<div class="a" style="left:588px;top:51px;width:1px;height:20px;background:#5e5f63;box-shadow:1px 0 0 #85868a"></div>
<svg class="a" style="left:591.0px;top:49.0px" width="24" height="24" viewBox="-12.0 -12.0 24 24"><path d="M-7,7 L-7,-3 L6,7" fill="none" stroke="#222" stroke-width="1.6"/><path d="M-8,3 L-8,8.5 L2,8.5" fill="none" stroke="#2a86e0" stroke-width="1.5"/><path d="M6,-9 L8,-9 L8,3 L7,7 L6,3Z" fill="#eee" stroke="#222" stroke-width="0.9"/></svg>
<svg class="a" style="left:616.0px;top:49.0px" width="24" height="24" viewBox="-12.0 -12.0 24 24"><path d="M-8,7 C-6,1 -2,-1 5,-1" fill="none" stroke="#222" stroke-width="1.6"/><path d="M-8,7.5 L9,7.5" stroke="#222" stroke-width="1.5"/><path d="M3,8.7 L9,8.7" stroke="#2a86e0" stroke-width="1.5"/><path d="M6,-9 L8,-9 L8,3 L7,7 L6,3Z" fill="#eee" stroke="#222" stroke-width="0.9"/></svg>
<svg class="a" style="left:640.0px;top:49.0px" width="24" height="24" viewBox="-12.0 -12.0 24 24"><path d="M-3,-8 L-3,9 M5,-8 L5,9 M-9,-2 L9,-2 M-9,5 L9,5" stroke="#2a86e0" stroke-width="1.5"/><path d="M-1,-10 L3,-10 L3,2 L1,6 L-1,2Z" fill="#eee" stroke="#222" stroke-width="0.9"/><path d="M1,-10 L1,2" stroke="#222" stroke-width="0.8"/></svg>
<div class="a" style="left:669px;top:51px;width:1px;height:20px;background:#5e5f63;box-shadow:1px 0 0 #85868a"></div>
<svg class="a" style="left:671.0px;top:49.0px" width="24" height="24" viewBox="-12.0 -12.0 24 24"><defs><linearGradient id="vr" x1="0" y1="0" x2="0" y2="1"><stop offset="0" stop-color="#555"/><stop offset="1" stop-color="#ccc"/></linearGradient></defs><rect x="-7.5" y="-1.5" width="15" height="8.5" fill="url(#vr)" stroke="#222" stroke-width="1.2"/><path d="M-8,-4 L-8,-8 L-5,-8 M8,-4 L8,-8 L5,-8 M-1.5,-6.5 L0,-8 L1.5,-6.5" fill="none" stroke="#222" stroke-width="1.1"/></svg>
<svg class="a" style="left:698px;top:59px;" width="9" height="6" viewBox="0 0 9 6"><path d="M0,0 L9,0 L4.5,5Z" fill="#4a4a4a"/></svg>
<div class="a" style="left:715px;top:51px;width:1px;height:20px;background:#5e5f63;box-shadow:1px 0 0 #85868a"></div>
<svg class="a" style="left:718.0px;top:49.0px" width="24" height="24" viewBox="-12.0 -12.0 24 24"><circle cx="0" cy="0" r="9" fill="#2a2a2a"/><path d="M-3,-2.5 C-3,-6.5 3,-6.5 3,-2.8 C3,-0.5 0,-0.5 0,2" fill="none" stroke="#fff" stroke-width="2.2"/><rect x="-1.2" y="4" width="2.4" height="2.4" fill="#fff"/></svg>
<div class="a" style="left:747px;top:51px;width:1px;height:20px;background:#5e5f63;box-shadow:1px 0 0 #85868a"></div>
<svg class="a" style="left:750.0px;top:49.0px" width="24" height="24" viewBox="-12.0 -12.0 24 24"><path d="M-5,3 C-6,-5 4,-8 6.5,0 C7,3 6.5,5 6,6.5" fill="none" stroke="#262626" stroke-width="2.4"/><path d="M-9.5,1 L-1,1.5 L-5.5,8Z" fill="#262626"/></svg>
<svg class="a" style="left:774.0px;top:49.0px" width="24" height="24" viewBox="-12.0 -12.0 24 24"><path d="M5,3 C6,-5 -4,-8 -6.5,0 C-7,3 -6.5,5 -6,6.5" fill="none" stroke="#262626" stroke-width="2.4"/><path d="M9.5,1 L1,1.5 L5.5,8Z" fill="#262626"/></svg>
<svg class="a" style="left:798.0px;top:49.0px" width="24" height="24" viewBox="-12.0 -12.0 24 24"><g transform="scale(0.86)"><path d="M-3.3,-8 L3.3,-8 L8,-3.3 L8,3.3 L3.3,8 L-3.3,8 L-8,3.3 L-8,-3.3Z" fill="#fff" stroke="#111" stroke-width="1.6"/><path d="M0,0 L-7,-4 L-7,4Z M0,0 L7,-4 L7,4Z" fill="#111"/><path d="M0,-7 L0,7" stroke="#111" stroke-width="1"/><circle cx="0" cy="0" r="1.6" fill="#111"/></g></svg>
<svg class="a" style="left:822.0px;top:49.0px" width="24" height="24" viewBox="-12.0 -12.0 24 24"><g transform="scale(0.86)"><path d="M-3.3,-8 L3.3,-8 L8,-3.3 L8,3.3 L3.3,8 L-3.3,8 L-8,3.3 L-8,-3.3Z" fill="#fff" stroke="#111" stroke-width="1.6"/><path d="M0,-7 L0,7 M-7,0 L7,0" stroke="#111" stroke-width="1.2"/><path d="M0,0 L-4.5,0 L-4.5,-0 A4.5,4.5 0 0 1 0,-4.5Z M0,0 L4.5,0 A4.5,4.5 0 0 1 0,4.5Z" fill="#111"/></g></svg>
<svg class="a" style="left:846.0px;top:49.0px" width="24" height="24" viewBox="-12.0 -12.0 24 24"><g transform="scale(0.9)"><path d="M-6,-2 C-5,-9 5,-9 6,-3" fill="none" stroke="#262626" stroke-width="2.2"/><path d="M9,-5 L6,1 L2.5,-4Z" fill="#262626"/><path d="M0,-4 L0,9" stroke="#262626" stroke-width="1.2" stroke-dasharray="1.5 1.2"/><path d="M-8,1 L-2,5 L-8,9Z" fill="#fff"/><path d="M8,1 L2,5 L8,9Z" fill="#262626"/></g></svg>
<svg class="a" style="left:870.0px;top:49.0px" width="24" height="24" viewBox="-12.0 -12.0 24 24"><g transform="scale(0.9)"><path d="M-1,-7 C-9,-7 -9,4 -3,5" fill="none" stroke="#262626" stroke-width="2.2"/><path d="M-4,1.5 L-0.5,5.5 L-5.5,7.5Z" fill="#262626"/><path d="M-1,0 L10,0" stroke="#262626" stroke-width="1.2" stroke-dasharray="1.5 1.2"/><path d="M0,-9 L9,-9 L4.5,-3Z" fill="#262626"/><path d="M0,9 L9,9 L4.5,3Z" fill="#fff"/></g></svg>
<svg class="a" style="left:28px;top:53px;" width="12" height="12" viewBox="0 0 12 12"><path d="M5.5,0 L1.5,5.75 L5.5,11.5 M11,0 L7,5.75 L11,11.5" fill="none" stroke="#8c8d91" stroke-width="2.8"/></svg>
<svg class="a" style="left:258px;top:53px;" width="12" height="12" viewBox="0 0 12 12"><path d="M5.5,0 L1.5,5.75 L5.5,11.5 M11,0 L7,5.75 L11,11.5" fill="none" stroke="#8c8d91" stroke-width="2.8"/></svg>
<svg class="a" style="left:1552px;top:53px;" width="12" height="12" viewBox="0 0 12 12"><path d="M5.5,0 L1.5,5.75 L5.5,11.5 M11,0 L7,5.75 L11,11.5" fill="none" stroke="#8c8d91" stroke-width="2.8"/></svg>
<svg class="a" style="left:1566px;top:53px;" width="12" height="12" viewBox="0 0 12 12"><path d="M5.5,0 L1.5,5.75 L5.5,11.5 M11,0 L7,5.75 L11,11.5" fill="none" stroke="#8c8d91" stroke-width="2.8"/></svg>
<svg class="a" style="left:1580px;top:53px;" width="12" height="12" viewBox="0 0 12 12"><path d="M1,0 L5,5.75 L1,11.5 M6.5,0 L10.5,5.75 L6.5,11.5" fill="none" stroke="#8c8d91" stroke-width="2.8"/></svg>
<div class="a" style="left:1867.1px;top:4.2px;width:15px;height:15px;border-radius:50%;background:radial-gradient(circle at 50% 20%,#555 0,#2a2a2a 45%,#111 100%)"></div>
<div class="a" style="left:1885.2px;top:4.2px;width:15px;height:15px;border-radius:50%;background:radial-gradient(circle at 50% 20%,#555 0,#2a2a2a 45%,#111 100%)"></div>
<div class="a" style="left:1903.1px;top:4.2px;width:15px;height:15px;border-radius:50%;background:radial-gradient(circle at 50% 20%,#555 0,#2a2a2a 45%,#111 100%)"></div>
<div class="a" style="left:1869.5px;top:14.5px;width:10.5px;height:1.8px;background:#f0f0f0"></div>
<div class="a" style="left:1888px;top:7px;width:9.5px;height:9.5px;border:1.6px solid #e8e8e8;border-top-width:2px;background:linear-gradient(#888 0,#888 30%,#111 30%)"></div>
<svg class="a" style="left:1906px;top:7px;" width="10" height="10" viewBox="0 0 10 10"><path d="M1,1 L9,9 M9,1 L1,9" stroke="#f0f0f0" stroke-width="2"/></svg>
<div class="a" style="left:67px;top:73px;width:16px;height:16px;border-radius:50%;background:conic-gradient(from 0deg,#ffe000,#40d000 20%,#00a040 30%,#0040ff 45%,#2000c0 55%,#c00080 68%,#ff0000 80%,#ff8000 92%,#ffe000);box-shadow:0 1px 1px rgba(255,255,255,.7)"></div>
<div class="a" style="left:72.3px;top:78.3px;width:5.4px;height:5.4px;border-radius:50%;background:#909094"></div>
<svg class="a" style="left:62.0px;top:293.0px" width="24" height="24" viewBox="-12.0 -12.0 24 24"><g transform="translate(-5,0)"><path d="M0,-9 C-2,-4 -2.5,1 -1.5,5 L1.5,5 C2.5,1 2,-4 0,-9Z" fill="#ddd" stroke="#111" stroke-width="1"/><path d="M-3.5,7.5 L3.5,7.5 L2,5 L-2,5Z" fill="#111"/><ellipse cx="0" cy="0" rx="0.9" ry="3" fill="#555"/></g><path d="M1,-7 L1,6 M1,-6 L4,-6 M1,0 L4,0 M1,6 L4,6" stroke="#111" stroke-width="1" fill="none"/><rect x="4.5" y="-7.5" width="3" height="3" fill="#eee" stroke="#111" stroke-width="0.8"/><rect x="4.5" y="-1.5" width="3" height="3" fill="#eee" stroke="#111" stroke-width="0.8"/><rect x="4.5" y="4.5" width="3" height="3" fill="#eee" stroke="#111" stroke-width="0.8"/></svg>
<svg class="a" style="left:62.0px;top:520.0px" width="24" height="24" viewBox="-12.0 -12.0 24 24"><g transform="translate(-5,0)"><path d="M0,-9 C-2,-4 -2.5,1 -1.5,5 L1.5,5 C2.5,1 2,-4 0,-9Z" fill="#ddd" stroke="#111" stroke-width="1"/><path d="M-3.5,7.5 L3.5,7.5 L2,5 L-2,5Z" fill="#111"/><ellipse cx="0" cy="0" rx="0.9" ry="3" fill="#555"/></g><circle cx="5" cy="1" r="3.2" fill="#111"/><circle cx="5" cy="1" r="1.1" fill="#888"/><path d="M5,-3.6 L5,5.6 M0.4,1 L9.6,1 M1.7,-2.3 L8.3,4.3 M8.3,-2.3 L1.7,4.3" stroke="#111" stroke-width="1.2"/></svg>
<svg class="a" style="left:62.0px;top:734.0px" width="24" height="24" viewBox="-12.0 -12.0 24 24"><g transform="translate(-5,0)"><path d="M0,-9 C-2,-4 -2.5,1 -1.5,5 L1.5,5 C2.5,1 2,-4 0,-9Z" fill="#ddd" stroke="#111" stroke-width="1"/><path d="M-3.5,7.5 L3.5,7.5 L2,5 L-2,5Z" fill="#111"/><ellipse cx="0" cy="0" rx="0.9" ry="3" fill="#555"/></g><path d="M1,-7 L1,6 M1,-6 L4,-6 M1,0 L4,0 M1,6 L4,6" stroke="#111" stroke-width="1" fill="none"/><circle cx="6" cy="-6.5" r="1.2" fill="#111"/><circle cx="6" cy="-0.5" r="1.8" fill="#111"/><circle cx="6.2" cy="6" r="2.6" fill="#111"/></svg>
<div class="a" style="left:66px;top:884px;width:18px;height:2px;background:linear-gradient(90deg,#4a4a4a,#8a8a8a)"></div>
<div class="a" style="left:66px;top:888px;width:18px;height:2px;background:linear-gradient(90deg,#4a4a4a,#8a8a8a)"></div>
<div class="a" style="left:66px;top:892px;width:18px;height:1.5px;background:linear-gradient(90deg,#4a4a4a,#8a8a8a)"></div>
<div class="a" style="left:96.0px;top:881.0px;width:4.6px;height:4.6px;background:#c01010"></div>
<div class="a" style="left:101.2px;top:881.0px;width:4.6px;height:4.6px;background:#101080"></div>
<div class="a" style="left:106.4px;top:881.0px;width:4.6px;height:4.6px;background:#c01010"></div>
<div class="a" style="left:96.0px;top:886.2px;width:4.6px;height:4.6px;background:#e0c000"></div>
<div class="a" style="left:101.2px;top:886.2px;width:4.6px;height:4.6px;background:#d03030"></div>
<div class="a" style="left:106.4px;top:886.2px;width:4.6px;height:4.6px;background:#e0c000"></div>
<div class="a" style="left:96.0px;top:891.4px;width:4.6px;height:4.6px;background:#108010"></div>
<div class="a" style="left:101.2px;top:891.4px;width:4.6px;height:4.6px;background:#101010"></div>
<div class="a" style="left:106.4px;top:891.4px;width:4.6px;height:4.6px;background:#108010"></div>
<div class="a" style="left:100.2px;top:885.2px;width:6.4px;height:6.4px;border:1px solid #fff;background:#b02020;outline:1px solid #203080"></div>
<svg class="a" style="left:160.0px;top:875.0px" width="24" height="24" viewBox="-12.0 -12.0 24 24"><rect x="-8" y="-6" width="6" height="5" fill="none" stroke="#55565a" stroke-width="1.2"/><rect x="1" y="-6" width="6" height="5" fill="none" stroke="#55565a" stroke-width="1.2"/><path d="M-5,-1 L-5,4 M4,-1 L4,2 M-1,-3.5 L1,-3.5" stroke="#55565a" stroke-width="1.2"/><rect x="-7" y="2" width="5" height="4" fill="#55565a"/><rect x="2" y="2" width="5" height="3" fill="#55565a"/></svg>
<svg class="a" style="left:46.0px;top:318.0px" width="22" height="22" viewBox="-11.0 -11.0 22 22"><polygon points="-1.0,-9.6 -0.2,-3.8 2.0,-6.2 1.1,-3.1 6.4,-5.3 1.8,-1.8 5.0,-1.0 1.8,-0.2 6.4,3.3 1.1,1.1 2.0,4.2 -0.2,1.8 -1.0,7.6 -1.8,1.8 -4.0,4.2 -3.1,1.1 -8.4,3.3 -3.8,-0.2 -7.0,-1.0 -3.8,-1.8 -8.4,-5.3 -3.1,-3.1 -4.0,-6.2 -1.8,-3.8" fill="#262626" stroke="#262626" stroke-width="0.5"/><circle cx="-1" cy="-1" r="3.9" fill="url(#sg)"/><path d="M1.5,1.5 L7,7.5" stroke="#222" stroke-width="2.2" stroke-linecap="round"/><path d="M2,2 L6.8,7.2" stroke="#e8e8e8" stroke-width="0.9" stroke-linecap="round"/></svg>
<svg class="a" style="left:46.0px;top:346.0px" width="22" height="22" viewBox="-11.0 -11.0 22 22"><polygon points="-1.0,-9.6 -0.2,-3.8 2.0,-6.2 1.1,-3.1 6.4,-5.3 1.8,-1.8 5.0,-1.0 1.8,-0.2 6.4,3.3 1.1,1.1 2.0,4.2 -0.2,1.8 -1.0,7.6 -1.8,1.8 -4.0,4.2 -3.1,1.1 -8.4,3.3 -3.8,-0.2 -7.0,-1.0 -3.8,-1.8 -8.4,-5.3 -3.1,-3.1 -4.0,-6.2 -1.8,-3.8" fill="#262626" stroke="#262626" stroke-width="0.5"/><circle cx="-1" cy="-1" r="3.9" fill="url(#sg)"/><path d="M1.5,1.5 L7,7.5" stroke="#222" stroke-width="2.2" stroke-linecap="round"/><path d="M2,2 L6.8,7.2" stroke="#e8e8e8" stroke-width="0.9" stroke-linecap="round"/></svg>
<svg class="a" style="left:46.0px;top:382.0px" width="22" height="22" viewBox="-11.0 -11.0 22 22"><polygon points="-1.0,-9.6 -0.2,-3.8 2.0,-6.2 1.1,-3.1 6.4,-5.3 1.8,-1.8 5.0,-1.0 1.8,-0.2 6.4,3.3 1.1,1.1 2.0,4.2 -0.2,1.8 -1.0,7.6 -1.8,1.8 -4.0,4.2 -3.1,1.1 -8.4,3.3 -3.8,-0.2 -7.0,-1.0 -3.8,-1.8 -8.4,-5.3 -3.1,-3.1 -4.0,-6.2 -1.8,-3.8" fill="#262626" stroke="#262626" stroke-width="0.5"/><circle cx="-1" cy="-1" r="3.9" fill="url(#sg)"/><path d="M1.5,1.5 L7,7.5" stroke="#222" stroke-width="2.2" stroke-linecap="round"/><path d="M2,2 L6.8,7.2" stroke="#e8e8e8" stroke-width="0.9" stroke-linecap="round"/></svg>
<svg class="a" style="left:46.0px;top:418.0px" width="22" height="22" viewBox="-11.0 -11.0 22 22"><polygon points="-1.0,-9.6 -0.2,-3.8 2.0,-6.2 1.1,-3.1 6.4,-5.3 1.8,-1.8 5.0,-1.0 1.8,-0.2 6.4,3.3 1.1,1.1 2.0,4.2 -0.2,1.8 -1.0,7.6 -1.8,1.8 -4.0,4.2 -3.1,1.1 -8.4,3.3 -3.8,-0.2 -7.0,-1.0 -3.8,-1.8 -8.4,-5.3 -3.1,-3.1 -4.0,-6.2 -1.8,-3.8" fill="#262626" stroke="#262626" stroke-width="0.5"/><circle cx="-1" cy="-1" r="3.9" fill="url(#sg)"/><path d="M1.5,1.5 L7,7.5" stroke="#222" stroke-width="2.2" stroke-linecap="round"/><path d="M2,2 L6.8,7.2" stroke="#e8e8e8" stroke-width="0.9" stroke-linecap="round"/></svg>
<svg class="a" style="left:231.0px;top:499.0px" width="20" height="20" viewBox="-10.0 -10.0 20 20"><path d="M-6,-7 L6,-7 L6,3 L2,7.5 L-6,7.5Z" fill="#fff" stroke="#333" stroke-width="1"/><path d="M6,3 L2,3 L2,7.5Z" fill="#444"/></svg>
<svg class="a" style="left:250.5px;top:499.0px" width="20" height="20" viewBox="-10.0 -10.0 20 20"><path d="M-5,-3.5 L-3.8,7 L3.8,7 L5,-3.5Z" fill="#f4f4f4" stroke="#222" stroke-width="1"/><ellipse cx="0" cy="-3.5" rx="5.5" ry="1.8" fill="#f4f4f4" stroke="#222" stroke-width="1"/><path d="M-3,-5 C-2,-8 2,-8 3,-5" fill="none" stroke="#222" stroke-width="1.1"/><path d="M-2.2,-0.5 L-1.6,5.5 M0,-0.5 L0,5.5 M2.2,-0.5 L1.6,5.5" stroke="#555" stroke-width="0.9"/></svg>
<svg class="a" style="left:250.0px;top:562.0px" width="20" height="20" viewBox="-10.0 -10.0 20 20"><circle cx="-1" cy="-1" r="6" fill="#fff" stroke="#222" stroke-width="1.2"/><path d="M3,3.5 L7,8" stroke="#222" stroke-width="2.4" stroke-linecap="round"/><path d="M-4.5,-2.5 C-4,-5 -1,-5 0,-3 L3,1.5 L1.5,2.5 L-1.5,-1.5 C-3,-0.5 -4.5,-1 -4.5,-2.5Z" fill="#444"/></svg>
<svg class="a" style="left:230.5px;top:713.5px" width="20" height="20" viewBox="-10.0 -10.0 20 20"><path d="M-1.8,-8 L2.2,-6.8 L-1,-4.8Z" fill="#2c2c2c" transform="rotate(0)"/><path d="M-1.8,-8 L2.2,-6.8 L-1,-4.8Z" fill="#2c2c2c" transform="rotate(45)"/><path d="M-1.8,-8 L2.2,-6.8 L-1,-4.8Z" fill="#2c2c2c" transform="rotate(90)"/><path d="M-1.8,-8 L2.2,-6.8 L-1,-4.8Z" fill="#2c2c2c" transform="rotate(135)"/><path d="M-1.8,-8 L2.2,-6.8 L-1,-4.8Z" fill="#2c2c2c" transform="rotate(180)"/><path d="M-1.8,-8 L2.2,-6.8 L-1,-4.8Z" fill="#2c2c2c" transform="rotate(225)"/><path d="M-1.8,-8 L2.2,-6.8 L-1,-4.8Z" fill="#2c2c2c" transform="rotate(270)"/><path d="M-1.8,-8 L2.2,-6.8 L-1,-4.8Z" fill="#2c2c2c" transform="rotate(315)"/></svg>
<svg class="a" style="left:252.0px;top:712.0px" width="20" height="20" viewBox="-10.0 -10.0 20 20"><path d="M-5,-7.5 C-7.5,-6 -7.5,-2 -4.5,-0.8 L-1.8,-0.3 L-1.8,8 L1.8,8 L1.8,-0.3 L4.5,-0.8 C7.5,-2 7.5,-6 5,-7.5 L5,-3.8 L2.5,-2.6 L2.5,-7 L-2.5,-7 L-2.5,-2.6 L-5,-3.8Z" fill="#f0f0f0" stroke="#222" stroke-width="1"/></svg>
<svg class="a" style="left:141.5px;top:588.0px" width="20" height="20" viewBox="-10.0 -10.0 20 20"><rect x="-7" y="-7" width="14" height="14" fill="#1766d0" stroke="#0b3f8a" stroke-width="1"/></svg>
<svg class="a" style="left:168.0px;top:588.0px" width="20" height="20" viewBox="-10.0 -10.0 20 20"><rect x="-8" y="-8" width="10" height="10" fill="#1766d0" stroke="#0b3f8a" stroke-width="0.8"/><rect x="-2" y="-1.5" width="10" height="10" fill="#1766d0" stroke="#0b3f8a" stroke-width="0.8"/></svg>
<svg class="a" style="left:193.0px;top:588.0px" width="20" height="20" viewBox="-10.0 -10.0 20 20"><rect x="-8" y="-8" width="10" height="10" fill="#1766d0" stroke="#0b3f8a" stroke-width="0.8"/><rect x="-1.5" y="-1" width="9.5" height="9.5" fill="#fff" stroke="#222" stroke-width="1"/></svg>
<svg class="a" style="left:218.0px;top:588.0px" width="20" height="20" viewBox="-10.0 -10.0 20 20"><rect x="-8" y="-8" width="11" height="11" fill="#fff" stroke="#222" stroke-width="1"/><rect x="-3" y="-2.5" width="11" height="11" fill="#fff" stroke="#222" stroke-width="1"/><rect x="-3" y="-2.5" width="6" height="5.5" fill="#1766d0"/></svg>
<svg class="a" style="left:243px;top:596px;" width="8" height="6" viewBox="0 0 8 6"><path d="M0,0 L8,0 L4,5Z" fill="#3a3a3a"/></svg>
<div class="a" style="left:258.5px;top:584.5px;width:11px;height:11px;background:linear-gradient(#8a8b8f,#747579);border:1px solid #55565a;border-radius:2px"></div>
<svg class="a" style="left:260.0px;top:586.5px;" width="8" height="7" viewBox="0 0 8 7"><path d="M1,5 L4,1 L7,5Z" fill="#3a3a3a"/></svg>
<div class="a" style="left:258.5px;top:701px;width:11px;height:11px;background:linear-gradient(#8a8b8f,#747579);border:1px solid #55565a;border-radius:2px"></div>
<svg class="a" style="left:260.0px;top:703.0px;" width="8" height="7" viewBox="0 0 8 7"><path d="M1,2 L4,6 L7,2Z" fill="#3a3a3a"/></svg>
<svg class="a" style="left:261px;top:627px;" width="6" height="8" viewBox="0 0 6 8"><path d="M0,1H6M0,3.5H6M0,6H6" stroke="#3c3c3c" stroke-width="1"/></svg>
<div class="a" style="left:258.5px;top:759.5px;width:11px;height:11px;background:linear-gradient(#8a8b8f,#747579);border:1px solid #55565a;border-radius:2px"></div>
<svg class="a" style="left:260.0px;top:761.5px;" width="8" height="7" viewBox="0 0 8 7"><path d="M1,5 L4,1 L7,5Z" fill="#3a3a3a"/></svg>
<div class="a" style="left:258.5px;top:862px;width:11px;height:11px;background:linear-gradient(#8a8b8f,#747579);border:1px solid #55565a;border-radius:2px"></div>
<svg class="a" style="left:260.0px;top:864.0px;" width="8" height="7" viewBox="0 0 8 7"><path d="M1,2 L4,6 L7,2Z" fill="#3a3a3a"/></svg>
<svg class="a" style="left:261px;top:787px;" width="6" height="8" viewBox="0 0 6 8"><path d="M0,1H6M0,3.5H6M0,6H6" stroke="#3c3c3c" stroke-width="1"/></svg>
<div class="a" style="left:257.5px;top:921px;width:10px;height:10px;background:linear-gradient(#8a8b8f,#747579);border:1px solid #55565a;border-radius:2px"></div>
<svg class="a" style="left:258.5px;top:922.5px;" width="8" height="7" viewBox="0 0 8 7"><path d="M1,5 L4,1 L7,5Z" fill="#3a3a3a"/></svg>
<div class="a" style="left:257.5px;top:1006px;width:10px;height:10px;background:linear-gradient(#8a8b8f,#747579);border:1px solid #55565a;border-radius:2px"></div>
<svg class="a" style="left:258.5px;top:1007.5px;" width="8" height="7" viewBox="0 0 8 7"><path d="M1,2 L4,6 L7,2Z" fill="#3a3a3a"/></svg>
<svg class="a" style="left:259.5px;top:953px;" width="6" height="8" viewBox="0 0 6 8"><path d="M0,1H6M0,3.5H6M0,6H6" stroke="#3c3c3c" stroke-width="1"/></svg>
<svg class="a" style="left:230.0px;top:898.0px" width="20" height="20" viewBox="-10.0 -10.0 20 20"><path d="M-5,-7.5 C-7.5,-6 -7.5,-2 -4.5,-0.8 L-1.8,-0.3 L-1.8,8 L1.8,8 L1.8,-0.3 L4.5,-0.8 C7.5,-2 7.5,-6 5,-7.5 L5,-3.8 L2.5,-2.6 L2.5,-7 L-2.5,-7 L-2.5,-2.6 L-5,-3.8Z" fill="#f0f0f0" stroke="#222" stroke-width="1"/></svg>
<svg class="a" style="left:211.0px;top:1017.0px" width="20" height="20" viewBox="-10.0 -10.0 20 20"><path d="M-5,-8 L-2,-3 L-4,-1Z" fill="#aaa"/><path d="M-3,-2 L2,3" stroke="#9a9a9a" stroke-width="1.5"/><rect x="0" y="0" width="7" height="7" fill="none" stroke="#9a9a9a" stroke-width="0.9"/><path d="M0,3.5 L7,3.5 M3.5,0 L3.5,7" stroke="#9a9a9a" stroke-width="0.8"/></svg>
<svg class="a" style="left:228.0px;top:1017.0px" width="20" height="20" viewBox="-10.0 -10.0 20 20"><path d="M-2,-8 C-5,-3 -6.5,-1 -6.5,1.5 C-6.5,4.5 -4.5,6 -2,6 C0.5,6 2.5,4.5 2.5,1.5 C2.5,-1 1,-3 -2,-8Z" fill="#1a1a1a"/><path d="M-4.5,1 C-4.5,3 -3.5,4 -2.2,4.3" stroke="#999" stroke-width="1" fill="none"/><path d="M4.5,1.5 L4.5,8.5 M1,5 L8,5" stroke="#111" stroke-width="1.8"/></svg>
<svg class="a" style="left:248.5px;top:1017.0px" width="20" height="20" viewBox="-10.0 -10.0 20 20"><path d="M-5,-3.5 L-3.8,7 L3.8,7 L5,-3.5Z" fill="#8e8f93" stroke="#222" stroke-width="1"/><ellipse cx="0" cy="-3.5" rx="5.5" ry="1.8" fill="#8e8f93" stroke="#222" stroke-width="1"/><path d="M-3,-5 C-2,-8 2,-8 3,-5" fill="none" stroke="#222" stroke-width="1.1"/><path d="M-2.2,-0.5 L-1.6,5.5 M0,-0.5 L0,5.5 M2.2,-0.5 L1.6,5.5" stroke="#555" stroke-width="0.9"/></svg>
<svg class="a" style="left:1600.0px;top:69.0px" width="24" height="24" viewBox="-12.0 -12.0 24 24"><rect x="-4" y="-3" width="12" height="10" fill="#f4f4f4" stroke="#555" stroke-width="1"/><rect x="-9" y="-8" width="12" height="10" fill="#fff" stroke="#d01818" stroke-width="1.8"/></svg>
<svg class="a" style="left:1672.0px;top:68.0px" width="24" height="24" viewBox="-12.0 -12.0 24 24"><path d="M-8,-6 C-4,-8 0,-4 4,-6 M-8,-3 C-4,-5 0,-1 4,-3 M-8,0 C-4,-2 0,2 4,0" stroke="#4a4a4a" stroke-width="1.1" fill="none"/><circle cx="3" cy="3" r="3.5" fill="#9a9a9a" stroke="#4a4a4a" stroke-width="1"/><path d="M5.5,5.5 L8,8" stroke="#4a4a4a" stroke-width="1.6"/></svg>
<svg class="a" style="left:1813.0px;top:405.0px" width="20" height="20" viewBox="-10.0 -10.0 20 20"><path d="M2.5,2 L7,7.5" stroke="#111" stroke-width="2.4" stroke-linecap="round"/><circle cx="-1.5" cy="-2" r="5.6" fill="#fff" stroke="#111" stroke-width="1.2"/><circle cx="-1.5" cy="-2" r="4.2" fill="none" stroke="#111" stroke-width="0.9"/><path d="M-4.5,-2 L1.5,-2" stroke="#111" stroke-width="1.8"/></svg>
<svg class="a" style="left:1833.0px;top:405.0px" width="20" height="20" viewBox="-10.0 -10.0 20 20"><path d="M2.5,2 L7,7.5" stroke="#111" stroke-width="2.4" stroke-linecap="round"/><circle cx="-1.5" cy="-2" r="5.6" fill="#fff" stroke="#111" stroke-width="1.2"/><circle cx="-1.5" cy="-2" r="4.2" fill="none" stroke="#111" stroke-width="0.9"/><path d="M-4.5,-2 L1.5,-2" stroke="#111" stroke-width="1.8"/><path d="M-1.5,-5 L-1.5,1" stroke="#111" stroke-width="1.8"/></svg>
<div class="a" style="left:1855px;top:407px;width:16px;height:16px;background:#111;border:2px solid #111;box-shadow:inset 0 0 0 1.5px #555"></div>
<div class="a" style="left:1876px;top:408px;width:1px;height:34px;background:#5e5f63"></div>
<svg class="a" style="left:1877.0px;top:405.0px" width="20" height="20" viewBox="-10.0 -10.0 20 20"><rect x="-8" y="-8" width="12" height="10" fill="#fff" stroke="#111" stroke-width="1"/><rect x="-8" y="-8" width="12" height="2.5" fill="#111"/><rect x="-4" y="-2" width="12" height="10" fill="#fff" stroke="#111" stroke-width="1"/><path d="M-3,-4 L4,3" stroke="#111" stroke-width="2"/><path d="M6,5 L1,4 L5,0Z" fill="#111"/></svg>
<svg class="a" style="left:1897.0px;top:405.0px" width="20" height="20" viewBox="-10.0 -10.0 20 20"><rect x="-8" y="-8" width="16" height="16" fill="#fff" stroke="#111" stroke-width="1"/><rect x="-8" y="-8" width="16" height="3" fill="#111"/><path d="M-4,-2 L4,5" stroke="#111" stroke-width="2.2"/><path d="M-6.5,-4 L-1.5,-3 L-5.5,1Z M6.5,7 L1.5,6 L5.5,2Z" fill="#111"/></svg>
<svg class="a" style="left:1813.0px;top:425.5px" width="20" height="20" viewBox="-10.0 -10.0 20 20"><path d="M-4.5,3 C-5.5,-5 4,-7.5 6,0 C6.5,2.5 6,4 5.6,5.5" fill="none" stroke="#1e1e1e" stroke-width="2.3"/><path d="M-8.8,0.5 L-0.8,1.2 L-5,7.2Z" fill="#1e1e1e"/></svg>
<svg class="a" style="left:1833.0px;top:425.5px" width="20" height="20" viewBox="-10.0 -10.0 20 20"><path d="M4.5,3 C5.5,-5 -4,-7.5 -6,0 C-6.5,2.5 -6,4 -5.6,5.5" fill="none" stroke="#1e1e1e" stroke-width="2.3"/><path d="M8.8,0.5 L0.8,1.2 L5,7.2Z" fill="#1e1e1e"/></svg>
<svg class="a" style="left:1853.0px;top:425.5px" width="20" height="20" viewBox="-10.0 -10.0 20 20"><path d="M-1.8,-8 L2.2,-6.8 L-1,-4.8Z" fill="#5e5f63" transform="rotate(0)"/><path d="M-1.8,-8 L2.2,-6.8 L-1,-4.8Z" fill="#5e5f63" transform="rotate(45)"/><path d="M-1.8,-8 L2.2,-6.8 L-1,-4.8Z" fill="#5e5f63" transform="rotate(90)"/><path d="M-1.8,-8 L2.2,-6.8 L-1,-4.8Z" fill="#5e5f63" transform="rotate(135)"/><path d="M-1.8,-8 L2.2,-6.8 L-1,-4.8Z" fill="#5e5f63" transform="rotate(180)"/><path d="M-1.8,-8 L2.2,-6.8 L-1,-4.8Z" fill="#5e5f63" transform="rotate(225)"/><path d="M-1.8,-8 L2.2,-6.8 L-1,-4.8Z" fill="#5e5f63" transform="rotate(270)"/><path d="M-1.8,-8 L2.2,-6.8 L-1,-4.8Z" fill="#5e5f63" transform="rotate(315)"/></svg>
<svg class="a" style="left:1877.0px;top:425.5px" width="20" height="20" viewBox="-10.0 -10.0 20 20"><g transform="scale(0.95)"><path d="M-5.5,-2 C-4.5,-8.5 4.5,-8.5 5.5,-3" fill="none" stroke="#262626" stroke-width="2"/><path d="M8.2,-4.8 L5.5,0.8 L2.3,-3.8Z" fill="#262626"/><path d="M0,-4 L0,8.5" stroke="#262626" stroke-width="1.2" stroke-dasharray="1.4 1.1"/><path d="M-7.5,1 L-2,4.8 L-7.5,8.5Z" fill="#fff"/><path d="M7.5,1 L2,4.8 L7.5,8.5Z" fill="#262626"/></g></svg>
<svg class="a" style="left:1896.5px;top:425.5px" width="20" height="20" viewBox="-10.0 -10.0 20 20"><g transform="scale(0.95)"><path d="M-1,-6.5 C-8.5,-6.5 -8.5,3.5 -3,4.6" fill="none" stroke="#262626" stroke-width="2"/><path d="M-4,1.3 L-0.6,5 L-5.3,7Z" fill="#262626"/><path d="M-1,0 L9.5,0" stroke="#262626" stroke-width="1.2" stroke-dasharray="1.4 1.1"/><path d="M0,-8.5 L8.5,-8.5 L4.2,-2.8Z" fill="#262626"/><path d="M0,8.5 L8.5,8.5 L4.2,2.8Z" fill="#fff"/></g></svg>
<svg class="a" style="left:1599.0px;top:446.0px" width="24" height="24" viewBox="-12.0 -12.0 24 24"><path d="M-7,-5 C-3,-8 3,-3 8,-6 L8,-4 C3,-1 -3,-6 -7,-3Z M-7,-1 C-3,-4 3,1 8,-2 L8,0 C3,3 -3,-2 -7,1Z M-7,3 C-3,0 3,5 8,2 L8,4 C3,7 -3,2 -7,5Z" fill="#f4f4f4" stroke="#222" stroke-width="0.9"/></svg>
<svg class="a" style="left:1654.0px;top:448.0px" width="20" height="20" viewBox="-10.0 -10.0 20 20"><path d="M-8,5 C-2,4 3,0 7,-6" stroke="#58595d" stroke-width="1.6" fill="none"/><path d="M-4,2 L-2,5" stroke="#58595d" stroke-width="1.2"/></svg>
<svg class="a" style="left:1682.0px;top:447.0px" width="20" height="20" viewBox="-10.0 -10.0 20 20"><rect x="-9" y="-8" width="18" height="15" fill="#8b8c90"/><path d="M-4,4 C-8,0 -4,-5 0,-3 M4,-3 C8,1 4,6 0,4" stroke="#222" stroke-width="2.2" fill="none"/><path d="M0,-6 L3,-2 L-2,-1Z M0,7 L-3,3 L2,2Z" fill="#222"/></svg>
<svg class="a" style="left:1710.0px;top:449.0px" width="20" height="20" viewBox="-10.0 -10.0 20 20"><path d="M-6,2 L-2,-1 L0,1 L4,-2 L6,0" stroke="#55565a" stroke-width="2" fill="none" stroke-dasharray="2.5 1.5"/><path d="M-6,5 L-2,2 L0,4 L4,1" stroke="#55565a" stroke-width="1.4" fill="none" stroke-dasharray="2 1.5"/></svg>
<svg class="a" style="left:1738.0px;top:448.0px" width="20" height="20" viewBox="-10.0 -10.0 20 20"><circle cx="0" cy="0" r="7" fill="#5c5d61"/><circle cx="0" cy="-3.5" r="1.5" fill="#8e8f93"/><rect x="-1.3" y="-1" width="2.6" height="6" fill="#8e8f93"/></svg>
<svg class="a" style="left:1758.0px;top:490.0px" width="20" height="20" viewBox="-10.0 -10.0 20 20"><ellipse cx="0" cy="1" rx="7" ry="4.8" fill="#1a1a1a"/><ellipse cx="0" cy="-1" rx="7" ry="4.2" fill="#1a1a1a"/><ellipse cx="0" cy="-1.8" rx="5" ry="2.4" fill="#8a8b8f"/></svg>
<svg class="a" style="left:1778.0px;top:490.0px" width="20" height="20" viewBox="-10.0 -10.0 20 20"><path d="M-1.8,-4 L1.8,-4 L3,8.5 L-3,8.5Z" fill="#f4f4f4" stroke="#222" stroke-width="0.8"/><path d="M-2,-1 L2,-1 L2.3,2 L-2.3,2Z M-2.6,5 L2.6,5 L3,8.5 L-3,8.5Z" fill="#333"/><path d="M-1.5,-7.5 L1.5,-7.5 L2,-4 L-2,-4Z" fill="#222"/><path d="M-3,-5.5 L-8,-8 M-3,-5 L-8,-3 M3,-5.5 L8,-8 M3,-5 L8,-3" stroke="#b8b9bd" stroke-width="0.9"/></svg>
<svg class="a" style="left:1796.0px;top:489.0px" width="22" height="22" viewBox="-11.0 -11.0 22 22"><defs><linearGradient id="lk" x1="0" y1="0" x2="0" y2="1"><stop offset="0" stop-color="#666"/><stop offset="1" stop-color="#bbb"/></linearGradient></defs><path d="M-4,-1 L-4,-4.5 C-4,-9.5 4,-9.5 4,-4.5 L4,-1" fill="none" stroke="#1a1a1a" stroke-width="2"/><rect x="-6.5" y="-1.5" width="13" height="10" fill="url(#lk)" stroke="#1a1a1a" stroke-width="1.2"/><rect x="-0.8" y="1" width="1.6" height="3.5" fill="#111"/><rect x="-0.8" y="5.5" width="1.6" height="1.4" fill="#111"/></svg>
<svg class="a" style="left:1815.0px;top:488.0px" width="22" height="22" viewBox="-11.0 -11.0 22 22"><path d="M-6,-3 L-6,-5 C-6,-8.5 -1,-8.5 -1,-5 L-1,-3" fill="none" stroke="#1a1a1a" stroke-width="1.5"/><rect x="-7.5" y="-3.5" width="8" height="6.5" fill="#f4f4f4" stroke="#1a1a1a" stroke-width="1.1"/><rect x="-4.2" y="-1.8" width="1.4" height="3" fill="#111"/><rect x="1.5" y="3" width="3" height="3" fill="#fff"/><path d="M5.5,8.5 L5.5,3 M5.5,3.5 L9.5,3.5" stroke="#fff" stroke-width="1.6" fill="none"/><rect x="1.5" y="6.5" width="2.5" height="2.5" fill="#fff"/></svg>
<svg class="a" style="left:1841.0px;top:490.0px" width="20" height="20" viewBox="-10.0 -10.0 20 20"><rect x="-8" y="-8" width="13" height="15" fill="#85868a"/><path d="M-6,2 C-5,-2 -3,-3 -2,-6 C-1,-3 1,-2 2,-5 C3,-1 3.5,1 3,3 C1,5 -4,5 -6,2Z" fill="#9a9b9f"/><path d="M0,2 L5.5,7.5 M5.5,2 L0,7.5" stroke="#68696d" stroke-width="1.8"/></svg>
<svg class="a" style="left:1862px;top:498px;" width="8" height="6" viewBox="0 0 8 6"><path d="M0,0 L8,0 L4,5Z" fill="#68696d"/></svg>
<svg class="a" style="left:1878.0px;top:490.0px" width="20" height="20" viewBox="-10.0 -10.0 20 20"><path d="M-8,7 L-8,-8 L6,-8" fill="none" stroke="#68696d" stroke-width="1"/><path d="M-8,7 L6,-8" stroke="#68696d" stroke-width="1.4"/><path d="M-5.5,-5.5 L-1,-5.5 L-5.5,-1Z" fill="none" stroke="#68696d" stroke-width="0.9"/><path d="M0.5,2 L6,7.5 M6,2 L0.5,7.5" stroke="#68696d" stroke-width="1.8"/></svg>
<svg class="a" style="left:1899px;top:498px;" width="8" height="6" viewBox="0 0 8 6"><path d="M0,0 L8,0 L4,5Z" fill="#68696d"/></svg>
<svg class="a" style="left:1584.0px;top:542.0px" width="20" height="20" viewBox="-10.0 -10.0 20 20"><g transform="scale(0.78)"><path d="M-8,0.5 C-5,-4.5 5,-4.5 8,0.5 C5,4 -5,4 -8,0.5Z" fill="#f4f4f4" stroke="#1a1a1a" stroke-width="1"/><path d="M-8,0 C-5,-5.5 5,-5.5 8,0" fill="none" stroke="#111" stroke-width="1.8"/><circle cx="0" cy="0.2" r="3.3" fill="#111"/><circle cx="-1" cy="-1" r="0.9" fill="#bbb"/></g></svg>
<svg class="a" style="left:1584.0px;top:573.0px" width="20" height="20" viewBox="-10.0 -10.0 20 20"><g transform="scale(0.78)"><path d="M-8,0.5 C-5,-4.5 5,-4.5 8,0.5 C5,4 -5,4 -8,0.5Z" fill="#f4f4f4" stroke="#1a1a1a" stroke-width="1"/><path d="M-8,0 C-5,-5.5 5,-5.5 8,0" fill="none" stroke="#111" stroke-width="1.8"/><circle cx="0" cy="0.2" r="3.3" fill="#111"/><circle cx="-1" cy="-1" r="0.9" fill="#bbb"/></g></svg>
<svg class="a" style="left:1584.0px;top:691.0px" width="20" height="20" viewBox="-10.0 -10.0 20 20"><g transform="scale(0.78)"><path d="M-8,0.5 C-5,-4.5 5,-4.5 8,0.5 C5,4 -5,4 -8,0.5Z" fill="#f4f4f4" stroke="#1a1a1a" stroke-width="1"/><path d="M-8,0 C-5,-5.5 5,-5.5 8,0" fill="none" stroke="#111" stroke-width="1.8"/><circle cx="0" cy="0.2" r="3.3" fill="#111"/><circle cx="-1" cy="-1" r="0.9" fill="#bbb"/></g></svg>
<svg class="a" style="left:1584.0px;top:727.0px" width="20" height="20" viewBox="-10.0 -10.0 20 20"><g transform="scale(0.78)"><path d="M-8,0.5 C-5,-4.5 5,-4.5 8,0.5 C5,4 -5,4 -8,0.5Z" fill="#f4f4f4" stroke="#1a1a1a" stroke-width="1"/><path d="M-8,0 C-5,-5.5 5,-5.5 8,0" fill="none" stroke="#111" stroke-width="1.8"/><circle cx="0" cy="0.2" r="3.3" fill="#111"/><circle cx="-1" cy="-1" r="0.9" fill="#bbb"/></g></svg>
<svg class="a" style="left:1584.0px;top:758.0px" width="20" height="20" viewBox="-10.0 -10.0 20 20"><g transform="scale(0.78)"><path d="M-8,0.5 C-5,-4.5 5,-4.5 8,0.5 C5,4 -5,4 -8,0.5Z" fill="#f4f4f4" stroke="#1a1a1a" stroke-width="1"/><path d="M-8,0 C-5,-5.5 5,-5.5 8,0" fill="none" stroke="#111" stroke-width="1.8"/><circle cx="0" cy="0.2" r="3.3" fill="#111"/><circle cx="-1" cy="-1" r="0.9" fill="#bbb"/></g></svg>
<svg class="a" style="left:1584.0px;top:835.0px" width="20" height="20" viewBox="-10.0 -10.0 20 20"><g transform="scale(0.78)"><path d="M-8,0.5 C-5,-4.5 5,-4.5 8,0.5 C5,4 -5,4 -8,0.5Z" fill="#f4f4f4" stroke="#1a1a1a" stroke-width="1"/><path d="M-8,0 C-5,-5.5 5,-5.5 8,0" fill="none" stroke="#111" stroke-width="1.8"/><circle cx="0" cy="0.2" r="3.3" fill="#111"/><circle cx="-1" cy="-1" r="0.9" fill="#bbb"/></g></svg>
<svg class="a" style="left:1584.0px;top:876.0px" width="20" height="20" viewBox="-10.0 -10.0 20 20"><g transform="scale(0.78)"><path d="M-8,0.5 C-5,-4.5 5,-4.5 8,0.5 C5,4 -5,4 -8,0.5Z" fill="#f4f4f4" stroke="#1a1a1a" stroke-width="1"/><path d="M-8,0 C-5,-5.5 5,-5.5 8,0" fill="none" stroke="#111" stroke-width="1.8"/><circle cx="0" cy="0.2" r="3.3" fill="#111"/><circle cx="-1" cy="-1" r="0.9" fill="#bbb"/></g></svg>
<svg class="a" style="left:1584.0px;top:917.0px" width="20" height="20" viewBox="-10.0 -10.0 20 20"><g transform="scale(0.78)"><path d="M-8,0.5 C-5,-4.5 5,-4.5 8,0.5 C5,4 -5,4 -8,0.5Z" fill="#f4f4f4" stroke="#1a1a1a" stroke-width="1"/><path d="M-8,0 C-5,-5.5 5,-5.5 8,0" fill="none" stroke="#111" stroke-width="1.8"/><circle cx="0" cy="0.2" r="3.3" fill="#111"/><circle cx="-1" cy="-1" r="0.9" fill="#bbb"/></g></svg>
<svg class="a" style="left:1604.0px;top:692.0px" width="18" height="18" viewBox="-9.0 -9.0 18 18"><path d="M-7,5 L-3,1 L4.5,-6 C5.5,-7 7,-5.5 6,-4.5 L-1,3Z" fill="#fff" stroke="#222" stroke-width="0.9"/><path d="M-7,5 L-4,1.5 L-2,3.5Z" fill="#111"/></svg>
<svg class="a" style="left:1624.0px;top:516.0px" width="12" height="12" viewBox="-6.0 -6.0 12 12"><path d="M-2.5,-5 L3.5,0 L-2.5,5Z" fill="#fff"/></svg>
<svg class="a" style="left:1639.0px;top:512.0px" width="20" height="20" viewBox="-10.0 -10.0 20 20"><path d="M-6.5,5 L-6.5,-5 L-2.5,-5 L-1.5,-3.5 L6.5,-3.5 L6.5,5Z" fill="#f6f2ac" stroke="#8a8660" stroke-width="0.8"/></svg>
<svg class="a" style="left:1624.0px;top:549.0px" width="12" height="12" viewBox="-6.0 -6.0 12 12"><path d="M-4.5,-2.5 L4.5,-2.5 L0,3.5Z" fill="#fff"/></svg>
<svg class="a" style="left:1639.0px;top:543.0px" width="20" height="20" viewBox="-10.0 -10.0 20 20"><path d="M-7,5 L-7,-5 L-3,-5 L-2,-3.5 L4,-3.5 L4,-1" fill="#f4f0a8" stroke="#222" stroke-width="1"/><path d="M-7,5 L-3.5,-1 L8,-1 L4.5,5Z" fill="#55552a" stroke="#222" stroke-width="1"/><path d="M-5.5,3.5 L-2.8,-0.2 L6.5,-0.2" fill="none" stroke="#f4f0a8" stroke-width="1.4"/></svg>
<svg class="a" style="left:1639.0px;top:578.0px" width="12" height="12" viewBox="-6.0 -6.0 12 12"><path d="M-2.5,-5 L3.5,0 L-2.5,5Z" fill="#fff"/></svg>
<svg class="a" style="left:1654.0px;top:574.0px" width="20" height="20" viewBox="-10.0 -10.0 20 20"><path d="M-6.5,5 L-6.5,-5 L-2.5,-5 L-1.5,-3.5 L6.5,-3.5 L6.5,5Z" fill="#f6f2ac" stroke="#8a8660" stroke-width="0.8"/></svg>
<svg class="a" style="left:1639.0px;top:734.0px" width="12" height="12" viewBox="-6.0 -6.0 12 12"><path d="M-4.5,-2.5 L4.5,-2.5 L0,3.5Z" fill="#fff"/></svg>
<svg class="a" style="left:1654.0px;top:728.0px" width="20" height="20" viewBox="-10.0 -10.0 20 20"><path d="M-7,5 L-7,-5 L-3,-5 L-2,-3.5 L4,-3.5 L4,-1" fill="#f4f0a8" stroke="#222" stroke-width="1"/><path d="M-7,5 L-3.5,-1 L8,-1 L4.5,5Z" fill="#55552a" stroke="#222" stroke-width="1"/><path d="M-5.5,3.5 L-2.8,-0.2 L6.5,-0.2" fill="none" stroke="#f4f0a8" stroke-width="1.4"/></svg>
<svg class="a" style="left:1654.0px;top:765.0px" width="12" height="12" viewBox="-6.0 -6.0 12 12"><path d="M-4.5,-2.5 L4.5,-2.5 L0,3.5Z" fill="#fff"/></svg>
<svg class="a" style="left:1669.0px;top:759.0px" width="20" height="20" viewBox="-10.0 -10.0 20 20"><path d="M-7,5 L-7,-5 L-3,-5 L-2,-3.5 L4,-3.5 L4,-1" fill="#f4f0a8" stroke="#222" stroke-width="1"/><path d="M-7,5 L-3.5,-1 L8,-1 L4.5,5Z" fill="#55552a" stroke="#222" stroke-width="1"/><path d="M-5.5,3.5 L-2.8,-0.2 L6.5,-0.2" fill="none" stroke="#f4f0a8" stroke-width="1.4"/></svg>
<div class="a" style="left:1900px;top:515px;width:10px;height:10px;background:linear-gradient(#8a8b8f,#747579);border:1px solid #55565a;border-radius:2px"></div>
<svg class="a" style="left:1901.0px;top:516.5px;" width="8" height="7" viewBox="0 0 8 7"><path d="M1,5 L4,1 L7,5Z" fill="#3a3a3a"/></svg>
<div class="a" style="left:1900px;top:1000px;width:10px;height:10px;background:linear-gradient(#8a8b8f,#747579);border:1px solid #55565a;border-radius:2px"></div>
<svg class="a" style="left:1901.0px;top:1001.5px;" width="8" height="7" viewBox="0 0 8 7"><path d="M1,2 L4,6 L7,2Z" fill="#3a3a3a"/></svg>
<svg class="a" style="left:1902px;top:660px;" width="6" height="8" viewBox="0 0 6 8"><path d="M0,1H6M0,3.5H6M0,6H6" stroke="#3c3c3c" stroke-width="1"/></svg>
<svg class="a" style="left:1580.0px;top:1016.0px" width="20" height="20" viewBox="-10.0 -10.0 20 20"><path d="M-7,-6 L0,-8 L7,-6 L0,-4Z M-7,-3 L0,-5 L7,-3 L0,-1Z M-7,0 L0,-2 L7,0 L0,2Z M-7,3 L0,1 L7,3 L0,5Z M-7,6 L0,4 L7,6 L0,8Z" fill="none" stroke="#f0f0f0" stroke-width="1"/></svg>
<svg class="a" style="left:1751.0px;top:1017.0px" width="20" height="20" viewBox="-10.0 -10.0 20 20"><path d="M-6,-7 L6,-7 L6,3 L2,7.5 L-6,7.5Z" fill="#fff" stroke="#333" stroke-width="1"/><path d="M6,3 L2,3 L2,7.5Z" fill="#444"/></svg>
<svg class="a" style="left:1771.0px;top:1017.0px" width="20" height="20" viewBox="-10.0 -10.0 20 20"><path d="M-6,-7 L5,-7 L5,7.5 L-6,7.5Z" fill="#fff" stroke="#333" stroke-width="1"/><path d="M2,3 L6,1.5 L9,3 L9,7 L5.5,8.5 L2,7Z" fill="#ddd" stroke="#222" stroke-width="0.8"/><path d="M2,3 L5.5,4.5 L9,3 M5.5,4.5 L5.5,8.5" stroke="#222" stroke-width="0.8" fill="none"/></svg>
<svg class="a" style="left:1791.0px;top:1017.0px" width="20" height="20" viewBox="-10.0 -10.0 20 20"><path d="M-8,5 L-8,-6 L-4,-6 L-3,-4.5 L2,-4.5 L2,5Z" fill="#9a9b9f" stroke="#333" stroke-width="0.9"/><path d="M-1,-2 L8,-2 L8,4 L5,7.5 L-1,7.5Z" fill="#fff" stroke="#333" stroke-width="0.9"/><path d="M8,4 L5,4 L5,7.5Z" fill="#444"/></svg>
<svg class="a" style="left:1811.0px;top:1017.0px" width="20" height="20" viewBox="-10.0 -10.0 20 20"><path d="M-3,-6 L3,-6 L3,0 L6,0 L0,7 L-6,0 L-3,0Z" fill="#66676b"/><path d="M0,-3 L0,3" stroke="#8e8f93" stroke-width="1" stroke-dasharray="1 1"/></svg>
<svg class="a" style="left:1831.0px;top:1017.0px" width="20" height="20" viewBox="-10.0 -10.0 20 20"><path d="M-3,-5 L3,-5 L3,1 L6,1 L0,8 L-6,1 L-3,1Z" fill="#66676b"/><path d="M-5,-7.5 L5,-7.5" stroke="#66676b" stroke-width="1.5"/></svg>
<svg class="a" style="left:1851.0px;top:1017.0px" width="20" height="20" viewBox="-10.0 -10.0 20 20"><rect x="-8" y="-4.5" width="16" height="9.5" fill="#222"/><circle cx="0" cy="0.2" r="3" fill="#fff"/></svg>
<svg class="a" style="left:1871.0px;top:1017.0px" width="20" height="20" viewBox="-10.0 -10.0 20 20"><path d="M-5,-7 L-1,-7 L-1,0 L2,0 L-3,7 L-8,0 L-5,0Z" fill="#66676b"/><path d="M1,-5 L8,-2 L3,1 L5,5" stroke="#66676b" stroke-width="1.6" fill="none"/></svg>
<svg class="a" style="left:1891.0px;top:1017.0px" width="20" height="20" viewBox="-10.0 -10.0 20 20"><path d="M-5,-3.5 L-3.8,7 L3.8,7 L5,-3.5Z" fill="#f4f4f4" stroke="#222" stroke-width="1"/><ellipse cx="0" cy="-3.5" rx="5.5" ry="1.8" fill="#f4f4f4" stroke="#222" stroke-width="1"/><path d="M-3,-5 C-2,-8 2,-8 3,-5" fill="none" stroke="#222" stroke-width="1.1"/><path d="M-2.2,-0.5 L-1.6,5.5 M0,-0.5 L0,5.5 M2.2,-0.5 L1.6,5.5" stroke="#555" stroke-width="0.9"/></svg>
<div class="a" style="left:1736px;top:1013px;width:16px;height:3px;border-top:1.5px dotted #3e3e3e"></div>
<svg class="a" style="left:373.5px;top:1022.0px" width="20" height="20" viewBox="-10.0 -10.0 20 20"><g transform="scale(0.68)"><path d="M2.5,2 L7,7.5" stroke="#111" stroke-width="2.4" stroke-linecap="round"/><circle cx="-1.5" cy="-2" r="5.6" fill="#fff" stroke="#111" stroke-width="1.2"/><circle cx="-1.5" cy="-2" r="4.2" fill="none" stroke="#111" stroke-width="0.9"/><path d="M-4.5,-2 L1.5,-2" stroke="#111" stroke-width="1.8"/></g></svg>
<svg class="a" style="left:393.5px;top:1022.0px" width="20" height="20" viewBox="-10.0 -10.0 20 20"><g transform="scale(0.68)"><path d="M2.5,2 L7,7.5" stroke="#111" stroke-width="2.4" stroke-linecap="round"/><circle cx="-1.5" cy="-2" r="5.6" fill="#fff" stroke="#111" stroke-width="1.2"/><circle cx="-1.5" cy="-2" r="4.2" fill="none" stroke="#111" stroke-width="0.9"/><path d="M-4.5,-2 L1.5,-2" stroke="#111" stroke-width="1.8"/><path d="M-1.5,-5 L-1.5,1" stroke="#111" stroke-width="1.8"/></g></svg>
<div class="a" style="left:416px;top:1026px;width:13px;height:11px;background:#111;box-shadow:inset 0 0 0 2px #111,inset 0 0 0 3px #777"></div>
<svg class="a" style="left:536.0px;top:1025.0px" width="14" height="14" viewBox="-7.0 -7.0 14 14"><g transform="scale(0.72)"><path d="M-4.5,3 C-5.5,-5 4,-7.5 6,0 C6.5,2.5 6,4 5.6,5.5" fill="none" stroke="#1e1e1e" stroke-width="2.3"/><path d="M-8.8,0.5 L-0.8,1.2 L-5,7.2Z" fill="#1e1e1e"/></g></svg>
<svg class="a" style="left:555.0px;top:1025.0px" width="14" height="14" viewBox="-7.0 -7.0 14 14"><g transform="scale(0.72)"><path d="M4.5,3 C5.5,-5 -4,-7.5 -6,0 C-6.5,2.5 -6,4 -5.6,5.5" fill="none" stroke="#1e1e1e" stroke-width="2.3"/><path d="M8.8,0.5 L0.8,1.2 L5,7.2Z" fill="#1e1e1e"/></g></svg>
<svg class="a" style="left:572.0px;top:1022.0px" width="20" height="20" viewBox="-10.0 -10.0 20 20"><g transform="scale(0.7)"><path d="M-1.8,-8 L2.2,-6.8 L-1,-4.8Z" fill="#5e5f63" transform="rotate(0)"/><path d="M-1.8,-8 L2.2,-6.8 L-1,-4.8Z" fill="#5e5f63" transform="rotate(45)"/><path d="M-1.8,-8 L2.2,-6.8 L-1,-4.8Z" fill="#5e5f63" transform="rotate(90)"/><path d="M-1.8,-8 L2.2,-6.8 L-1,-4.8Z" fill="#5e5f63" transform="rotate(135)"/><path d="M-1.8,-8 L2.2,-6.8 L-1,-4.8Z" fill="#5e5f63" transform="rotate(180)"/><path d="M-1.8,-8 L2.2,-6.8 L-1,-4.8Z" fill="#5e5f63" transform="rotate(225)"/><path d="M-1.8,-8 L2.2,-6.8 L-1,-4.8Z" fill="#5e5f63" transform="rotate(270)"/><path d="M-1.8,-8 L2.2,-6.8 L-1,-4.8Z" fill="#5e5f63" transform="rotate(315)"/></g></svg>
<div class="a" style="left:594px;top:1027px;width:11px;height:10px;background:linear-gradient(#8a8b8f,#747579);border:1px solid #55565a;border-radius:2px"></div>
<svg class="a" style="left:595.5px;top:1028.5px;" width="8" height="7" viewBox="0 0 8 7"><path d="M5.5,0.5 L1.5,3.5 L5.5,6.5Z" fill="#3a3a3a"/></svg>
<div class="a" style="left:1526px;top:1027px;width:11px;height:10px;background:linear-gradient(#8a8b8f,#747579);border:1px solid #55565a;border-radius:2px"></div>
<svg class="a" style="left:1527.5px;top:1028.5px;" width="8" height="7" viewBox="0 0 8 7"><path d="M2.5,0.5 L6.5,3.5 L2.5,6.5Z" fill="#3a3a3a"/></svg>
<svg class="a" style="left:1062px;top:1029px;" width="8" height="6" viewBox="0 0 8 6"><path d="M1,0V6M3.5,0V6M6,0V6" stroke="#3c3c3c" stroke-width="1"/></svg>
<div class="a" style="left:1538px;top:96px;width:11px;height:11px;background:linear-gradient(#8a8b8f,#747579);border:1px solid #55565a;border-radius:2px"></div>
<svg class="a" style="left:1539.5px;top:98.0px;" width="8" height="7" viewBox="0 0 8 7"><path d="M1,5 L4,1 L7,5Z" fill="#3a3a3a"/></svg>
<div class="a" style="left:1538px;top:1014.5px;width:11px;height:10.5px;background:linear-gradient(#8a8b8f,#747579);border:1px solid #55565a;border-radius:2px"></div>
<svg class="a" style="left:1539.5px;top:1016.25px;" width="8" height="7" viewBox="0 0 8 7"><path d="M1,2 L4,6 L7,2Z" fill="#3a3a3a"/></svg>
<svg class="a" style="left:1540.5px;top:554px;" width="6" height="8" viewBox="0 0 6 8"><path d="M0,1H6M0,3.5H6M0,6H6" stroke="#3c3c3c" stroke-width="1"/></svg>
<svg class="a" style="left:1540px;top:81px;" width="7" height="5" viewBox="0 0 7 5"><path d="M0,0 L7,0 L3.5,4.5Z" fill="#2a2a2a"/></svg>
</body></html>
